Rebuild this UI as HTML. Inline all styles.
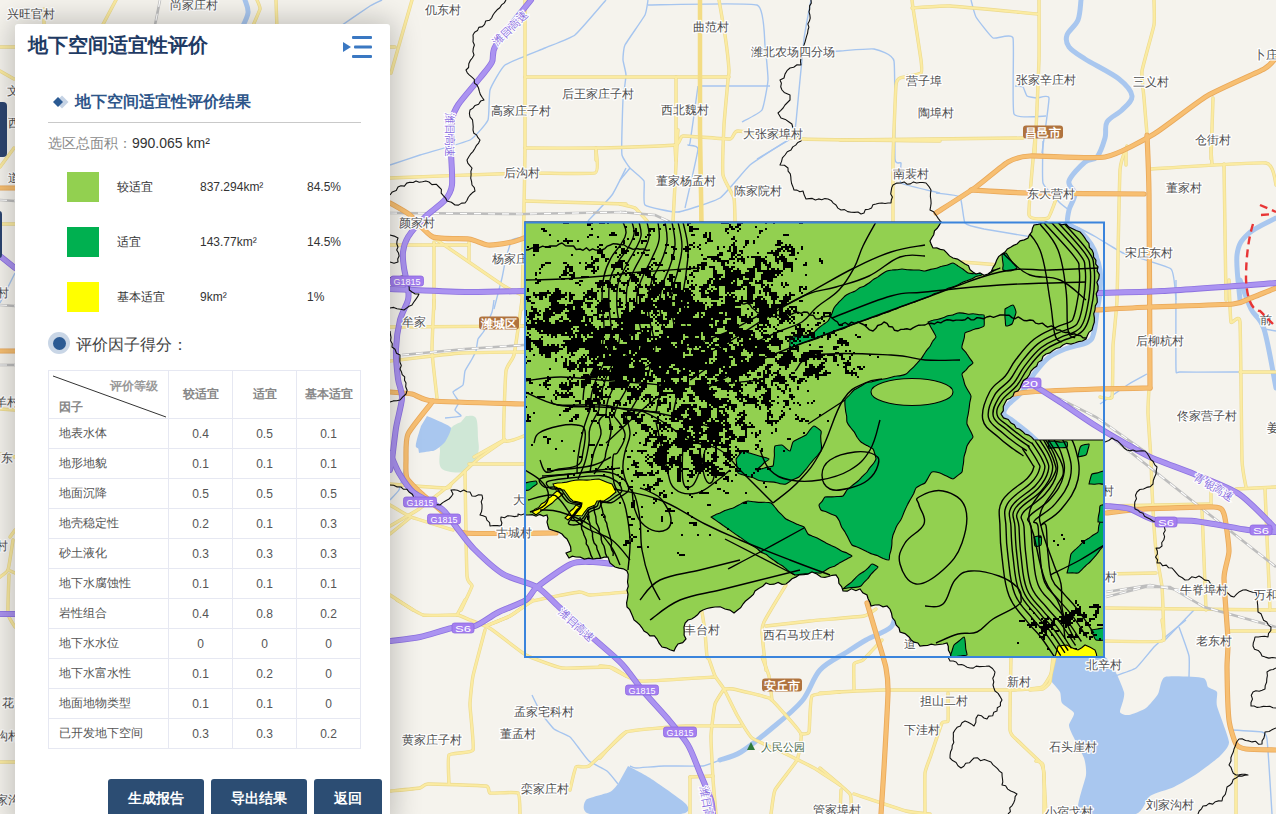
<!DOCTYPE html><html><head><meta charset="utf-8"><style>*{margin:0;padding:0;box-sizing:border-box}
html,body{width:1276px;height:814px;overflow:hidden;background:#f5f3ed;font-family:"Liberation Sans",sans-serif}
#map{position:absolute;left:0;top:0;width:1276px;height:814px}
.lbtn{position:absolute;background:#2c4570;border-radius:4px}
#panel{position:absolute;left:15px;top:24px;width:375px;height:800px;background:#fff;border-radius:3px;box-shadow:0 0 28px 4px rgba(0,0,0,0.22)}
#panel>*{position:absolute}
.title{left:13px;top:9px;font-size:20px;font-weight:bold;color:#1f3b64;line-height:24px;white-space:nowrap}
.menu{left:328px;top:12px}
.dia{left:37px;top:71px}
.sub{left:60px;top:68px;font-size:16px;font-weight:bold;color:#2d5589;line-height:20px;white-space:nowrap}
.hr{left:33px;top:98px;width:313px;height:1px;background:#c9c9c9}
.area{left:33px;top:110px;font-size:14px;line-height:18px;white-space:nowrap}
.area .lab{color:#8a8a8a}.area .val{color:#333}
.sw{left:52px;width:32px;height:30px}
.lt,.lv,.lp{font-size:12px;color:#333;line-height:14px;white-space:nowrap}
.lt{left:102px}.lv{left:185px}.lp{left:292px}
.radio{left:33px;top:308px;width:22px;height:22px;border-radius:50%;background:#c9d6e6}
.radio .dot{position:absolute;left:4.5px;top:4.5px;width:13px;height:13px;border-radius:50%;background:#2b5a93}
.rt{left:61px;top:311px;font-size:16px;color:#444;line-height:20px;white-space:nowrap}
.tb{left:33px;top:346px;border-collapse:collapse;width:313px;table-layout:fixed}
.tb td{border:1px solid #e6e8f2;height:30px;font-size:12px;color:#555;text-align:center;padding:0;white-space:nowrap}
.tb td:first-child{text-align:left;padding-left:10px;width:120px}
.tb tr td:nth-child(2){width:64px}.tb tr td:nth-child(3){width:64px}
.tb tr.hd td{height:48px;font-weight:bold;color:#888}
.tb td.diag{position:relative;padding:0}
.d1{position:absolute;left:61px;top:7px;font-weight:bold;color:#999}
.d2{position:absolute;left:10px;top:28px;font-weight:bold;color:#888}
.btn{top:755px;height:40px;background:#2c4d73;color:#fff;font-size:14px;font-weight:bold;text-align:center;line-height:38px;border-radius:3px}
</style></head><body>
<svg id="map" width="1276" height="814" viewBox="0 0 1276 814"><rect width="1276" height="814" fill="#f5f3ed"/><g fill="#cfe7d6"><path d="M466.0,416.0 C467.7,416.3 474.0,414.3 476.0,418.0 C478.0,421.7 477.7,432.2 478.0,438.0 C478.3,443.8 479.8,447.5 478.0,453.0 C476.2,458.5 473.0,468.3 467.0,471.0 C461.0,473.7 446.5,472.5 442.0,469.0 C437.5,465.5 440.2,454.0 440.0,450.0 C439.8,446.0 439.2,448.7 441.0,445.0 C442.8,441.3 447.7,431.8 451.0,428.0 C454.3,424.2 459.3,423.0 461.0,422.0Z"/></g><g fill="#a9c7ef"><path d="M1054.0,657.0 C1059.1,657.0 1098.0,653.5 1105.0,657.0 C1112.0,660.5 1122.5,686.5 1124.0,692.0 C1125.5,697.5 1119.5,709.7 1120.0,712.0 C1120.5,714.3 1126.4,715.4 1129.0,715.0 C1131.6,714.6 1143.1,710.1 1146.0,708.0 C1148.9,705.9 1156.1,697.1 1158.0,694.0 C1159.9,690.9 1160.5,678.6 1165.0,677.0 C1169.5,675.4 1198.7,677.0 1203.0,678.0 C1207.3,679.0 1206.6,685.6 1208.0,687.0 C1209.4,688.4 1216.1,690.1 1217.0,692.0 C1217.9,693.9 1215.8,701.0 1217.0,706.0 C1218.2,711.0 1228.7,737.0 1229.0,742.0 C1229.3,747.0 1223.1,752.9 1220.0,756.0 C1216.9,759.1 1202.6,769.9 1198.0,773.0 C1193.4,776.1 1178.8,784.7 1174.0,787.0 C1169.2,789.3 1153.8,793.3 1150.0,796.0 C1146.2,798.7 1143.1,812.2 1136.0,814.0 C1128.9,815.8 1084.0,817.9 1079.0,814.0 C1074.0,810.1 1085.5,780.6 1086.0,775.0 C1086.5,769.4 1085.4,762.1 1084.0,758.0 C1082.6,753.9 1073.5,737.3 1072.0,734.0 C1070.5,730.7 1068.8,727.1 1069.0,725.0 C1069.2,722.9 1074.7,715.2 1074.0,713.0 C1073.3,710.8 1063.4,705.1 1062.0,703.0 C1060.6,700.9 1061.2,694.3 1060.0,692.0 C1058.8,689.7 1051.0,681.2 1050.0,680.0Z"/><path d="M628.0,766.0 C630.2,767.2 644.2,774.2 650.0,778.0 C655.8,781.8 682.9,800.4 686.0,804.0 C689.1,807.6 690.6,813.0 681.0,814.0 C671.4,815.0 599.5,815.4 590.0,814.0 C580.5,812.6 584.0,802.2 586.0,800.0 C588.0,797.8 606.8,793.6 610.0,792.0 C613.2,790.4 617.2,784.8 618.0,784.0Z"/><path d="M427.0,416.0 C428.4,416.6 438.6,420.8 441.0,422.0 C443.4,423.2 450.6,426.0 451.0,428.0 C451.4,430.0 446.8,439.7 445.0,442.0 C443.2,444.3 435.9,450.5 433.0,451.0 C430.1,451.5 417.2,449.5 416.0,447.0 C414.8,444.5 420.5,428.1 421.0,426.0Z"/><path d="M417.0,440.0 C418.9,440.0 434.3,439.0 436.0,440.0 C437.7,441.0 435.7,448.7 434.0,450.0 C432.3,451.3 420.5,452.7 419.0,453.0Z"/></g><g fill="none" stroke="#a6c5ef" stroke-width="1.4" stroke-linejoin="round"><path d="M382.0,0.0 C381.2,0.4 373.1,4.0 370.0,6.0 C366.9,8.0 337.3,28.4 335.0,30.0"/><path d="M606.0,0.0 C603.9,2.3 579.1,31.8 575.0,35.0 C570.9,38.2 549.7,46.0 545.0,48.0 C540.3,50.0 508.7,62.2 505.0,65.0 C501.3,67.8 491.1,86.3 490.0,90.0 C488.9,93.7 489.3,116.7 488.0,120.0 C486.7,123.3 474.5,137.7 470.0,140.0 C465.5,142.3 425.3,153.3 420.0,155.0 C414.7,156.7 392.0,164.3 390.0,165.0"/><path d="M648.0,5.0 C655.3,5.0 749.2,2.3 757.0,5.0 C764.8,7.7 764.3,40.0 765.0,45.0 C765.7,50.0 768.2,75.7 768.0,80.0 C767.8,84.3 763.7,107.2 762.0,110.0 C760.3,112.8 743.3,121.2 742.0,122.0"/><path d="M648.0,0.0 C647.8,1.0 646.5,12.0 645.0,15.0 C643.5,18.0 626.5,42.0 625.0,45.0 C623.5,48.0 622.9,58.0 623.0,60.0 C623.1,62.0 626.0,72.3 626.0,75.0 C626.0,77.7 623.3,96.3 623.0,100.0 C622.7,103.7 622.1,126.3 622.0,130.0 C621.9,133.7 621.5,152.5 622.0,155.0 C622.5,157.5 628.5,166.3 630.0,168.0 C631.5,169.7 643.0,178.5 644.0,181.0 C645.0,183.5 642.7,202.9 645.0,205.0 C647.3,207.1 673.0,212.5 678.0,212.0 C683.0,211.5 715.2,201.1 720.0,198.0 C724.8,194.9 745.5,168.9 750.0,165.0 C754.5,161.1 785.5,141.7 788.0,140.0"/><path d="M700.0,86.0 L770.0,86.0"/><path d="M811.0,0.0 C810.5,2.6 805.0,30.9 804.0,39.0 C803.0,47.1 796.7,115.4 796.0,122.0 C795.3,128.6 794.1,136.9 794.0,138.0"/><path d="M765.0,56.0 C770.0,55.7 832.7,51.5 840.0,51.0 C847.3,50.5 870.4,48.3 874.0,49.0 C877.6,49.7 892.6,53.7 894.0,61.0 C895.4,68.3 894.5,152.2 895.0,159.0 C895.5,165.8 900.6,161.4 901.0,163.0 C901.4,164.6 898.4,181.0 901.0,183.0 C903.6,185.0 937.4,192.3 940.0,193.0"/><path d="M698.0,86.0 C697.5,89.8 690.7,139.1 690.0,143.0 C689.3,146.9 687.5,144.6 688.0,145.0 C688.5,145.4 698.2,144.8 698.0,149.0 C697.8,153.2 685.9,204.1 685.0,208.0"/><path d="M757.0,159.0 L789.0,140.0"/><path d="M630.0,168.0 L620.0,180.0"/><path d="M971.0,0.0 C971.3,1.1 974.5,14.5 976.0,17.0 C977.5,19.5 990.5,36.6 993.0,38.0 C995.5,39.4 1011.6,32.9 1013.0,38.0 C1014.4,43.1 1011.8,108.8 1014.0,114.0 C1016.2,119.2 1043.9,115.9 1046.0,116.0"/><path d="M1015.0,86.0 C1015.5,86.1 1022.2,86.3 1023.0,87.0 C1023.8,87.7 1026.1,95.3 1027.0,96.0 C1027.9,96.7 1035.5,97.9 1037.0,98.0 C1038.5,98.1 1048.7,94.3 1049.0,98.0 C1049.3,101.7 1042.5,149.3 1042.0,153.0"/><path d="M1043.0,141.0 C1043.0,143.8 1041.9,178.9 1043.0,183.0 C1044.1,187.1 1057.3,200.2 1059.0,202.0 C1060.7,203.8 1068.3,209.5 1069.0,210.0"/><path d="M936.0,193.0 C937.6,193.3 958.1,195.0 960.0,197.0 C961.9,199.0 963.4,220.9 965.0,223.0 C966.6,225.1 979.5,228.1 984.0,229.0 C988.5,229.9 1028.8,236.5 1032.0,237.0"/><path d="M1069.0,223.0 C1070.8,223.9 1092.4,235.0 1096.0,237.0 C1099.6,239.0 1118.0,250.9 1123.0,253.0 C1128.0,255.1 1167.5,265.9 1171.0,269.0 C1174.5,272.1 1175.7,297.9 1176.0,300.0"/><path d="M1176.0,280.0 C1176.0,285.9 1175.7,362.9 1176.0,369.0 C1176.3,375.1 1175.7,371.8 1180.0,372.0 C1184.3,372.2 1236.0,372.0 1240.0,372.0"/><path d="M1147.0,374.0 C1145.8,374.7 1132.1,382.0 1129.0,384.0 C1125.9,386.0 1101.9,402.7 1100.0,404.0"/><path d="M1264.0,329.0 L1276.0,331.0"/><path d="M626.0,168.0 C625.1,169.8 614.5,191.5 612.0,195.0 C609.5,198.5 589.6,219.3 588.0,221.0"/><path d="M524.0,237.0 C523.2,237.2 513.2,238.6 512.0,240.0 C510.8,241.4 506.7,255.5 506.0,258.0 C505.3,260.5 502.8,274.6 502.0,278.0 C501.2,281.4 494.5,306.9 494.0,309.0"/><path d="M494.0,300.0 C493.9,300.8 492.7,309.9 492.0,312.0 C491.3,314.1 484.9,329.2 484.0,331.0 C483.1,332.8 478.5,337.7 478.0,339.0 C477.5,340.3 476.4,349.7 476.0,351.0 C475.6,352.3 472.7,357.7 472.0,359.0 C471.3,360.3 465.6,369.3 465.0,371.0 C464.4,372.7 463.8,383.6 463.0,385.0 C462.2,386.4 453.3,390.9 453.0,392.0 C452.7,393.1 458.9,400.8 459.0,402.0 C459.1,403.2 454.9,409.1 455.0,410.0 C455.1,410.9 461.7,415.5 461.0,416.0 C460.3,416.5 446.1,417.9 445.0,418.0"/><path d="M407.0,440.0 C407.0,441.3 407.3,456.7 407.0,459.0 C406.7,461.3 403.5,472.9 403.0,475.0 C402.5,477.1 399.9,488.3 399.0,490.0 C398.1,491.7 390.6,499.3 390.0,500.0"/><path d="M1194.0,610.0 L1165.0,640.0"/><path d="M1186.0,620.0 C1183.9,621.7 1158.3,642.8 1155.0,646.0 C1151.7,649.2 1138.9,665.9 1136.0,668.0 C1133.1,670.1 1113.6,676.4 1112.0,677.0"/><path d="M1179.0,627.0 C1179.7,628.9 1188.3,652.7 1189.0,656.0 C1189.7,659.3 1189.0,675.6 1189.0,677.0"/><path d="M1231.0,730.0 C1233.1,730.1 1259.6,731.4 1262.0,732.0 C1264.4,732.6 1266.3,733.5 1267.0,739.0 C1267.7,744.5 1271.7,809.0 1272.0,814.0"/><path d="M532.0,695.0 C532.6,696.2 539.5,710.7 541.0,713.0 C542.5,715.3 552.1,727.4 554.0,729.0 C555.9,730.6 568.4,735.8 570.0,737.0 C571.6,738.2 576.7,745.4 578.0,747.0 C579.3,748.6 587.1,759.4 589.0,761.0 C590.9,762.6 605.1,769.5 607.0,771.0 C608.9,772.5 617.3,783.1 618.0,784.0"/><path d="M720.0,760.0 C718.9,760.4 706.7,765.6 703.0,766.0 C699.3,766.4 668.5,765.9 664.0,766.0 C659.5,766.1 638.3,768.0 636.0,768.0 C633.7,768.0 630.4,766.1 630.0,766.0"/><path d="M15.0,273.0 L0.0,303.0"/></g><g fill="none" stroke="#a9c7ef" stroke-width="5" stroke-linecap="round" stroke-linejoin="round"><path d="M245.0,0.0 C245.5,2.2 248.7,8.0 248.0,13.0 C247.3,18.0 242.2,27.2 241.0,30.0"/><path d="M1081.0,0.0 C1080.5,3.3 1080.3,14.2 1078.0,20.0 C1075.7,25.8 1068.5,30.5 1067.0,35.0 C1065.5,39.5 1066.0,43.0 1069.0,47.0 C1072.0,51.0 1076.7,53.7 1085.0,59.0 C1093.3,64.3 1111.2,72.8 1119.0,79.0 C1126.8,85.2 1131.5,90.8 1132.0,96.0 C1132.5,101.2 1126.2,105.7 1122.0,110.0 C1117.8,114.3 1109.8,117.3 1107.0,122.0 C1104.2,126.7 1106.7,132.2 1105.0,138.0 C1103.3,143.8 1100.3,153.0 1097.0,157.0 C1093.7,161.0 1089.7,158.0 1085.0,162.0 C1080.3,166.0 1070.7,175.7 1069.0,181.0 C1067.3,186.3 1075.0,189.2 1075.0,194.0 C1075.0,198.8 1070.2,204.7 1069.0,210.0 C1067.8,215.3 1066.2,222.5 1068.0,226.0 C1069.8,229.5 1075.3,226.2 1080.0,231.0 C1084.7,235.8 1093.3,243.5 1096.0,255.0 C1098.7,266.5 1096.0,292.5 1096.0,300.0"/><path d="M1240.0,280.0 C1241.8,284.8 1247.0,300.8 1251.0,309.0 C1255.0,317.2 1259.8,315.8 1264.0,329.0 C1268.2,342.2 1274.0,378.2 1276.0,388.0"/><path d="M1066.0,224.0 C1068.3,225.3 1075.3,227.3 1080.0,232.0 C1084.7,236.7 1090.7,245.7 1094.0,252.0 C1097.3,258.3 1099.0,263.3 1100.0,270.0 C1101.0,276.7 1100.5,285.0 1100.0,292.0 C1099.5,299.0 1098.0,305.3 1097.0,312.0 C1096.0,318.7 1095.5,327.0 1094.0,332.0 C1092.5,337.0 1092.8,339.2 1088.0,342.0 C1083.2,344.8 1071.7,346.3 1065.0,349.0 C1058.3,351.7 1053.2,353.8 1048.0,358.0 C1042.8,362.2 1038.2,368.5 1034.0,374.0 C1029.8,379.5 1027.3,385.8 1023.0,391.0 C1018.7,396.2 1011.2,401.2 1008.0,405.0 C1004.8,408.8 1003.2,411.3 1004.0,414.0 C1004.8,416.7 1009.2,418.0 1013.0,421.0 C1016.8,424.0 1023.2,428.8 1027.0,432.0 C1030.8,435.2 1034.5,438.7 1036.0,440.0"/><path d="M1276.0,218.0 C1271.3,220.7 1254.5,227.8 1248.0,234.0 C1241.5,240.2 1238.3,244.0 1237.0,255.0 C1235.7,266.0 1239.5,292.5 1240.0,300.0"/><path d="M895.0,612.0 C894.3,614.5 895.8,622.3 891.0,627.0 C886.2,631.7 873.3,635.8 866.0,640.0 C858.7,644.2 854.7,647.0 847.0,652.0 C839.3,657.0 827.5,661.8 820.0,670.0 C812.5,678.2 810.2,691.2 802.0,701.0 C793.8,710.8 781.2,720.5 771.0,729.0 C760.8,737.5 749.5,746.8 741.0,752.0 C732.5,757.2 723.5,758.7 720.0,760.0"/></g><g fill="none" stroke="#ecda8e" stroke-width="3.4" stroke-linecap="round" stroke-linejoin="round"><path d="M44.0,9.0 L44.0,30.0"/><path d="M116.0,0.0 L100.0,30.0"/><path d="M257.0,0.0 C257.2,0.6 260.4,7.0 260.0,9.0 C259.6,11.0 251.6,28.6 251.0,30.0"/><path d="M276.0,0.0 L277.0,30.0"/><path d="M0.0,47.0 L15.0,47.0"/><path d="M0.0,71.0 L14.0,79.0"/><path d="M0.0,167.0 L14.0,148.0"/><path d="M0.0,224.0 L15.0,224.0"/><path d="M0.0,409.0 L15.0,410.0"/><path d="M0.0,454.0 L15.0,457.0"/><path d="M13.0,540.0 C12.7,542.0 8.9,567.5 8.0,570.0 C7.1,572.5 0.5,576.5 0.0,577.0"/><path d="M8.0,570.0 L15.0,573.0"/><path d="M9.0,575.0 C8.9,577.6 7.6,610.5 8.0,614.0 C8.4,617.5 14.5,626.1 15.0,627.0"/><path d="M0.0,762.0 L15.0,762.0"/><path d="M10.0,537.0 L15.0,530.0"/><path d="M412.0,0.0 L391.0,73.0"/><path d="M390.0,47.0 L395.0,47.0"/><path d="M525.0,0.0 C525.0,10.0 525.1,136.1 525.0,150.0 C524.9,163.9 524.2,198.4 524.0,209.0 C523.8,219.6 522.1,302.3 522.0,309.0"/><path d="M525.0,77.0 C530.0,77.0 586.4,77.0 600.0,77.0 C613.6,77.0 720.4,77.0 729.0,77.0"/><path d="M676.0,77.0 C676.0,82.5 676.1,155.5 676.0,160.0 C675.9,164.5 675.1,146.0 675.0,145.0"/><path d="M525.0,148.0 C530.0,148.0 590.0,148.2 600.0,148.0 C610.0,147.8 669.5,145.8 675.0,145.0 C680.5,144.2 679.3,136.4 683.0,136.0 C686.7,135.6 726.3,139.3 730.0,139.0 C733.7,138.7 733.1,131.0 738.0,131.0 C742.9,131.0 789.5,138.3 803.0,139.0 C816.5,139.7 930.9,140.9 940.0,141.0"/><path d="M596.0,148.0 L596.0,160.0"/><path d="M700.0,0.0 C700.0,8.7 699.9,115.2 700.0,130.0 C700.1,144.8 700.9,215.9 701.0,222.0"/><path d="M719.0,0.0 C719.4,2.3 724.3,30.3 725.0,35.0 C725.7,39.7 728.8,67.0 729.0,70.0 C729.2,73.0 728.3,76.3 728.0,80.0 C727.7,83.7 724.3,118.7 724.0,125.0 C723.7,131.3 722.3,170.1 723.0,175.0 C723.7,179.9 733.2,194.9 734.0,198.0 C734.8,201.1 734.9,220.4 735.0,222.0"/><path d="M678.0,130.0 C677.9,131.0 677.3,138.9 677.0,145.0 C676.7,151.1 673.3,216.9 673.0,222.0"/><path d="M912.0,0.0 C912.1,0.5 912.4,4.0 913.0,8.0 C913.6,12.0 920.5,55.7 921.0,60.0 C921.5,64.3 922.4,71.8 921.0,73.0 C919.6,74.2 901.7,77.2 900.0,78.0 C898.3,78.8 896.5,79.6 896.0,85.0 C895.5,90.4 893.2,149.9 893.0,159.0 C892.8,168.1 893.0,217.8 893.0,222.0"/><path d="M912.0,8.0 C914.5,7.9 941.6,5.6 950.0,6.0 C958.4,6.4 1032.1,13.5 1038.0,14.0"/><path d="M1039.0,0.0 C1039.0,4.0 1039.3,49.8 1039.0,60.0 C1038.7,70.2 1035.3,146.8 1035.0,153.0"/><path d="M840.0,140.0 L1023.0,138.0"/><path d="M1154.0,0.0 C1154.0,1.7 1154.8,20.3 1154.0,25.0 C1153.2,29.7 1142.7,66.1 1142.0,71.0 C1141.3,75.9 1143.7,93.8 1144.0,98.0 C1144.3,102.2 1146.8,131.6 1147.0,134.0"/><path d="M1213.0,98.0 L1211.0,159.0"/><path d="M1126.0,149.0 L1126.0,165.0"/><path d="M390.0,178.0 C398.9,177.7 510.3,173.3 524.0,173.0 C537.7,172.7 590.2,174.5 595.0,173.0 C599.8,171.5 595.9,151.5 596.0,150.0"/><path d="M525.0,201.0 L626.0,204.0"/><path d="M620.0,204.0 C621.0,204.3 633.1,206.8 635.0,208.0 C636.9,209.2 647.1,221.1 648.0,222.0"/><path d="M1035.0,138.0 C1034.6,143.1 1028.1,209.7 1029.0,215.0 C1029.9,220.3 1046.2,219.1 1048.0,218.0 C1049.8,216.9 1055.5,200.3 1056.0,199.0"/><path d="M1127.0,146.0 C1126.5,147.6 1120.7,159.7 1120.0,170.0 C1119.3,180.3 1117.5,288.3 1117.0,300.0 C1116.5,311.7 1113.3,339.5 1113.0,346.0 C1112.7,352.5 1112.9,393.6 1112.0,397.0 C1111.1,400.4 1100.8,397.0 1100.0,397.0"/><path d="M1150.0,169.0 C1157.7,168.6 1257.6,161.9 1266.0,163.0 C1274.4,164.1 1275.3,183.5 1276.0,185.0"/><path d="M1210.0,138.0 L1212.0,164.0"/><path d="M1224.0,164.0 L1226.0,300.0"/><path d="M962.0,262.0 L1000.0,265.0"/><path d="M1229.0,280.0 C1229.1,282.8 1230.3,319.2 1231.0,322.0 C1231.7,324.8 1239.3,312.8 1240.0,322.0 C1240.7,331.2 1241.6,449.0 1242.0,460.0 C1242.4,471.0 1245.7,485.2 1246.0,487.0"/><path d="M1240.0,372.0 L1276.0,372.0"/><path d="M1149.0,388.0 C1148.9,389.7 1147.9,408.2 1148.0,413.0 C1148.1,417.8 1150.7,454.9 1151.0,460.0 C1151.3,465.1 1151.7,482.9 1152.0,489.0 C1152.3,495.1 1155.3,544.5 1156.0,551.0 C1156.7,557.5 1161.5,581.1 1162.0,587.0 C1162.5,592.9 1163.9,636.5 1164.0,640.0"/><path d="M1211.0,489.0 L1211.0,504.0"/><path d="M1106.0,506.0 L1211.0,504.0"/><path d="M1236.0,489.0 L1276.0,487.0"/><path d="M1202.0,509.0 L1206.0,610.0"/><path d="M1265.0,489.0 L1270.0,610.0"/><path d="M1106.0,574.0 L1156.0,573.0"/><path d="M1106.0,608.0 L1276.0,610.0"/><path d="M1228.0,631.0 L1276.0,631.0"/><path d="M1162.0,620.0 C1162.0,621.4 1165.9,639.6 1162.0,641.0 C1158.1,642.4 1107.9,641.0 1104.0,641.0"/><path d="M1053.0,657.0 C1052.8,658.7 1050.7,679.9 1050.0,682.0 C1049.3,684.1 1044.3,688.5 1043.0,689.0 C1041.7,689.5 1030.9,689.9 1030.0,690.0"/><path d="M1236.0,744.0 L1236.0,814.0"/><path d="M1036.0,761.0 C1036.5,761.3 1042.3,761.5 1043.0,765.0 C1043.7,768.5 1045.8,810.7 1046.0,814.0"/><path d="M390.0,245.0 L469.0,245.0"/><path d="M434.0,242.0 L434.0,309.0"/><path d="M469.0,242.0 L469.0,260.0"/><path d="M437.0,240.0 C441.5,243.1 498.2,282.3 504.0,286.0 C509.8,289.7 522.7,295.3 524.0,296.0"/><path d="M390.0,327.0 L524.0,326.0"/><path d="M434.0,300.0 C433.9,303.4 431.8,344.5 432.0,351.0 C432.2,357.5 436.7,394.9 437.0,398.0"/><path d="M522.0,300.0 C521.5,303.7 515.1,350.3 514.0,355.0 C512.9,359.7 506.7,365.3 506.0,371.0 C505.3,376.7 502.8,435.7 504.0,440.0 C505.2,444.3 522.7,436.3 524.0,436.0"/><path d="M504.0,440.0 L474.0,457.0"/><path d="M390.0,361.0 C394.7,360.5 452.1,353.6 461.0,353.0 C469.9,352.4 519.8,352.1 524.0,352.0"/><path d="M390.0,526.0 C391.9,524.9 414.9,511.8 419.0,509.0 C423.1,506.2 447.1,487.3 451.0,484.0 C454.9,480.7 474.4,461.9 478.0,459.0 C481.6,456.1 503.2,441.3 505.0,440.0"/><path d="M469.0,464.0 L524.0,464.0"/><path d="M465.0,471.0 C465.1,478.0 466.5,568.3 467.0,576.0 C467.5,583.7 472.4,583.7 472.0,586.0 C471.6,588.3 461.7,608.4 461.0,610.0"/><path d="M390.0,505.0 C391.4,505.8 406.8,515.3 411.0,517.0 C415.2,518.7 450.2,529.1 453.0,530.0"/><path d="M390.0,484.0 C393.8,484.3 442.9,488.0 447.0,488.0 C451.1,488.0 450.7,484.3 451.0,484.0"/><path d="M390.0,534.0 L411.0,517.0"/><path d="M390.0,595.0 L413.0,610.0"/><path d="M397.0,600.0 C398.7,601.0 419.0,614.0 423.0,615.0 C427.0,616.0 453.9,614.7 457.0,615.0 C460.1,615.3 467.7,619.1 470.0,620.0 C472.3,620.9 487.3,626.7 491.0,629.0 C494.7,631.3 521.3,652.4 526.0,655.0 C530.7,657.6 556.4,667.2 562.0,668.0 C567.6,668.8 605.7,666.5 610.0,667.0 C614.3,667.5 624.9,675.4 626.0,676.0"/><path d="M457.0,615.0 L465.0,600.0"/><path d="M486.0,626.0 C487.6,625.3 506.9,617.7 510.0,616.0 C513.1,614.3 531.5,601.1 533.0,600.0"/><path d="M485.0,630.0 C484.2,633.1 474.0,671.0 473.0,676.0 C472.0,681.0 470.0,700.1 470.0,705.0 C470.0,709.9 474.4,746.7 473.0,750.0 C471.6,753.3 450.6,752.7 449.0,755.0 C447.4,757.3 449.0,782.1 449.0,784.0"/><path d="M391.0,791.0 C392.9,790.8 417.5,788.5 420.0,788.0 C422.5,787.5 423.6,784.1 428.0,784.0 C432.4,783.9 481.9,785.4 486.0,786.0 C490.1,786.6 487.9,792.5 490.0,793.0 C492.1,793.5 516.0,791.6 518.0,793.0 C520.0,794.4 519.9,812.6 520.0,814.0"/><path d="M570.0,790.0 C570.4,788.5 574.7,768.6 576.0,767.0 C577.3,765.4 585.7,768.3 589.0,766.0 C592.3,763.7 623.5,734.3 626.0,732.0"/><path d="M486.0,626.0 C487.6,625.3 506.9,617.7 510.0,616.0 C513.1,614.3 528.4,602.6 533.0,601.0 C537.6,599.4 575.2,592.4 579.0,592.0 C582.8,591.6 586.8,595.0 590.0,595.0 C593.2,595.0 624.5,592.2 627.0,592.0"/><path d="M600.0,666.0 C600.6,666.1 606.4,666.0 609.0,667.0 C611.6,668.0 631.9,680.3 639.0,681.0 C646.1,681.7 709.9,677.3 715.0,677.0"/><path d="M702.0,612.0 C702.2,613.3 704.7,629.0 705.0,632.0 C705.3,635.0 706.7,655.2 707.0,657.0 C707.3,658.8 708.5,657.7 709.0,659.0 C709.5,660.3 714.0,674.0 715.0,676.0 C716.0,678.0 722.5,686.4 724.0,689.0 C725.5,691.6 735.1,711.7 737.0,715.0 C738.9,718.3 748.9,735.5 752.0,738.0 C755.1,740.5 779.9,751.0 784.0,753.0 C788.1,755.0 810.3,765.9 814.0,768.0 C817.7,770.1 838.3,783.9 840.0,785.0"/><path d="M724.0,689.0 C724.6,689.0 730.0,688.4 733.0,689.0 C736.0,689.6 765.7,696.5 769.0,698.0 C772.3,699.5 779.9,708.6 782.0,711.0 C784.1,713.4 800.0,730.7 801.0,734.0 C802.0,737.3 798.7,756.3 797.0,760.0 C795.3,763.7 776.7,786.4 775.0,790.0 C773.3,793.6 771.3,812.4 771.0,814.0"/><path d="M724.0,689.0 C723.4,690.0 715.9,700.9 715.0,704.0 C714.1,707.1 711.1,731.0 711.0,736.0 C710.9,741.0 712.7,773.8 713.0,779.0 C713.3,784.2 715.8,811.7 716.0,814.0"/><path d="M762.0,657.0 C762.5,658.3 768.3,673.1 769.0,676.0 C769.7,678.9 771.8,698.4 772.0,700.0"/><path d="M801.0,734.0 C801.5,733.9 808.3,734.5 809.0,732.0 C809.7,729.5 809.9,698.7 812.0,696.0 C814.1,693.3 838.1,692.3 840.0,692.0"/><path d="M600.0,758.0 C601.7,756.3 620.3,734.1 626.0,732.0 C631.7,729.9 678.3,726.4 686.0,726.0 C693.7,725.6 737.3,726.0 741.0,726.0"/><path d="M690.0,777.0 L713.0,776.0"/><path d="M690.0,777.0 L690.0,814.0"/><path d="M820.0,693.0 C824.3,692.8 871.2,690.2 884.0,690.0 C896.8,689.8 1001.5,690.2 1012.0,690.0 C1022.5,689.8 1039.4,688.1 1042.0,687.0 C1044.6,685.9 1050.1,676.0 1051.0,674.0 C1051.9,672.0 1054.7,658.1 1055.0,657.0"/><path d="M1011.0,657.0 C1010.9,661.9 1009.6,724.5 1010.0,730.0 C1010.4,735.5 1015.0,737.9 1017.0,740.0 C1019.0,742.1 1038.2,759.8 1040.0,762.0 C1041.8,764.2 1043.7,769.5 1044.0,773.0 C1044.3,776.5 1044.0,811.3 1044.0,814.0"/><path d="M854.0,689.0 C854.0,687.3 853.4,665.9 854.0,664.0 C854.6,662.1 861.1,661.6 863.0,660.0 C864.9,658.4 880.7,641.3 882.0,640.0"/><path d="M948.0,693.0 C948.0,694.9 948.4,719.0 948.0,721.0 C947.6,723.0 943.1,720.7 942.0,723.0 C940.9,725.3 932.1,751.7 931.0,755.0 C929.9,758.3 925.4,769.1 925.0,773.0 C924.6,776.9 925.0,811.3 925.0,814.0"/><path d="M820.0,768.0 C822.0,769.7 847.9,790.9 850.0,794.0 C852.1,797.1 850.9,812.7 851.0,814.0"/><path d="M841.0,790.0 L840.0,814.0"/><path d="M854.0,794.0 C857.5,795.1 900.9,809.7 906.0,811.0 C911.1,812.3 928.4,813.8 930.0,814.0"/><path d="M786.0,585.0 C785.3,586.2 776.5,600.5 775.0,603.0 C773.5,605.5 764.9,620.1 764.0,622.0 C763.1,623.9 761.9,628.8 762.0,632.0 C762.1,635.2 765.7,667.5 766.0,670.0"/><path d="M766.0,626.0 C768.9,625.7 803.5,621.7 810.0,621.0 C816.5,620.3 859.6,616.8 864.0,616.0 C868.4,615.2 875.2,609.5 876.0,609.0"/></g><g fill="none" stroke="#fbeba2" stroke-width="2.2" stroke-linecap="round" stroke-linejoin="round"><path d="M44.0,9.0 L44.0,30.0"/><path d="M116.0,0.0 L100.0,30.0"/><path d="M257.0,0.0 C257.2,0.6 260.4,7.0 260.0,9.0 C259.6,11.0 251.6,28.6 251.0,30.0"/><path d="M276.0,0.0 L277.0,30.0"/><path d="M0.0,47.0 L15.0,47.0"/><path d="M0.0,71.0 L14.0,79.0"/><path d="M0.0,167.0 L14.0,148.0"/><path d="M0.0,224.0 L15.0,224.0"/><path d="M0.0,409.0 L15.0,410.0"/><path d="M0.0,454.0 L15.0,457.0"/><path d="M13.0,540.0 C12.7,542.0 8.9,567.5 8.0,570.0 C7.1,572.5 0.5,576.5 0.0,577.0"/><path d="M8.0,570.0 L15.0,573.0"/><path d="M9.0,575.0 C8.9,577.6 7.6,610.5 8.0,614.0 C8.4,617.5 14.5,626.1 15.0,627.0"/><path d="M0.0,762.0 L15.0,762.0"/><path d="M10.0,537.0 L15.0,530.0"/><path d="M412.0,0.0 L391.0,73.0"/><path d="M390.0,47.0 L395.0,47.0"/><path d="M525.0,0.0 C525.0,10.0 525.1,136.1 525.0,150.0 C524.9,163.9 524.2,198.4 524.0,209.0 C523.8,219.6 522.1,302.3 522.0,309.0"/><path d="M525.0,77.0 C530.0,77.0 586.4,77.0 600.0,77.0 C613.6,77.0 720.4,77.0 729.0,77.0"/><path d="M676.0,77.0 C676.0,82.5 676.1,155.5 676.0,160.0 C675.9,164.5 675.1,146.0 675.0,145.0"/><path d="M525.0,148.0 C530.0,148.0 590.0,148.2 600.0,148.0 C610.0,147.8 669.5,145.8 675.0,145.0 C680.5,144.2 679.3,136.4 683.0,136.0 C686.7,135.6 726.3,139.3 730.0,139.0 C733.7,138.7 733.1,131.0 738.0,131.0 C742.9,131.0 789.5,138.3 803.0,139.0 C816.5,139.7 930.9,140.9 940.0,141.0"/><path d="M596.0,148.0 L596.0,160.0"/><path d="M700.0,0.0 C700.0,8.7 699.9,115.2 700.0,130.0 C700.1,144.8 700.9,215.9 701.0,222.0"/><path d="M719.0,0.0 C719.4,2.3 724.3,30.3 725.0,35.0 C725.7,39.7 728.8,67.0 729.0,70.0 C729.2,73.0 728.3,76.3 728.0,80.0 C727.7,83.7 724.3,118.7 724.0,125.0 C723.7,131.3 722.3,170.1 723.0,175.0 C723.7,179.9 733.2,194.9 734.0,198.0 C734.8,201.1 734.9,220.4 735.0,222.0"/><path d="M678.0,130.0 C677.9,131.0 677.3,138.9 677.0,145.0 C676.7,151.1 673.3,216.9 673.0,222.0"/><path d="M912.0,0.0 C912.1,0.5 912.4,4.0 913.0,8.0 C913.6,12.0 920.5,55.7 921.0,60.0 C921.5,64.3 922.4,71.8 921.0,73.0 C919.6,74.2 901.7,77.2 900.0,78.0 C898.3,78.8 896.5,79.6 896.0,85.0 C895.5,90.4 893.2,149.9 893.0,159.0 C892.8,168.1 893.0,217.8 893.0,222.0"/><path d="M912.0,8.0 C914.5,7.9 941.6,5.6 950.0,6.0 C958.4,6.4 1032.1,13.5 1038.0,14.0"/><path d="M1039.0,0.0 C1039.0,4.0 1039.3,49.8 1039.0,60.0 C1038.7,70.2 1035.3,146.8 1035.0,153.0"/><path d="M840.0,140.0 L1023.0,138.0"/><path d="M1154.0,0.0 C1154.0,1.7 1154.8,20.3 1154.0,25.0 C1153.2,29.7 1142.7,66.1 1142.0,71.0 C1141.3,75.9 1143.7,93.8 1144.0,98.0 C1144.3,102.2 1146.8,131.6 1147.0,134.0"/><path d="M1213.0,98.0 L1211.0,159.0"/><path d="M1126.0,149.0 L1126.0,165.0"/><path d="M390.0,178.0 C398.9,177.7 510.3,173.3 524.0,173.0 C537.7,172.7 590.2,174.5 595.0,173.0 C599.8,171.5 595.9,151.5 596.0,150.0"/><path d="M525.0,201.0 L626.0,204.0"/><path d="M620.0,204.0 C621.0,204.3 633.1,206.8 635.0,208.0 C636.9,209.2 647.1,221.1 648.0,222.0"/><path d="M1035.0,138.0 C1034.6,143.1 1028.1,209.7 1029.0,215.0 C1029.9,220.3 1046.2,219.1 1048.0,218.0 C1049.8,216.9 1055.5,200.3 1056.0,199.0"/><path d="M1127.0,146.0 C1126.5,147.6 1120.7,159.7 1120.0,170.0 C1119.3,180.3 1117.5,288.3 1117.0,300.0 C1116.5,311.7 1113.3,339.5 1113.0,346.0 C1112.7,352.5 1112.9,393.6 1112.0,397.0 C1111.1,400.4 1100.8,397.0 1100.0,397.0"/><path d="M1150.0,169.0 C1157.7,168.6 1257.6,161.9 1266.0,163.0 C1274.4,164.1 1275.3,183.5 1276.0,185.0"/><path d="M1210.0,138.0 L1212.0,164.0"/><path d="M1224.0,164.0 L1226.0,300.0"/><path d="M962.0,262.0 L1000.0,265.0"/><path d="M1229.0,280.0 C1229.1,282.8 1230.3,319.2 1231.0,322.0 C1231.7,324.8 1239.3,312.8 1240.0,322.0 C1240.7,331.2 1241.6,449.0 1242.0,460.0 C1242.4,471.0 1245.7,485.2 1246.0,487.0"/><path d="M1240.0,372.0 L1276.0,372.0"/><path d="M1149.0,388.0 C1148.9,389.7 1147.9,408.2 1148.0,413.0 C1148.1,417.8 1150.7,454.9 1151.0,460.0 C1151.3,465.1 1151.7,482.9 1152.0,489.0 C1152.3,495.1 1155.3,544.5 1156.0,551.0 C1156.7,557.5 1161.5,581.1 1162.0,587.0 C1162.5,592.9 1163.9,636.5 1164.0,640.0"/><path d="M1211.0,489.0 L1211.0,504.0"/><path d="M1106.0,506.0 L1211.0,504.0"/><path d="M1236.0,489.0 L1276.0,487.0"/><path d="M1202.0,509.0 L1206.0,610.0"/><path d="M1265.0,489.0 L1270.0,610.0"/><path d="M1106.0,574.0 L1156.0,573.0"/><path d="M1106.0,608.0 L1276.0,610.0"/><path d="M1228.0,631.0 L1276.0,631.0"/><path d="M1162.0,620.0 C1162.0,621.4 1165.9,639.6 1162.0,641.0 C1158.1,642.4 1107.9,641.0 1104.0,641.0"/><path d="M1053.0,657.0 C1052.8,658.7 1050.7,679.9 1050.0,682.0 C1049.3,684.1 1044.3,688.5 1043.0,689.0 C1041.7,689.5 1030.9,689.9 1030.0,690.0"/><path d="M1236.0,744.0 L1236.0,814.0"/><path d="M1036.0,761.0 C1036.5,761.3 1042.3,761.5 1043.0,765.0 C1043.7,768.5 1045.8,810.7 1046.0,814.0"/><path d="M390.0,245.0 L469.0,245.0"/><path d="M434.0,242.0 L434.0,309.0"/><path d="M469.0,242.0 L469.0,260.0"/><path d="M437.0,240.0 C441.5,243.1 498.2,282.3 504.0,286.0 C509.8,289.7 522.7,295.3 524.0,296.0"/><path d="M390.0,327.0 L524.0,326.0"/><path d="M434.0,300.0 C433.9,303.4 431.8,344.5 432.0,351.0 C432.2,357.5 436.7,394.9 437.0,398.0"/><path d="M522.0,300.0 C521.5,303.7 515.1,350.3 514.0,355.0 C512.9,359.7 506.7,365.3 506.0,371.0 C505.3,376.7 502.8,435.7 504.0,440.0 C505.2,444.3 522.7,436.3 524.0,436.0"/><path d="M504.0,440.0 L474.0,457.0"/><path d="M390.0,361.0 C394.7,360.5 452.1,353.6 461.0,353.0 C469.9,352.4 519.8,352.1 524.0,352.0"/><path d="M390.0,526.0 C391.9,524.9 414.9,511.8 419.0,509.0 C423.1,506.2 447.1,487.3 451.0,484.0 C454.9,480.7 474.4,461.9 478.0,459.0 C481.6,456.1 503.2,441.3 505.0,440.0"/><path d="M469.0,464.0 L524.0,464.0"/><path d="M465.0,471.0 C465.1,478.0 466.5,568.3 467.0,576.0 C467.5,583.7 472.4,583.7 472.0,586.0 C471.6,588.3 461.7,608.4 461.0,610.0"/><path d="M390.0,505.0 C391.4,505.8 406.8,515.3 411.0,517.0 C415.2,518.7 450.2,529.1 453.0,530.0"/><path d="M390.0,484.0 C393.8,484.3 442.9,488.0 447.0,488.0 C451.1,488.0 450.7,484.3 451.0,484.0"/><path d="M390.0,534.0 L411.0,517.0"/><path d="M390.0,595.0 L413.0,610.0"/><path d="M397.0,600.0 C398.7,601.0 419.0,614.0 423.0,615.0 C427.0,616.0 453.9,614.7 457.0,615.0 C460.1,615.3 467.7,619.1 470.0,620.0 C472.3,620.9 487.3,626.7 491.0,629.0 C494.7,631.3 521.3,652.4 526.0,655.0 C530.7,657.6 556.4,667.2 562.0,668.0 C567.6,668.8 605.7,666.5 610.0,667.0 C614.3,667.5 624.9,675.4 626.0,676.0"/><path d="M457.0,615.0 L465.0,600.0"/><path d="M486.0,626.0 C487.6,625.3 506.9,617.7 510.0,616.0 C513.1,614.3 531.5,601.1 533.0,600.0"/><path d="M485.0,630.0 C484.2,633.1 474.0,671.0 473.0,676.0 C472.0,681.0 470.0,700.1 470.0,705.0 C470.0,709.9 474.4,746.7 473.0,750.0 C471.6,753.3 450.6,752.7 449.0,755.0 C447.4,757.3 449.0,782.1 449.0,784.0"/><path d="M391.0,791.0 C392.9,790.8 417.5,788.5 420.0,788.0 C422.5,787.5 423.6,784.1 428.0,784.0 C432.4,783.9 481.9,785.4 486.0,786.0 C490.1,786.6 487.9,792.5 490.0,793.0 C492.1,793.5 516.0,791.6 518.0,793.0 C520.0,794.4 519.9,812.6 520.0,814.0"/><path d="M570.0,790.0 C570.4,788.5 574.7,768.6 576.0,767.0 C577.3,765.4 585.7,768.3 589.0,766.0 C592.3,763.7 623.5,734.3 626.0,732.0"/><path d="M486.0,626.0 C487.6,625.3 506.9,617.7 510.0,616.0 C513.1,614.3 528.4,602.6 533.0,601.0 C537.6,599.4 575.2,592.4 579.0,592.0 C582.8,591.6 586.8,595.0 590.0,595.0 C593.2,595.0 624.5,592.2 627.0,592.0"/><path d="M600.0,666.0 C600.6,666.1 606.4,666.0 609.0,667.0 C611.6,668.0 631.9,680.3 639.0,681.0 C646.1,681.7 709.9,677.3 715.0,677.0"/><path d="M702.0,612.0 C702.2,613.3 704.7,629.0 705.0,632.0 C705.3,635.0 706.7,655.2 707.0,657.0 C707.3,658.8 708.5,657.7 709.0,659.0 C709.5,660.3 714.0,674.0 715.0,676.0 C716.0,678.0 722.5,686.4 724.0,689.0 C725.5,691.6 735.1,711.7 737.0,715.0 C738.9,718.3 748.9,735.5 752.0,738.0 C755.1,740.5 779.9,751.0 784.0,753.0 C788.1,755.0 810.3,765.9 814.0,768.0 C817.7,770.1 838.3,783.9 840.0,785.0"/><path d="M724.0,689.0 C724.6,689.0 730.0,688.4 733.0,689.0 C736.0,689.6 765.7,696.5 769.0,698.0 C772.3,699.5 779.9,708.6 782.0,711.0 C784.1,713.4 800.0,730.7 801.0,734.0 C802.0,737.3 798.7,756.3 797.0,760.0 C795.3,763.7 776.7,786.4 775.0,790.0 C773.3,793.6 771.3,812.4 771.0,814.0"/><path d="M724.0,689.0 C723.4,690.0 715.9,700.9 715.0,704.0 C714.1,707.1 711.1,731.0 711.0,736.0 C710.9,741.0 712.7,773.8 713.0,779.0 C713.3,784.2 715.8,811.7 716.0,814.0"/><path d="M762.0,657.0 C762.5,658.3 768.3,673.1 769.0,676.0 C769.7,678.9 771.8,698.4 772.0,700.0"/><path d="M801.0,734.0 C801.5,733.9 808.3,734.5 809.0,732.0 C809.7,729.5 809.9,698.7 812.0,696.0 C814.1,693.3 838.1,692.3 840.0,692.0"/><path d="M600.0,758.0 C601.7,756.3 620.3,734.1 626.0,732.0 C631.7,729.9 678.3,726.4 686.0,726.0 C693.7,725.6 737.3,726.0 741.0,726.0"/><path d="M690.0,777.0 L713.0,776.0"/><path d="M690.0,777.0 L690.0,814.0"/><path d="M820.0,693.0 C824.3,692.8 871.2,690.2 884.0,690.0 C896.8,689.8 1001.5,690.2 1012.0,690.0 C1022.5,689.8 1039.4,688.1 1042.0,687.0 C1044.6,685.9 1050.1,676.0 1051.0,674.0 C1051.9,672.0 1054.7,658.1 1055.0,657.0"/><path d="M1011.0,657.0 C1010.9,661.9 1009.6,724.5 1010.0,730.0 C1010.4,735.5 1015.0,737.9 1017.0,740.0 C1019.0,742.1 1038.2,759.8 1040.0,762.0 C1041.8,764.2 1043.7,769.5 1044.0,773.0 C1044.3,776.5 1044.0,811.3 1044.0,814.0"/><path d="M854.0,689.0 C854.0,687.3 853.4,665.9 854.0,664.0 C854.6,662.1 861.1,661.6 863.0,660.0 C864.9,658.4 880.7,641.3 882.0,640.0"/><path d="M948.0,693.0 C948.0,694.9 948.4,719.0 948.0,721.0 C947.6,723.0 943.1,720.7 942.0,723.0 C940.9,725.3 932.1,751.7 931.0,755.0 C929.9,758.3 925.4,769.1 925.0,773.0 C924.6,776.9 925.0,811.3 925.0,814.0"/><path d="M820.0,768.0 C822.0,769.7 847.9,790.9 850.0,794.0 C852.1,797.1 850.9,812.7 851.0,814.0"/><path d="M841.0,790.0 L840.0,814.0"/><path d="M854.0,794.0 C857.5,795.1 900.9,809.7 906.0,811.0 C911.1,812.3 928.4,813.8 930.0,814.0"/><path d="M786.0,585.0 C785.3,586.2 776.5,600.5 775.0,603.0 C773.5,605.5 764.9,620.1 764.0,622.0 C763.1,623.9 761.9,628.8 762.0,632.0 C762.1,635.2 765.7,667.5 766.0,670.0"/><path d="M766.0,626.0 C768.9,625.7 803.5,621.7 810.0,621.0 C816.5,620.3 859.6,616.8 864.0,616.0 C868.4,615.2 875.2,609.5 876.0,609.0"/></g><path d="M700,0 L700,130 L701.5,222" fill="none" stroke="#f3dc84" stroke-width="4.5"/><g fill="none" stroke="#bdbdbd" stroke-width="2.6"><path d="M160.0,0.0 L154.0,30.0"/><path d="M390.0,213.0 L524.0,214.0 L626.0,212.0"/><path d="M620.0,212.0 L655.0,215.0 L670.0,222.0"/><path d="M402.0,355.0 L465.0,349.0 L524.0,345.0"/><path d="M1036.0,387.0 L1096.0,417.0 L1147.0,453.0"/><path d="M1115.0,440.0 L1276.0,567.0"/><path d="M1106.0,597.0 L1145.0,587.0 L1170.0,587.0 L1204.0,607.0 L1276.0,627.0"/><path d="M1106.0,592.0 L1150.0,585.0 L1190.0,592.0"/><path d="M0.0,200.0 L15.0,201.0"/><path d="M0.0,305.0 L15.0,306.0"/><path d="M0.0,365.0 L15.0,365.0"/></g><g fill="none" stroke="#ffffff" stroke-width="1.2" stroke-dasharray="7 7"><path d="M160.0,0.0 L154.0,30.0"/><path d="M390.0,213.0 L524.0,214.0 L626.0,212.0"/><path d="M620.0,212.0 L655.0,215.0 L670.0,222.0"/><path d="M402.0,355.0 L465.0,349.0 L524.0,345.0"/><path d="M1036.0,387.0 L1096.0,417.0 L1147.0,453.0"/><path d="M1115.0,440.0 L1276.0,567.0"/><path d="M1106.0,597.0 L1145.0,587.0 L1170.0,587.0 L1204.0,607.0 L1276.0,627.0"/><path d="M1106.0,592.0 L1150.0,585.0 L1190.0,592.0"/><path d="M0.0,200.0 L15.0,201.0"/><path d="M0.0,305.0 L15.0,306.0"/><path d="M0.0,365.0 L15.0,365.0"/></g><g fill="none" stroke="#e9a85a" stroke-width="5.2" stroke-linecap="round" stroke-linejoin="round"><path d="M0.0,188.0 L15.0,188.0"/><path d="M0.0,351.0 L15.0,351.0"/><path d="M390.0,203.0 C392.0,204.2 405.7,211.6 410.0,215.0 C414.3,218.4 427.1,234.6 433.0,237.0 C438.9,239.4 463.5,238.2 469.0,239.0 C474.5,239.8 483.7,244.7 488.0,245.0 C492.3,245.3 508.4,242.7 512.0,242.0 C515.6,241.3 522.8,238.4 524.0,238.0"/><path d="M936.0,213.0 C940.0,210.4 968.8,192.1 976.0,187.0 C983.2,181.9 1002.6,165.1 1008.0,162.0 C1013.4,158.9 1020.3,156.5 1030.0,156.0 C1039.7,155.5 1092.6,159.2 1105.0,157.0 C1117.4,154.8 1143.8,140.1 1154.0,134.0 C1164.2,127.9 1196.0,102.5 1207.0,96.0 C1218.0,89.5 1257.2,72.7 1264.0,69.0 C1270.8,65.3 1273.9,60.0 1275.0,59.0"/><path d="M971.0,190.0 C976.6,190.3 1009.7,192.6 1027.0,193.0 C1044.3,193.4 1132.3,193.9 1144.0,194.0"/><path d="M1147.0,135.0 C1147.2,140.9 1148.7,168.7 1149.0,194.0 C1149.3,219.3 1149.9,368.6 1150.0,388.0"/><path d="M1096.0,310.0 C1101.3,309.7 1135.3,307.6 1149.0,307.0 C1162.7,306.4 1222.8,304.9 1233.0,304.0 C1243.2,303.1 1246.7,299.6 1251.0,298.0 C1255.3,296.4 1273.5,289.0 1276.0,288.0"/><path d="M1000.0,396.0 C1003.0,395.6 1020.4,392.7 1030.0,392.0 C1039.6,391.3 1084.0,389.4 1096.0,389.0 C1108.0,388.6 1144.6,388.1 1150.0,388.0"/><path d="M390.0,392.0 C392.2,392.2 407.7,393.1 412.0,394.0 C416.3,394.9 421.8,400.0 433.0,401.0 C444.2,402.0 514.9,403.7 524.0,404.0"/><path d="M433.0,401.0 C430.5,404.3 410.7,428.1 408.0,434.0 C405.3,439.9 406.1,455.6 406.0,460.0 C405.9,464.4 405.4,474.6 407.0,478.0 C408.6,481.4 417.4,489.7 422.0,494.0 C426.6,498.3 448.7,517.1 453.0,521.0 C457.3,524.9 454.7,531.8 465.0,533.0 C475.3,534.2 546.9,533.0 556.0,533.0"/><path d="M1106.0,513.0 C1109.9,512.6 1134.2,509.6 1145.0,509.0 C1155.8,508.4 1206.1,506.5 1214.0,507.0 C1221.9,507.5 1222.5,509.6 1224.0,514.0 C1225.5,518.4 1229.0,544.6 1229.0,551.0 C1229.0,557.4 1224.1,569.1 1224.0,578.0 C1223.9,586.9 1227.7,631.0 1228.0,640.0 C1228.3,649.0 1226.9,660.0 1227.0,668.0 C1227.1,676.0 1228.1,712.4 1229.0,720.0 C1229.9,727.6 1234.3,741.1 1236.0,744.0 C1237.7,746.9 1242.0,748.4 1246.0,749.0 C1250.0,749.6 1273.0,749.9 1276.0,750.0"/><path d="M867.0,603.0 C868.1,606.7 876.1,633.5 878.0,640.0 C879.9,646.5 885.0,662.7 886.0,668.0 C887.0,673.3 888.2,683.0 888.0,693.0 C887.8,703.0 884.7,755.9 884.0,768.0 C883.3,780.1 881.3,809.4 881.0,814.0"/></g><g fill="none" stroke="#f7bf72" stroke-width="3.6" stroke-linecap="round" stroke-linejoin="round"><path d="M0.0,188.0 L15.0,188.0"/><path d="M0.0,351.0 L15.0,351.0"/><path d="M390.0,203.0 C392.0,204.2 405.7,211.6 410.0,215.0 C414.3,218.4 427.1,234.6 433.0,237.0 C438.9,239.4 463.5,238.2 469.0,239.0 C474.5,239.8 483.7,244.7 488.0,245.0 C492.3,245.3 508.4,242.7 512.0,242.0 C515.6,241.3 522.8,238.4 524.0,238.0"/><path d="M936.0,213.0 C940.0,210.4 968.8,192.1 976.0,187.0 C983.2,181.9 1002.6,165.1 1008.0,162.0 C1013.4,158.9 1020.3,156.5 1030.0,156.0 C1039.7,155.5 1092.6,159.2 1105.0,157.0 C1117.4,154.8 1143.8,140.1 1154.0,134.0 C1164.2,127.9 1196.0,102.5 1207.0,96.0 C1218.0,89.5 1257.2,72.7 1264.0,69.0 C1270.8,65.3 1273.9,60.0 1275.0,59.0"/><path d="M971.0,190.0 C976.6,190.3 1009.7,192.6 1027.0,193.0 C1044.3,193.4 1132.3,193.9 1144.0,194.0"/><path d="M1147.0,135.0 C1147.2,140.9 1148.7,168.7 1149.0,194.0 C1149.3,219.3 1149.9,368.6 1150.0,388.0"/><path d="M1096.0,310.0 C1101.3,309.7 1135.3,307.6 1149.0,307.0 C1162.7,306.4 1222.8,304.9 1233.0,304.0 C1243.2,303.1 1246.7,299.6 1251.0,298.0 C1255.3,296.4 1273.5,289.0 1276.0,288.0"/><path d="M1000.0,396.0 C1003.0,395.6 1020.4,392.7 1030.0,392.0 C1039.6,391.3 1084.0,389.4 1096.0,389.0 C1108.0,388.6 1144.6,388.1 1150.0,388.0"/><path d="M390.0,392.0 C392.2,392.2 407.7,393.1 412.0,394.0 C416.3,394.9 421.8,400.0 433.0,401.0 C444.2,402.0 514.9,403.7 524.0,404.0"/><path d="M433.0,401.0 C430.5,404.3 410.7,428.1 408.0,434.0 C405.3,439.9 406.1,455.6 406.0,460.0 C405.9,464.4 405.4,474.6 407.0,478.0 C408.6,481.4 417.4,489.7 422.0,494.0 C426.6,498.3 448.7,517.1 453.0,521.0 C457.3,524.9 454.7,531.8 465.0,533.0 C475.3,534.2 546.9,533.0 556.0,533.0"/><path d="M1106.0,513.0 C1109.9,512.6 1134.2,509.6 1145.0,509.0 C1155.8,508.4 1206.1,506.5 1214.0,507.0 C1221.9,507.5 1222.5,509.6 1224.0,514.0 C1225.5,518.4 1229.0,544.6 1229.0,551.0 C1229.0,557.4 1224.1,569.1 1224.0,578.0 C1223.9,586.9 1227.7,631.0 1228.0,640.0 C1228.3,649.0 1226.9,660.0 1227.0,668.0 C1227.1,676.0 1228.1,712.4 1229.0,720.0 C1229.9,727.6 1234.3,741.1 1236.0,744.0 C1237.7,746.9 1242.0,748.4 1246.0,749.0 C1250.0,749.6 1273.0,749.9 1276.0,750.0"/><path d="M867.0,603.0 C868.1,606.7 876.1,633.5 878.0,640.0 C879.9,646.5 885.0,662.7 886.0,668.0 C887.0,673.3 888.2,683.0 888.0,693.0 C887.8,703.0 884.7,755.9 884.0,768.0 C883.3,780.1 881.3,809.4 881.0,814.0"/></g><g fill="none" stroke="#8d72e0" stroke-width="6" stroke-linecap="round" stroke-linejoin="round"><path d="M531.0,0.0 C526.3,6.0 501.2,36.7 496.0,45.0 C490.8,53.3 494.1,57.6 492.0,62.0 C489.9,66.4 484.5,72.3 480.0,78.0 C475.5,83.7 461.7,99.4 458.0,105.0 C454.3,110.6 452.9,114.0 452.0,120.0 C451.1,126.0 451.0,141.3 451.0,150.0 C451.0,158.7 452.8,178.3 452.0,185.0 C451.2,191.7 448.6,195.7 445.0,200.0 C441.4,204.3 429.9,212.1 425.0,217.0 C420.1,221.9 410.9,232.3 408.0,237.0 C405.1,241.7 403.5,247.9 403.0,252.0 C402.5,256.1 403.3,263.2 404.0,268.0 C404.7,272.8 407.5,283.7 408.0,288.0 C408.5,292.3 409.1,295.7 408.0,300.0 C406.9,304.3 401.6,313.5 400.0,320.0 C398.4,326.5 396.3,341.1 396.0,349.0 C395.7,356.9 397.2,372.5 398.0,379.0 C398.8,385.5 402.3,391.5 402.0,398.0 C401.7,404.5 397.3,419.7 396.0,428.0 C394.7,436.3 392.8,454.4 392.0,460.0 C391.2,465.6 390.3,468.7 390.0,470.0"/><path d="M390.0,289.0 C400.0,289.4 447.1,291.7 465.0,292.0 C482.9,292.3 516.1,291.1 524.0,291.0"/><path d="M390.0,453.0 C391.2,455.7 395.9,467.8 399.0,473.0 C402.1,478.2 407.3,487.2 413.0,492.0 C418.7,496.8 436.1,504.2 442.0,509.0 C447.9,513.8 452.7,522.7 457.0,528.0 C461.3,533.3 467.9,542.9 474.0,549.0 C480.1,555.1 494.6,568.9 503.0,574.0 C511.4,579.1 529.5,582.6 537.0,587.0 C544.5,591.4 551.5,600.2 559.0,607.0 C566.5,613.8 584.6,630.4 593.0,638.0 C601.4,645.6 615.3,656.9 622.0,664.0 C628.7,671.1 636.9,683.7 643.0,691.0 C649.1,698.3 662.0,711.8 668.0,719.0 C674.0,726.2 683.7,737.8 688.0,745.0 C692.3,752.2 696.9,765.7 700.0,773.0 C703.1,780.3 709.3,794.5 711.0,800.0 C712.7,805.5 712.7,812.1 713.0,814.0"/><path d="M391.0,641.0 C394.9,640.5 411.9,638.7 420.0,637.0 C428.1,635.3 444.7,629.5 452.0,628.0 C459.3,626.5 469.0,628.0 475.0,626.0 C481.0,624.0 490.2,616.5 497.0,613.0 C503.8,609.5 520.7,603.5 526.0,600.0 C531.3,596.5 531.0,591.8 537.0,587.0 C543.0,582.2 563.5,567.3 571.0,564.0 C578.5,560.7 587.4,562.0 593.0,562.0 C598.6,562.0 610.3,563.7 613.0,564.0"/><path d="M1096.0,293.0 C1104.8,292.7 1138.0,292.3 1162.0,291.0 C1186.0,289.7 1260.8,284.1 1276.0,283.0"/><path d="M1030.0,383.0 C1034.0,385.5 1051.2,396.3 1060.0,402.0 C1068.8,407.7 1087.6,420.7 1096.0,426.0 C1104.4,431.3 1115.8,437.9 1123.0,442.0 C1130.2,446.1 1140.5,452.7 1150.0,457.0 C1159.5,461.3 1182.1,469.1 1194.0,474.0 C1205.9,478.9 1228.1,486.7 1239.0,494.0 C1249.9,501.3 1271.1,524.3 1276.0,529.0"/><path d="M1106.0,506.0 C1109.2,506.4 1123.5,507.1 1130.0,509.0 C1136.5,510.9 1146.5,518.4 1155.0,520.0 C1163.5,521.6 1181.6,519.7 1194.0,521.0 C1206.4,522.3 1237.1,528.5 1248.0,530.0 C1258.9,531.5 1272.3,531.7 1276.0,532.0"/><path d="M0.0,256.0 L15.0,268.0"/><path d="M0.0,614.0 L15.0,614.0"/></g><g fill="none" stroke="#ab93f1" stroke-width="4.4" stroke-linecap="round" stroke-linejoin="round"><path d="M531.0,0.0 C526.3,6.0 501.2,36.7 496.0,45.0 C490.8,53.3 494.1,57.6 492.0,62.0 C489.9,66.4 484.5,72.3 480.0,78.0 C475.5,83.7 461.7,99.4 458.0,105.0 C454.3,110.6 452.9,114.0 452.0,120.0 C451.1,126.0 451.0,141.3 451.0,150.0 C451.0,158.7 452.8,178.3 452.0,185.0 C451.2,191.7 448.6,195.7 445.0,200.0 C441.4,204.3 429.9,212.1 425.0,217.0 C420.1,221.9 410.9,232.3 408.0,237.0 C405.1,241.7 403.5,247.9 403.0,252.0 C402.5,256.1 403.3,263.2 404.0,268.0 C404.7,272.8 407.5,283.7 408.0,288.0 C408.5,292.3 409.1,295.7 408.0,300.0 C406.9,304.3 401.6,313.5 400.0,320.0 C398.4,326.5 396.3,341.1 396.0,349.0 C395.7,356.9 397.2,372.5 398.0,379.0 C398.8,385.5 402.3,391.5 402.0,398.0 C401.7,404.5 397.3,419.7 396.0,428.0 C394.7,436.3 392.8,454.4 392.0,460.0 C391.2,465.6 390.3,468.7 390.0,470.0"/><path d="M390.0,289.0 C400.0,289.4 447.1,291.7 465.0,292.0 C482.9,292.3 516.1,291.1 524.0,291.0"/><path d="M390.0,453.0 C391.2,455.7 395.9,467.8 399.0,473.0 C402.1,478.2 407.3,487.2 413.0,492.0 C418.7,496.8 436.1,504.2 442.0,509.0 C447.9,513.8 452.7,522.7 457.0,528.0 C461.3,533.3 467.9,542.9 474.0,549.0 C480.1,555.1 494.6,568.9 503.0,574.0 C511.4,579.1 529.5,582.6 537.0,587.0 C544.5,591.4 551.5,600.2 559.0,607.0 C566.5,613.8 584.6,630.4 593.0,638.0 C601.4,645.6 615.3,656.9 622.0,664.0 C628.7,671.1 636.9,683.7 643.0,691.0 C649.1,698.3 662.0,711.8 668.0,719.0 C674.0,726.2 683.7,737.8 688.0,745.0 C692.3,752.2 696.9,765.7 700.0,773.0 C703.1,780.3 709.3,794.5 711.0,800.0 C712.7,805.5 712.7,812.1 713.0,814.0"/><path d="M391.0,641.0 C394.9,640.5 411.9,638.7 420.0,637.0 C428.1,635.3 444.7,629.5 452.0,628.0 C459.3,626.5 469.0,628.0 475.0,626.0 C481.0,624.0 490.2,616.5 497.0,613.0 C503.8,609.5 520.7,603.5 526.0,600.0 C531.3,596.5 531.0,591.8 537.0,587.0 C543.0,582.2 563.5,567.3 571.0,564.0 C578.5,560.7 587.4,562.0 593.0,562.0 C598.6,562.0 610.3,563.7 613.0,564.0"/><path d="M1096.0,293.0 C1104.8,292.7 1138.0,292.3 1162.0,291.0 C1186.0,289.7 1260.8,284.1 1276.0,283.0"/><path d="M1030.0,383.0 C1034.0,385.5 1051.2,396.3 1060.0,402.0 C1068.8,407.7 1087.6,420.7 1096.0,426.0 C1104.4,431.3 1115.8,437.9 1123.0,442.0 C1130.2,446.1 1140.5,452.7 1150.0,457.0 C1159.5,461.3 1182.1,469.1 1194.0,474.0 C1205.9,478.9 1228.1,486.7 1239.0,494.0 C1249.9,501.3 1271.1,524.3 1276.0,529.0"/><path d="M1106.0,506.0 C1109.2,506.4 1123.5,507.1 1130.0,509.0 C1136.5,510.9 1146.5,518.4 1155.0,520.0 C1163.5,521.6 1181.6,519.7 1194.0,521.0 C1206.4,522.3 1237.1,528.5 1248.0,530.0 C1258.9,531.5 1272.3,531.7 1276.0,532.0"/><path d="M0.0,256.0 L15.0,268.0"/><path d="M0.0,614.0 L15.0,614.0"/></g><g fill="none" stroke="#111" stroke-width="1.1" stroke-linejoin="round"><path d="M506.0,0.0 L504.3,2.9 L501.6,4.9 L499.8,7.7 L497.1,9.8 L494.9,12.3 L493.0,15.0 L491.6,18.0 L489.5,20.3 L485.7,21.0 L484.6,24.3 L482.4,26.6 L478.8,27.4 L477.5,30.6 L474.6,32.2 L473.0,35.0 L473.2,38.3 L473.0,41.7 L474.4,45.0 L473.3,48.4 L472.9,51.7 L474.0,55.0 L472.3,58.0 L470.2,60.7 L468.8,63.8 L468.6,67.5 L466.0,70.0 L467.3,72.9 L469.5,75.1 L471.9,77.2 L474.3,79.3 L474.4,83.1 L477.0,85.0 L478.5,88.0 L479.3,91.2 L480.3,94.4 L482.1,97.2 L484.0,100.0 L480.6,101.1 L478.6,104.2 L475.1,105.4 L472.9,108.1 L470.0,110.0 L469.4,113.5 L470.0,116.8 L472.5,119.8 L472.9,123.2 L473.2,126.6 L473.0,130.0 L473.8,133.2 L476.6,134.9 L478.0,137.7 L480.0,140.0 L478.6,143.1 L476.3,145.7 L474.7,148.7 L472.9,151.6 L470.5,154.2 L468.7,157.0 L467.0,160.0 L467.8,163.2 L469.9,165.6 L472.0,168.0 L470.9,171.4 L471.1,174.8 L470.7,178.2 L471.6,181.6 L472.0,185.0 L474.3,187.6 L475.0,191.0 L472.3,192.8 L470.1,195.0 L468.2,197.5 L466.9,200.5 L465.0,203.0 L461.6,203.1 L458.5,205.1 L455.0,205.0 L451.4,202.2 L447.0,201.0 L445.6,198.1 L443.3,195.7 L441.2,193.2 L441.4,189.3 L439.0,187.0 L436.2,184.2 L431.9,184.6 L429.0,182.0 L425.8,181.0 L422.5,181.7 L419.2,182.2 L416.0,181.0 L413.2,182.5 L409.8,182.3 L406.7,183.1 L404.4,186.1 L400.9,185.7 L398.0,187.0 L396.2,190.5 L392.3,191.9 L390.0,195.0"/><path d="M390.0,235.0 L394.2,236.1 L398.0,238.0 L397.0,241.0 L396.8,244.0 L398.0,247.0 L396.7,250.0 L398.5,253.0 L399.1,256.0 L397.7,259.0 L398.0,262.0 L394.0,263.2 L390.0,262.0"/><path d="M390.0,278.0 L392.9,276.7 L396.0,276.8 L399.0,276.8 L402.0,276.0 L404.4,278.2 L406.3,280.7 L406.2,284.5 L409.1,286.4 L409.3,290.0 L412.0,292.0 L415.2,294.0 L419.0,294.0 L417.5,296.9 L415.6,299.6 L413.7,302.2 L412.0,305.0 L409.1,306.3 L406.5,308.1 L404.0,310.0 L400.5,309.3 L397.0,308.7 L393.7,307.4 L390.0,308.0"/><path d="M390.0,331.0 L390.4,334.2 L391.0,337.4 L390.6,340.7 L392.3,343.7 L392.0,347.0 L395.0,349.3 L396.5,353.2 L400.0,355.0 L399.9,358.5 L399.9,362.0 L401.3,365.5 L400.0,369.0 L401.4,371.7 L402.2,374.7 L404.7,376.9 L404.5,380.3 L406.0,383.0 L405.7,386.7 L407.1,390.3 L406.0,394.0 L402.8,396.8 L400.0,400.0 L396.7,400.8 L393.2,400.9 L390.0,402.0"/><path d="M390.0,485.0 L393.7,485.3 L397.2,486.9 L401.0,487.0 L403.3,489.2 L407.0,489.3 L409.0,492.0 L412.4,494.3 L414.0,498.0 L416.6,499.8 L419.1,501.9 L422.7,501.6 L425.3,503.5 L428.0,505.0 L431.0,505.2 L434.0,504.5 L437.0,504.6 L440.0,505.0 L442.7,502.6 L445.8,500.7 L449.0,499.0 L451.2,496.7 L453.0,494.0 L451.0,490.0 L454.2,489.8 L457.4,490.3 L460.4,491.7 L463.8,490.1 L466.8,491.8 L470.0,492.0 L472.0,496.0 L475.4,496.3 L478.6,494.8 L482.0,495.0 L482.7,498.3 L481.2,501.7 L482.0,505.0 L482.0,508.5 L481.5,511.8 L480.0,515.0 L483.1,515.8 L486.0,517.0 L486.9,520.2 L489.6,522.6 L490.0,526.0 L493.7,525.5 L497.3,525.6 L501.0,526.0 L501.9,523.0 L500.8,520.0 L501.0,517.0 L504.5,517.7 L507.7,515.7 L511.2,516.0 L514.6,516.6 L518.0,516.0 L518.0,514.0 L521.0,515.0 L524.0,513.9 L527.0,513.3 L530.0,513.0 L533.0,514.1 L536.0,513.2 L539.0,514.8 L542.0,514.9 L545.0,513.2 L548.0,514.0"/><path d="M811.0,0.0 L811.3,3.1 L809.6,5.9 L809.7,9.0 L809.0,11.9 L809.9,15.0 L810.2,18.1 L809.4,21.1 L807.8,23.9 L808.9,27.1 L808.0,30.0 L807.6,33.1 L806.6,36.1 L805.8,39.1 L805.0,42.1 L804.0,45.0 L802.4,48.2 L803.9,51.8 L803.8,55.2 L800.9,58.2 L800.5,61.5 L801.0,65.0 L797.0,64.8 L793.7,67.2 L790.0,68.0 L787.0,70.7 L785.0,74.1 L784.0,78.0 L780.0,80.0 L781.4,83.2 L780.7,86.8 L782.0,90.0 L784.2,92.4 L787.1,93.7 L790.0,95.0 L790.0,100.0 L787.5,102.5 L785.0,105.0 L783.1,108.0 L780.6,110.6 L778.0,113.0 L781.0,118.0 L785.3,119.4 L789.0,122.0 L791.9,124.0 L792.8,127.5 L795.0,130.0 L797.0,132.5 L797.3,135.9 L800.5,137.7 L801.0,141.0 L797.8,142.5 L795.7,145.1 L792.8,146.9 L791.0,150.0 L787.3,151.7 L785.0,155.0 L782.4,157.9 L781.5,161.6 L780.0,165.0 L784.4,165.3 L788.0,168.0 L788.1,171.2 L790.3,173.8 L790.8,176.9 L791.0,180.0 L791.6,183.5 L792.9,186.7 L794.0,190.0 L797.0,190.1 L799.9,191.8 L803.0,191.0 L804.2,195.1 L806.0,199.0 L809.1,198.6 L812.3,198.4 L815.4,199.9 L818.6,198.9 L821.7,199.7 L824.9,198.6 L828.0,199.0 L831.1,200.4 L833.3,203.1 L836.0,205.0 L837.9,208.1 L841.0,210.0 L844.5,209.6 L847.7,211.6 L851.1,212.3 L854.5,212.4 L858.0,212.0 L861.0,214.0 L864.0,213.0 L865.3,209.6 L868.7,209.3 L871.5,208.1 L872.9,204.7 L876.0,204.0 L879.0,203.2 L882.0,203.0 L885.0,203.5 L888.0,203.0 L891.0,203.0 L891.3,200.0 L892.4,197.1 L890.7,193.9 L891.2,190.9 L891.7,187.9 L893.0,185.0 L896.8,183.1 L901.0,183.0 L904.1,181.9 L907.2,184.2 L910.4,183.9 L913.5,181.9 L916.6,183.0 L919.8,182.5 L922.9,182.5 L926.0,183.0 L928.8,186.3 L931.0,190.0 L930.5,193.3 L930.4,196.7 L930.9,200.0 L931.1,203.4 L930.6,206.7 L930.0,210.0 L933.6,211.7 L936.0,215.0 L938.4,218.6 L941.0,222.0"/><path d="M1105.0,442.0 L1108.8,440.5 L1112.0,438.0 L1114.7,439.8 L1117.7,441.1 L1120.0,443.3 L1122.2,445.7 L1124.3,448.2 L1127.0,450.0 L1130.0,450.9 L1133.0,450.0 L1136.0,451.3 L1139.0,451.0 L1142.0,450.7 L1145.0,451.0 L1147.3,453.5 L1149.0,456.3 L1150.6,459.3 L1153.2,461.5 L1154.6,464.6 L1157.0,467.0 L1156.3,470.4 L1156.0,474.0 L1154.5,477.2 L1153.3,480.5 L1153.0,484.0 L1150.3,486.6 L1146.7,487.4 L1143.5,489.0 L1139.8,489.5 L1137.0,492.0 L1135.5,495.3 L1136.5,498.8 L1134.8,502.1 L1134.6,505.5 L1135.0,509.0 L1137.8,510.2 L1140.1,512.3 L1143.0,513.2 L1144.5,516.3 L1147.3,517.7 L1150.0,519.0 L1152.7,521.0 L1155.8,521.7 L1158.9,522.4 L1161.8,523.6 L1165.0,524.0 L1164.4,527.1 L1165.2,530.4 L1163.5,533.4 L1164.6,536.7 L1163.8,539.8 L1161.7,542.8 L1162.0,546.0 L1159.4,548.1 L1156.0,548.0 L1157.3,550.9 L1157.4,553.9 L1155.6,557.1 L1157.6,559.9 L1157.0,563.0 L1160.4,562.8 L1162.7,565.8 L1166.3,565.1 L1168.7,567.8 L1172.0,568.0 L1174.3,570.7 L1176.6,573.4 L1179.0,576.1 L1182.3,577.8 L1185.0,580.0 L1188.7,579.7 L1191.7,576.8 L1195.7,577.7 L1199.0,576.0 L1202.0,577.8 L1204.7,580.1 L1208.5,580.5 L1210.7,583.8 L1214.0,585.0 L1213.9,588.4 L1216.0,591.0 L1219.4,590.2 L1222.7,591.2 L1226.0,592.0 L1228.6,593.8 L1230.9,596.1 L1234.0,597.0 L1236.6,594.1 L1239.5,591.7 L1243.0,590.0 L1246.3,589.9 L1249.5,591.3 L1252.6,592.2 L1256.0,592.0 L1256.6,595.3 L1257.0,598.6 L1257.3,602.0 L1257.7,605.3 L1257.9,608.6 L1258.0,612.0 L1261.0,613.8 L1262.3,617.0 L1263.6,620.3 L1266.8,621.9 L1268.3,624.9 L1271.0,627.0 L1270.8,630.6 L1268.5,633.5 L1268.0,637.0 L1264.8,636.3 L1261.5,636.5 L1258.2,637.0 L1255.0,637.0 L1254.4,640.0 L1253.3,642.9 L1253.0,646.0 L1254.5,649.2 L1258.2,650.4 L1260.5,652.8 L1262.0,656.0 L1265.4,657.1 L1268.8,658.1 L1272.5,657.5 L1276.0,658.0"/><path d="M1276.0,668.0 L1273.1,669.5 L1269.8,670.1 L1267.0,672.0 L1267.4,675.5 L1266.8,678.9 L1266.6,682.3 L1265.2,685.6 L1265.0,689.0 L1262.1,690.2 L1259.2,691.2 L1255.9,690.8 L1253.0,692.0 L1251.3,695.3 L1252.5,699.1 L1251.0,702.4 L1251.0,706.0 L1254.1,706.0 L1257.2,707.4 L1260.4,707.0 L1263.5,706.4 L1266.7,706.5 L1269.8,706.3 L1272.9,707.7 L1276.0,708.0"/><path d="M1276.0,728.0 L1272.4,729.6 L1269.0,731.5 L1265.0,732.0 L1264.6,735.1 L1263.9,738.1 L1262.1,740.8 L1262.0,744.0 L1258.5,744.2 L1255.7,741.3 L1252.1,741.9 L1248.9,740.9 L1245.6,740.5 L1242.5,738.9 L1239.0,739.0 L1236.6,742.0 L1235.5,745.6 L1234.0,749.0 L1233.3,752.0 L1231.9,754.9 L1230.9,757.8 L1231.0,761.0 L1229.0,765.0 L1231.0,767.4 L1232.0,770.3 L1233.3,773.2 L1236.0,775.0 L1239.0,774.9 L1242.0,774.3 L1245.0,774.3 L1248.0,775.0 L1244.9,775.2 L1241.9,776.1 L1238.7,776.1 L1236.0,778.0 L1233.1,779.6 L1232.0,783.0 L1229.8,785.3 L1227.0,787.0 L1226.3,790.7 L1225.3,794.3 L1222.7,797.3 L1222.0,801.0 L1218.6,800.9 L1215.4,801.7 L1212.7,804.1 L1209.1,803.4 L1206.3,805.6 L1203.0,806.0 L1201.5,808.8 L1199.2,811.0 L1198.0,814.0"/><path d="M948.0,657.0 L950.0,661.0 L953.2,661.0 L956.1,662.0 L958.3,664.8 L961.6,664.5 L964.4,665.6 L967.1,667.2 L970.0,668.0 L973.2,668.1 L976.2,666.1 L979.5,666.6 L982.6,666.5 L985.8,666.3 L989.0,666.0 L992.5,668.5 L995.0,672.0 L994.3,675.2 L992.8,678.3 L993.8,681.8 L993.0,685.0 L993.9,688.0 L995.0,691.0 L998.1,693.4 L1000.1,696.6 L1002.0,700.0 L1000.4,702.6 L1000.4,705.9 L997.3,707.8 L997.0,711.0 L993.8,712.2 L992.7,715.8 L988.8,716.1 L987.0,719.0 L983.9,718.0 L981.3,715.7 L978.0,715.0 L976.0,718.4 L975.8,722.5 L974.0,726.0 L971.2,723.9 L968.2,722.3 L965.0,721.0 L962.0,722.7 L960.4,726.0 L957.1,727.3 L955.0,730.0 L953.3,732.9 L953.4,736.1 L953.2,739.3 L953.8,742.6 L952.2,745.6 L952.0,748.7 L950.6,751.7 L950.1,754.8 L950.0,758.0 L952.6,760.6 L956.1,762.4 L958.0,765.8 L961.0,768.0 L963.8,766.3 L965.7,763.3 L969.4,762.8 L971.6,760.3 L974.0,758.0 L977.6,757.8 L980.5,760.7 L984.4,759.5 L987.7,760.8 L991.0,762.0 L992.8,764.6 L995.2,766.6 L997.5,768.7 L999.5,771.1 L1002.0,773.0 L1002.1,776.0 L1002.5,779.0 L1002.8,782.0 L1002.0,785.0 L1005.6,785.8 L1007.7,789.1 L1010.7,791.0 L1013.9,792.3 L1017.0,794.0 L1015.1,796.6 L1014.8,799.9 L1013.7,802.8 L1012.1,805.6 L1009.7,807.9 L1010.4,811.6 L1008.0,814.0"/></g><g font-family="Liberation Sans, sans-serif" font-size="11.5" fill="#505050" text-anchor="middle" stroke="#fff" stroke-width="2.5" paint-order="stroke" stroke-linejoin="round"><text x="31" y="17.8">兴旺官村</text><text x="194" y="8.8">尚家庄村</text><text x="443" y="13.8">仉东村</text><text x="521" y="114.8">高家庄子村</text><text x="598" y="97.8">后王家庄子村</text><text x="711" y="30.8">曲范村</text><text x="793" y="55.8">潍北农场四分场</text><text x="685" y="113.8">西北魏村</text><text x="773" y="137.8">大张家埠村</text><text x="924" y="84.8">营子埠</text><text x="936" y="116.8">陶埠村</text><text x="1046" y="83.8">张家辛庄村</text><text x="1151" y="85.8">三义村</text><text x="1213" y="143.8">仓街村</text><text x="1266" y="58.8">卜庄</text><text x="522" y="176.8">后沟村</text><text x="417" y="226.8">颜家村</text><text x="510" y="262.8">杨家庄</text><text x="686" y="184.8">董家杨孟村</text><text x="758" y="194.8">陈家院村</text><text x="911" y="177.8">南裴村</text><text x="1051" y="197.8">东大营村</text><text x="1184" y="191.8">董家村</text><text x="1149" y="256.8">宋庄东村</text><text x="1160" y="344.8">后柳杭村</text><text x="1207" y="419.8">佟家营子村</text><text x="1266" y="323.8">前</text><text x="1273" y="431.8">姜</text><text x="414" y="325.8">牟家</text><text x="514" y="536.8">古城村</text><text x="519" y="503.8">大</text><text x="1204" y="593.8">牛脊埠村</text><text x="1266" y="598.8">万和</text><text x="1214" y="644.8">老东村</text><text x="1108" y="494.8">村</text><text x="1111" y="580.8">村</text><text x="1104" y="668.8">北辛村</text><text x="1073" y="750.8">石头崖村</text><text x="1170" y="808.8">刘家沟村</text><text x="1069" y="815.8">小宿戈村</text><text x="1019" y="685.8">新村</text><text x="944" y="704.8">担山二村</text><text x="922" y="733.8">下洼村</text><text x="837" y="813.8">管家埠村</text><text x="544" y="715.8">孟家宅科村</text><text x="518" y="737.8">董孟村</text><text x="432" y="743.8">黄家庄子村</text><text x="545" y="792.8">栾家庄村</text><text x="799" y="638.8">西石马坟庄村</text><text x="702" y="633.8">丰台村</text><text x="910" y="647.8">道</text><text x="13" y="94.8">文</text><text x="14" y="126.8">西</text><text x="14" y="181.8">道</text><text x="3" y="296.8">村</text><text x="7" y="405.8">羊村</text><text x="7" y="461.8">东</text><text x="2" y="549.8">村</text><text x="8" y="706.8">花</text><text x="8" y="739.8">沟村</text><text x="8" y="803.8">家沟</text></g><text x="510" y="32" transform="rotate(-45 510 28)" font-family="Liberation Sans, sans-serif" font-size="11" fill="#8a6ee0" text-anchor="middle" stroke="#fff" stroke-width="2" paint-order="stroke">潍日高速</text><text x="450" y="139" transform="rotate(90 450 135)" font-family="Liberation Sans, sans-serif" font-size="11" fill="#8a6ee0" text-anchor="middle" stroke="#fff" stroke-width="2" paint-order="stroke">潍日高速</text><text x="577" y="629" transform="rotate(42 577 625)" font-family="Liberation Sans, sans-serif" font-size="11" fill="#8a6ee0" text-anchor="middle" stroke="#fff" stroke-width="2" paint-order="stroke">潍日高速</text><text x="1214" y="491" transform="rotate(31 1214 487)" font-family="Liberation Sans, sans-serif" font-size="11" fill="#8a6ee0" text-anchor="middle" stroke="#fff" stroke-width="2" paint-order="stroke">青银高速</text><text x="708" y="812" transform="rotate(80 708 808)" font-family="Liberation Sans, sans-serif" font-size="11" fill="#8a6ee0" text-anchor="middle" stroke="#fff" stroke-width="2" paint-order="stroke">潍日高速</text><rect x="390.5" y="276" width="33" height="10" rx="2.5" fill="#a47ef0" stroke="#8d6ae0" stroke-width="0.8"/><text x="407" y="284.5" font-family="Liberation Sans, sans-serif" font-size="9" fill="#fff" text-anchor="middle" textLength="27" lengthAdjust="spacingAndGlyphs">G1815</text><rect x="403.5" y="497" width="33" height="10" rx="2.5" fill="#a47ef0" stroke="#8d6ae0" stroke-width="0.8"/><text x="420" y="505.5" font-family="Liberation Sans, sans-serif" font-size="9" fill="#fff" text-anchor="middle" textLength="27" lengthAdjust="spacingAndGlyphs">G1815</text><rect x="427.5" y="514" width="33" height="10" rx="2.5" fill="#a47ef0" stroke="#8d6ae0" stroke-width="0.8"/><text x="444" y="522.5" font-family="Liberation Sans, sans-serif" font-size="9" fill="#fff" text-anchor="middle" textLength="27" lengthAdjust="spacingAndGlyphs">G1815</text><rect x="452.0" y="623" width="22" height="10" rx="2.5" fill="#a47ef0" stroke="#8d6ae0" stroke-width="0.8"/><text x="463" y="631.5" font-family="Liberation Sans, sans-serif" font-size="9" fill="#fff" text-anchor="middle" textLength="16" lengthAdjust="spacingAndGlyphs">S6</text><rect x="625.5" y="685" width="33" height="10" rx="2.5" fill="#a47ef0" stroke="#8d6ae0" stroke-width="0.8"/><text x="642" y="693.5" font-family="Liberation Sans, sans-serif" font-size="9" fill="#fff" text-anchor="middle" textLength="27" lengthAdjust="spacingAndGlyphs">G1815</text><rect x="663.5" y="727" width="33" height="10" rx="2.5" fill="#a47ef0" stroke="#8d6ae0" stroke-width="0.8"/><text x="680" y="735.5" font-family="Liberation Sans, sans-serif" font-size="9" fill="#fff" text-anchor="middle" textLength="27" lengthAdjust="spacingAndGlyphs">G1815</text><rect x="1155.0" y="517" width="22" height="10" rx="2.5" fill="#a47ef0" stroke="#8d6ae0" stroke-width="0.8"/><text x="1166" y="525.5" font-family="Liberation Sans, sans-serif" font-size="9" fill="#fff" text-anchor="middle" textLength="16" lengthAdjust="spacingAndGlyphs">S6</text><rect x="1250.0" y="525" width="22" height="10" rx="2.5" fill="#a47ef0" stroke="#8d6ae0" stroke-width="0.8"/><text x="1261" y="533.5" font-family="Liberation Sans, sans-serif" font-size="9" fill="#fff" text-anchor="middle" textLength="16" lengthAdjust="spacingAndGlyphs">S6</text><rect x="1019.0" y="378" width="22" height="10" rx="2.5" fill="#a47ef0" stroke="#8d6ae0" stroke-width="0.8"/><text x="1030" y="386.5" font-family="Liberation Sans, sans-serif" font-size="9" fill="#fff" text-anchor="middle" textLength="16" lengthAdjust="spacingAndGlyphs">20</text><rect x="1023" y="125.5" width="40" height="13" rx="3" fill="#b0733e"/><text x="1043" y="136.5" font-family="Liberation Sans, sans-serif" font-size="11.5" font-weight="bold" fill="#fff" text-anchor="middle">昌邑市</text><rect x="479" y="316.5" width="40" height="13" rx="3" fill="#b0733e"/><text x="499" y="327.5" font-family="Liberation Sans, sans-serif" font-size="11.5" font-weight="bold" fill="#fff" text-anchor="middle">潍城区</text><rect x="762" y="678.5" width="40" height="13" rx="3" fill="#b0733e"/><text x="782" y="689.5" font-family="Liberation Sans, sans-serif" font-size="11.5" font-weight="bold" fill="#fff" text-anchor="middle">安丘市</text><polygon points="751,742 747,750 755,750" fill="#2d7a3a"/><text x="783" y="751" font-family="Liberation Sans, sans-serif" font-size="11" fill="#4a6a4a" text-anchor="middle" stroke="#fff" stroke-width="2.5" paint-order="stroke">人民公园</text><path d="M1260,205 L1276,212 M1261,215 L1274,214 M1253,224 C1248,240 1246,260 1246,279 C1247,300 1252,310 1260,311 L1273,324" fill="none" stroke="#e83535" stroke-width="2.4" stroke-dasharray="8 5"/><defs><clipPath id="pc"><path d="M525.0,222.0 L941.0,222.0 L939.3,225.2 L937.2,228.3 L934.5,230.9 L933.7,234.7 L931.8,237.8 L930.0,241.0 L931.3,244.6 L933.0,248.0 L936.8,247.9 L940.3,249.4 L944.0,250.0 L946.8,252.9 L949.5,255.9 L953.0,258.0 L957.5,259.1 L961.2,261.5 L965.0,264.0 L968.5,265.7 L970.0,269.6 L972.9,271.9 L976.0,274.0 L980.0,272.8 L984.0,275.3 L988.0,274.0 L991.3,271.4 L993.0,267.6 L995.2,264.2 L996.6,260.2 L998.6,256.6 L1002.0,254.0 L1005.0,252.1 L1007.4,249.0 L1010.6,247.3 L1013.6,245.4 L1017.0,244.0 L1020.1,240.9 L1024.3,239.9 L1028.0,238.0 L1029.4,234.7 L1031.8,231.9 L1032.5,228.3 L1034.0,225.0 L1038.1,224.4 L1042.0,223.0 L1046.0,222.0 L1050.0,222.8 L1054.0,222.7 L1058.1,222.6 L1061.9,224.9 L1066.0,224.0 L1068.9,227.1 L1072.6,228.8 L1076.2,230.5 L1080.0,232.0 L1082.4,234.7 L1084.6,237.6 L1086.5,240.7 L1088.9,243.4 L1089.4,247.4 L1092.0,250.0 L1093.4,253.3 L1093.6,257.1 L1095.9,260.1 L1095.7,264.0 L1098.0,267.0 L1097.1,270.8 L1099.3,274.7 L1098.8,278.5 L1096.9,282.3 L1098.1,286.2 L1098.0,290.0 L1096.2,293.8 L1097.1,298.0 L1097.3,302.2 L1095.3,306.0 L1095.0,310.0 L1093.7,313.9 L1094.4,318.1 L1094.3,322.2 L1093.0,326.1 L1092.0,330.0 L1089.0,332.3 L1087.4,335.6 L1086.0,339.0 L1082.4,341.0 L1078.5,341.6 L1074.8,343.0 L1071.0,344.1 L1066.6,343.3 L1063.0,345.0 L1060.0,347.5 L1056.1,348.5 L1052.9,350.5 L1049.8,352.9 L1046.0,354.0 L1043.0,356.4 L1041.7,360.3 L1038.2,362.3 L1036.7,366.0 L1033.7,368.3 L1031.0,371.0 L1029.4,374.8 L1027.1,378.1 L1023.4,380.5 L1021.5,384.2 L1020.0,388.0 L1017.9,390.9 L1014.3,392.3 L1013.0,396.0 L1010.2,398.2 L1006.8,399.8 L1005.0,403.0 L1003.3,406.5 L1003.3,410.7 L1001.0,414.0 L1003.5,417.9 L1008.2,419.4 L1011.0,423.0 L1014.2,424.7 L1016.2,428.0 L1019.7,429.3 L1022.5,431.4 L1025.0,434.0 L1028.6,435.1 L1031.6,437.1 L1034.0,440.0 L1104.0,440.0 L1104.0,657.0 L951.0,657.0 L950.2,653.4 L948.4,650.2 L948.3,646.4 L947.0,643.0 L943.1,644.0 L939.0,644.5 L935.0,645.0 L931.2,644.1 L927.5,645.5 L923.7,645.6 L920.0,646.0 L917.9,643.0 L914.0,642.1 L911.2,639.9 L909.0,637.0 L905.0,633.6 L900.0,632.0 L899.1,628.0 L896.1,624.9 L895.0,621.0 L892.3,617.6 L891.5,613.2 L890.0,609.2 L887.0,606.0 L883.0,606.8 L879.0,604.8 L875.0,605.0 L871.0,606.0 L869.9,602.2 L868.1,598.7 L867.0,595.0 L862.8,592.8 L860.0,589.0 L855.9,590.7 L851.4,588.8 L847.3,591.2 L843.0,591.0 L841.7,586.8 L838.9,583.3 L838.5,578.7 L836.0,575.0 L832.2,575.3 L828.6,576.5 L824.9,577.3 L821.0,577.0 L816.8,574.0 L812.0,572.0 L807.9,574.1 L803.5,574.7 L799.0,575.0 L795.7,577.1 L792.0,578.7 L789.1,581.5 L786.0,584.0 L782.0,584.4 L778.1,582.5 L774.0,584.2 L769.9,584.5 L766.0,583.0 L762.7,586.2 L758.7,588.4 L755.0,591.0 L753.4,594.4 L750.8,596.8 L748.1,599.0 L745.3,601.3 L743.0,604.0 L740.7,607.7 L737.3,610.3 L734.0,613.0 L729.9,610.1 L725.0,609.0 L720.2,606.8 L715.0,607.0 L710.9,607.6 L706.9,608.5 L703.0,610.0 L699.9,611.8 L697.5,614.8 L694.7,617.0 L691.7,619.0 L688.0,620.0 L685.1,623.0 L684.0,627.0 L684.2,631.1 L684.1,635.2 L686.0,639.0 L682.7,642.6 L678.0,644.0 L675.7,647.3 L674.0,651.0 L670.0,649.7 L666.2,647.8 L662.0,647.0 L659.1,643.2 L657.0,639.0 L654.4,635.9 L649.9,635.9 L647.3,632.9 L644.0,631.0 L642.0,627.8 L639.8,624.8 L637.0,622.3 L634.0,620.0 L632.7,616.5 L631.2,613.1 L629.7,609.7 L627.0,607.0 L626.6,602.8 L627.5,598.5 L628.0,594.2 L627.0,590.0 L628.3,586.1 L627.5,582.0 L628.0,578.0 L628.2,574.4 L627.0,571.0 L623.3,568.8 L619.1,568.2 L615.0,567.0 L610.0,563.0 L608.0,557.0 L604.2,557.2 L600.5,558.3 L596.7,558.3 L593.0,559.0 L588.8,558.2 L584.4,559.1 L580.3,557.1 L576.0,557.0 L572.3,556.2 L569.0,558.0 L566.0,553.0 L571.0,551.0 L570.6,546.7 L568.9,542.8 L567.0,539.0 L564.3,536.7 L562.0,534.0 L557.9,531.8 L553.4,530.5 L549.0,529.0 L547.9,525.5 L547.0,522.0 L547.9,518.5 L547.0,515.0 L543.3,516.1 L539.7,514.3 L536.0,516.2 L532.3,514.7 L528.7,515.0 L525.0,515.0Z"/></clipPath></defs><path d="M525.0,222.0 L941.0,222.0 L939.3,225.2 L937.2,228.3 L934.5,230.9 L933.7,234.7 L931.8,237.8 L930.0,241.0 L931.3,244.6 L933.0,248.0 L936.8,247.9 L940.3,249.4 L944.0,250.0 L946.8,252.9 L949.5,255.9 L953.0,258.0 L957.5,259.1 L961.2,261.5 L965.0,264.0 L968.5,265.7 L970.0,269.6 L972.9,271.9 L976.0,274.0 L980.0,272.8 L984.0,275.3 L988.0,274.0 L991.3,271.4 L993.0,267.6 L995.2,264.2 L996.6,260.2 L998.6,256.6 L1002.0,254.0 L1005.0,252.1 L1007.4,249.0 L1010.6,247.3 L1013.6,245.4 L1017.0,244.0 L1020.1,240.9 L1024.3,239.9 L1028.0,238.0 L1029.4,234.7 L1031.8,231.9 L1032.5,228.3 L1034.0,225.0 L1038.1,224.4 L1042.0,223.0 L1046.0,222.0 L1050.0,222.8 L1054.0,222.7 L1058.1,222.6 L1061.9,224.9 L1066.0,224.0 L1068.9,227.1 L1072.6,228.8 L1076.2,230.5 L1080.0,232.0 L1082.4,234.7 L1084.6,237.6 L1086.5,240.7 L1088.9,243.4 L1089.4,247.4 L1092.0,250.0 L1093.4,253.3 L1093.6,257.1 L1095.9,260.1 L1095.7,264.0 L1098.0,267.0 L1097.1,270.8 L1099.3,274.7 L1098.8,278.5 L1096.9,282.3 L1098.1,286.2 L1098.0,290.0 L1096.2,293.8 L1097.1,298.0 L1097.3,302.2 L1095.3,306.0 L1095.0,310.0 L1093.7,313.9 L1094.4,318.1 L1094.3,322.2 L1093.0,326.1 L1092.0,330.0 L1089.0,332.3 L1087.4,335.6 L1086.0,339.0 L1082.4,341.0 L1078.5,341.6 L1074.8,343.0 L1071.0,344.1 L1066.6,343.3 L1063.0,345.0 L1060.0,347.5 L1056.1,348.5 L1052.9,350.5 L1049.8,352.9 L1046.0,354.0 L1043.0,356.4 L1041.7,360.3 L1038.2,362.3 L1036.7,366.0 L1033.7,368.3 L1031.0,371.0 L1029.4,374.8 L1027.1,378.1 L1023.4,380.5 L1021.5,384.2 L1020.0,388.0 L1017.9,390.9 L1014.3,392.3 L1013.0,396.0 L1010.2,398.2 L1006.8,399.8 L1005.0,403.0 L1003.3,406.5 L1003.3,410.7 L1001.0,414.0 L1003.5,417.9 L1008.2,419.4 L1011.0,423.0 L1014.2,424.7 L1016.2,428.0 L1019.7,429.3 L1022.5,431.4 L1025.0,434.0 L1028.6,435.1 L1031.6,437.1 L1034.0,440.0 L1104.0,440.0 L1104.0,657.0 L951.0,657.0 L950.2,653.4 L948.4,650.2 L948.3,646.4 L947.0,643.0 L943.1,644.0 L939.0,644.5 L935.0,645.0 L931.2,644.1 L927.5,645.5 L923.7,645.6 L920.0,646.0 L917.9,643.0 L914.0,642.1 L911.2,639.9 L909.0,637.0 L905.0,633.6 L900.0,632.0 L899.1,628.0 L896.1,624.9 L895.0,621.0 L892.3,617.6 L891.5,613.2 L890.0,609.2 L887.0,606.0 L883.0,606.8 L879.0,604.8 L875.0,605.0 L871.0,606.0 L869.9,602.2 L868.1,598.7 L867.0,595.0 L862.8,592.8 L860.0,589.0 L855.9,590.7 L851.4,588.8 L847.3,591.2 L843.0,591.0 L841.7,586.8 L838.9,583.3 L838.5,578.7 L836.0,575.0 L832.2,575.3 L828.6,576.5 L824.9,577.3 L821.0,577.0 L816.8,574.0 L812.0,572.0 L807.9,574.1 L803.5,574.7 L799.0,575.0 L795.7,577.1 L792.0,578.7 L789.1,581.5 L786.0,584.0 L782.0,584.4 L778.1,582.5 L774.0,584.2 L769.9,584.5 L766.0,583.0 L762.7,586.2 L758.7,588.4 L755.0,591.0 L753.4,594.4 L750.8,596.8 L748.1,599.0 L745.3,601.3 L743.0,604.0 L740.7,607.7 L737.3,610.3 L734.0,613.0 L729.9,610.1 L725.0,609.0 L720.2,606.8 L715.0,607.0 L710.9,607.6 L706.9,608.5 L703.0,610.0 L699.9,611.8 L697.5,614.8 L694.7,617.0 L691.7,619.0 L688.0,620.0 L685.1,623.0 L684.0,627.0 L684.2,631.1 L684.1,635.2 L686.0,639.0 L682.7,642.6 L678.0,644.0 L675.7,647.3 L674.0,651.0 L670.0,649.7 L666.2,647.8 L662.0,647.0 L659.1,643.2 L657.0,639.0 L654.4,635.9 L649.9,635.9 L647.3,632.9 L644.0,631.0 L642.0,627.8 L639.8,624.8 L637.0,622.3 L634.0,620.0 L632.7,616.5 L631.2,613.1 L629.7,609.7 L627.0,607.0 L626.6,602.8 L627.5,598.5 L628.0,594.2 L627.0,590.0 L628.3,586.1 L627.5,582.0 L628.0,578.0 L628.2,574.4 L627.0,571.0 L623.3,568.8 L619.1,568.2 L615.0,567.0 L610.0,563.0 L608.0,557.0 L604.2,557.2 L600.5,558.3 L596.7,558.3 L593.0,559.0 L588.8,558.2 L584.4,559.1 L580.3,557.1 L576.0,557.0 L572.3,556.2 L569.0,558.0 L566.0,553.0 L571.0,551.0 L570.6,546.7 L568.9,542.8 L567.0,539.0 L564.3,536.7 L562.0,534.0 L557.9,531.8 L553.4,530.5 L549.0,529.0 L547.9,525.5 L547.0,522.0 L547.9,518.5 L547.0,515.0 L543.3,516.1 L539.7,514.3 L536.0,516.2 L532.3,514.7 L528.7,515.0 L525.0,515.0Z" fill="#92d050"/><g clip-path="url(#pc)"><g fill="#00b050" stroke="#000" stroke-width="1.1" stroke-linejoin="round"><path d="M790.0,336.0 C790.3,336.1 792.1,337.0 793.0,337.0 C793.9,337.0 797.5,336.4 798.7,336.3 C799.8,336.1 803.2,335.5 804.3,335.3 C805.4,335.2 809.0,335.4 810.0,335.0 C811.0,334.6 813.8,332.4 814.7,331.7 C815.5,331.0 817.9,328.5 818.8,327.7 C819.7,327.0 822.5,325.0 823.4,324.4 C824.3,323.7 827.2,322.0 828.0,321.0 C828.8,320.0 830.8,316.0 831.4,314.7 C832.0,313.4 833.4,309.1 834.0,308.0 C834.6,306.9 836.7,304.6 837.4,303.8 C838.1,302.9 840.4,300.6 841.2,299.9 C842.0,299.1 844.2,296.7 845.0,296.0 C845.8,295.3 848.7,293.7 849.7,293.2 C850.7,292.7 853.8,291.7 854.8,291.2 C855.8,290.7 858.4,288.6 859.3,288.0 C860.3,287.5 863.5,286.5 864.4,286.0 C865.4,285.5 868.1,283.6 869.0,283.0 C869.9,282.4 872.3,280.2 873.2,279.6 C874.1,279.0 877.1,277.5 878.0,276.9 C878.9,276.3 881.4,274.3 882.3,273.7 C883.2,273.1 886.0,271.4 887.0,271.0 C888.0,270.6 890.9,270.1 891.9,270.0 C893.0,269.8 896.0,269.9 897.0,269.8 C898.0,269.7 900.9,269.0 902.0,269.0 C903.1,269.0 906.6,269.6 907.7,269.7 C908.9,269.8 912.3,269.9 913.5,270.0 C914.7,270.0 918.1,269.9 919.3,270.0 C920.4,270.1 923.9,271.1 925.0,271.0 C926.1,270.9 929.5,269.7 930.6,269.4 C931.7,269.2 935.2,268.5 936.3,268.2 C937.4,267.9 940.7,266.6 941.8,266.3 C942.9,265.9 946.4,265.3 947.5,265.0 C948.6,264.7 951.9,262.9 953.0,263.0 C954.1,263.1 957.2,265.4 958.2,266.1 C959.2,266.7 962.2,268.6 963.2,269.3 C964.2,270.0 967.0,272.6 968.0,273.0 C969.0,273.4 972.0,273.6 973.0,273.7 C974.0,273.7 977.0,273.4 978.0,273.4 C979.0,273.4 982.0,273.5 983.0,273.5 C984.0,273.6 986.9,274.3 988.0,274.0 C989.1,273.7 992.7,271.4 993.9,270.8 C995.1,270.2 999.9,268.1 1000.0,268.0 C1000.1,267.9 996.1,269.4 995.1,269.7 C994.1,270.0 991.0,270.6 990.0,271.0 C989.0,271.4 986.4,272.8 985.5,273.2 C984.6,273.6 981.8,275.0 980.9,275.3 C979.9,275.6 976.9,276.1 975.9,276.5 C975.0,276.8 972.5,278.7 971.6,279.1 C970.7,279.5 967.8,280.4 966.8,280.8 C965.9,281.1 963.1,282.2 962.2,282.6 C961.2,283.0 958.6,284.5 957.7,284.9 C956.8,285.3 954.0,286.5 953.0,286.8 C952.1,287.2 949.1,288.0 948.2,288.3 C947.3,288.7 944.6,290.1 943.7,290.6 C942.8,291.0 940.0,292.1 939.0,292.4 C938.1,292.8 935.1,293.5 934.2,293.8 C933.2,294.2 930.6,295.8 929.7,296.2 C928.8,296.6 926.0,297.6 925.0,298.0 C924.0,298.4 921.1,299.4 920.2,299.8 C919.2,300.2 916.4,301.5 915.5,301.8 C914.5,302.2 911.5,302.9 910.5,303.2 C909.5,303.5 906.7,304.7 905.7,305.1 C904.7,305.4 901.7,306.2 900.8,306.6 C899.8,307.0 897.1,308.5 896.2,308.9 C895.2,309.3 892.3,310.3 891.3,310.7 C890.4,311.1 887.5,312.3 886.6,312.6 C885.6,313.0 882.6,313.8 881.6,314.1 C880.7,314.5 877.9,315.9 876.9,316.2 C875.9,316.6 872.8,317.1 871.9,317.4 C870.9,317.7 868.1,319.1 867.2,319.5 C866.2,319.8 863.2,320.7 862.2,321.0 C861.3,321.3 858.3,322.3 857.4,322.6 C856.4,323.0 853.5,324.1 852.6,324.5 C851.6,324.9 848.8,326.1 847.8,326.5 C846.9,327.0 844.2,328.4 843.2,328.8 C842.2,329.2 839.2,329.9 838.2,330.2 C837.3,330.5 834.2,331.3 833.3,331.6 C832.3,332.0 829.6,333.5 828.6,333.9 C827.7,334.2 824.5,334.7 823.6,335.1 C822.6,335.5 820.0,337.3 819.1,337.7 C818.2,338.2 815.2,339.2 814.3,339.5 C813.3,339.9 810.4,341.0 809.4,341.3 C808.5,341.6 805.3,342.1 804.3,342.3 C803.3,342.6 800.4,343.6 799.5,344.0 C798.5,344.4 795.8,345.8 794.8,346.2 C793.9,346.6 790.5,348.4 790.0,348.0 C789.5,347.6 789.9,343.2 789.9,342.0 C789.9,340.8 790.0,336.6 790.0,336.0Z"/><path d="M1002.0,255.0 C1002.4,254.8 1005.2,252.7 1006.0,253.0 C1006.8,253.3 1008.8,257.1 1009.5,258.1 C1010.2,259.1 1012.2,262.3 1013.0,263.3 C1013.7,264.3 1017.3,267.2 1017.0,268.0 C1016.7,268.8 1011.4,270.8 1010.0,271.0 C1008.6,271.2 1003.7,270.6 1003.0,270.0 C1002.3,269.4 1003.2,266.0 1003.2,265.0 C1003.1,264.0 1002.7,261.0 1002.5,260.0 C1002.4,259.0 1002.1,255.5 1002.0,255.0Z"/><path d="M1005.0,309.0 C1005.8,308.6 1011.9,304.7 1013.0,305.0 C1014.1,305.3 1015.9,310.7 1016.0,312.0 C1016.1,313.3 1014.6,316.9 1014.2,318.1 C1013.8,319.3 1012.8,323.2 1012.0,324.0 C1011.2,324.8 1006.7,326.4 1006.0,326.0 C1005.3,325.6 1005.4,321.5 1005.3,320.4 C1005.1,319.2 1004.9,315.8 1004.9,314.7 C1004.8,313.6 1005.0,309.6 1005.0,309.0Z"/><path d="M928.0,322.0 C928.5,321.8 931.9,320.4 932.9,320.2 C933.9,319.9 937.1,319.6 938.1,319.3 C939.1,319.1 942.1,318.2 943.1,317.8 C944.1,317.5 946.9,316.0 947.9,315.7 C948.9,315.4 952.1,315.1 953.1,314.9 C954.1,314.6 957.0,313.2 958.0,313.0 C959.0,312.8 962.2,313.0 963.2,313.1 C964.3,313.3 967.3,314.2 968.4,314.3 C969.4,314.3 972.6,313.7 973.6,313.8 C974.7,313.8 977.8,314.6 978.8,314.7 C979.8,314.8 983.5,314.4 984.0,315.0 C984.5,315.6 984.2,319.4 984.2,320.5 C984.2,321.6 984.5,325.2 984.0,326.0 C983.5,326.8 980.3,327.8 979.4,328.1 C978.4,328.4 975.3,328.9 974.4,329.2 C973.4,329.4 970.6,330.7 969.7,331.1 C968.7,331.4 965.5,332.3 965.0,333.0 C964.5,333.7 964.5,337.1 964.2,338.0 C964.0,339.0 963.0,342.0 962.8,343.0 C962.5,343.9 961.7,347.0 962.0,348.0 C962.3,349.0 965.3,351.7 966.1,352.7 C966.8,353.7 968.8,356.9 969.5,357.9 C970.2,358.9 973.0,362.2 973.0,363.0 C973.0,363.8 969.8,365.6 969.0,366.4 C968.3,367.1 966.4,369.6 965.7,370.4 C965.0,371.1 962.2,373.1 962.0,374.0 C961.8,374.9 963.2,378.4 963.5,379.5 C963.8,380.6 964.5,383.9 965.0,385.0 C965.5,386.1 967.4,389.4 968.0,390.5 C968.6,391.6 970.8,394.8 971.0,396.0 C971.2,397.2 970.0,401.2 969.8,402.5 C969.6,403.8 969.2,407.8 969.0,409.0 C968.8,410.2 968.4,413.0 968.2,414.0 C968.1,415.0 967.3,417.9 967.2,418.9 C967.1,419.9 966.7,422.9 967.0,424.0 C967.3,425.1 969.6,429.1 970.2,430.4 C970.8,431.7 973.0,435.9 973.0,437.0 C973.0,438.1 970.4,440.5 969.8,441.4 C969.2,442.3 967.4,445.0 967.0,446.0 C966.6,447.0 965.9,450.4 965.6,451.5 C965.3,452.6 964.2,455.9 964.0,457.0 C963.8,458.1 963.7,461.0 963.6,462.0 C963.5,463.0 963.0,466.0 962.8,467.0 C962.6,468.0 962.5,471.1 962.0,472.0 C961.5,472.9 958.5,474.9 957.6,475.6 C956.7,476.3 954.1,478.9 953.0,479.0 C951.9,479.1 947.8,476.7 946.5,476.1 C945.2,475.5 941.4,473.4 940.0,473.0 C938.6,472.6 933.2,471.6 932.0,472.0 C930.8,472.4 929.1,476.3 928.4,477.4 C927.7,478.5 925.8,482.2 925.0,483.0 C924.2,483.8 921.2,484.7 920.3,485.2 C919.4,485.7 916.7,487.1 916.0,488.0 C915.3,488.9 914.1,492.6 913.6,493.7 C913.0,494.8 911.2,498.0 910.6,499.0 C910.0,500.1 908.1,503.3 907.6,504.4 C907.0,505.5 905.5,508.9 905.0,510.0 C904.5,511.1 903.3,514.1 902.9,515.1 C902.5,516.2 901.2,519.2 900.6,520.2 C900.1,521.2 897.9,523.8 897.4,524.8 C896.8,525.8 895.5,528.8 895.1,529.9 C894.7,530.9 893.3,534.0 893.0,535.0 C892.7,536.0 892.2,539.0 892.0,540.0 C891.9,541.0 892.0,544.1 891.8,545.1 C891.7,546.1 891.2,549.1 891.0,550.1 C890.8,551.1 889.8,554.0 889.6,555.0 C889.4,556.0 889.6,559.7 889.0,560.0 C888.4,560.3 884.3,558.9 883.2,558.5 C882.0,558.0 878.9,556.2 877.8,555.7 C876.7,555.3 873.1,554.4 872.0,554.0 C870.9,553.6 868.0,552.1 867.0,551.7 C866.0,551.2 863.1,549.7 862.1,549.3 C861.1,548.8 858.1,547.4 857.1,547.0 C856.1,546.5 852.9,545.8 852.0,545.0 C851.1,544.2 849.1,539.8 848.4,538.5 C847.7,537.2 845.7,533.2 845.0,532.0 C844.3,530.8 842.2,528.0 841.6,526.9 C841.0,525.8 839.9,522.2 839.4,521.1 C838.8,520.0 836.8,516.7 836.0,516.0 C835.2,515.3 831.9,514.6 830.9,514.1 C830.0,513.7 827.1,512.3 826.1,511.8 C825.1,511.4 821.7,510.7 821.0,510.0 C820.3,509.3 818.9,505.9 819.0,505.0 C819.1,504.1 821.7,502.0 822.3,501.2 C822.9,500.4 824.1,497.4 825.0,497.0 C825.9,496.6 829.8,497.0 831.0,496.9 C832.2,496.9 835.8,496.6 837.0,496.5 C838.2,496.5 842.0,496.7 843.0,496.0 C844.0,495.3 846.1,491.1 847.0,490.0 C847.9,488.9 851.3,486.3 852.4,485.4 C853.5,484.5 857.0,481.9 858.0,481.0 C859.0,480.1 861.5,477.3 862.4,476.4 C863.3,475.5 866.3,472.9 867.0,472.0 C867.7,471.1 869.2,468.4 869.9,467.6 C870.5,466.7 872.7,464.4 873.4,463.6 C874.0,462.7 875.9,460.0 876.0,459.0 C876.1,458.0 875.1,454.9 874.8,453.9 C874.5,452.9 873.8,449.8 873.0,449.0 C872.2,448.2 868.2,446.3 867.0,445.6 C865.8,444.9 862.0,442.8 861.0,442.0 C860.0,441.2 857.8,438.3 857.1,437.3 C856.4,436.2 854.9,432.9 854.2,431.9 C853.5,430.9 851.0,428.2 850.3,427.2 C849.5,426.2 847.4,423.1 847.0,422.0 C846.6,420.9 846.8,417.6 846.7,416.5 C846.5,415.4 845.8,412.1 845.6,411.0 C845.5,409.9 845.1,406.6 845.0,405.5 C845.0,404.4 844.6,401.1 845.0,400.0 C845.4,398.9 848.6,396.0 849.5,395.0 C850.4,394.0 852.9,390.8 854.0,390.0 C855.1,389.2 858.9,387.3 860.1,386.6 C861.3,385.9 864.8,383.5 866.0,383.0 C867.2,382.5 870.8,382.0 872.0,381.7 C873.2,381.4 876.7,380.4 877.9,380.1 C879.1,379.8 882.8,379.2 884.0,379.0 C885.2,378.8 888.4,378.1 889.5,377.8 C890.6,377.6 893.8,376.4 894.9,376.2 C896.0,376.0 899.5,375.9 900.6,375.6 C901.7,375.4 905.1,374.5 906.0,374.0 C906.9,373.5 909.1,371.1 909.9,370.4 C910.7,369.7 913.1,367.6 913.8,366.8 C914.6,366.1 916.6,363.6 917.4,362.9 C918.1,362.1 920.3,359.8 921.0,359.0 C921.7,358.2 923.3,355.4 923.9,354.5 C924.5,353.7 926.2,350.9 926.8,350.1 C927.4,349.2 929.7,346.9 930.3,346.0 C930.9,345.1 932.1,342.1 932.7,341.2 C933.2,340.3 935.9,337.9 936.0,337.0 C936.1,336.1 934.1,332.9 933.6,331.9 C933.0,330.9 931.3,328.0 930.7,327.0 C930.2,326.0 928.3,322.5 928.0,322.0Z"/><path d="M736.0,459.0 C736.3,458.6 738.5,455.6 739.2,454.8 C739.9,454.0 742.0,451.2 743.0,451.0 C744.0,450.8 748.2,452.6 749.5,453.0 C750.8,453.4 754.7,454.6 756.0,455.0 C757.3,455.4 761.2,456.5 762.5,456.9 C763.8,457.3 768.8,458.4 769.0,459.0 C769.2,459.6 765.4,461.8 764.5,462.5 C763.7,463.3 761.4,465.8 760.5,466.5 C759.7,467.3 755.9,469.8 756.0,470.0 C756.1,470.2 760.6,469.1 761.7,468.8 C762.8,468.5 766.2,467.4 767.3,467.1 C768.4,466.8 772.3,466.6 773.0,466.0 C773.7,465.4 773.7,462.0 773.8,461.0 C773.9,460.0 774.3,457.0 774.4,456.0 C774.5,455.0 774.3,452.0 774.3,451.0 C774.4,450.0 774.2,446.6 775.0,446.0 C775.8,445.4 780.9,444.8 782.0,445.0 C783.1,445.2 785.0,447.7 785.8,448.3 C786.6,448.9 789.3,451.6 790.0,451.0 C790.7,450.4 792.1,443.3 793.0,442.0 C793.9,440.7 798.1,439.0 799.4,438.3 C800.7,437.6 805.0,435.8 806.0,435.0 C807.0,434.2 808.9,431.1 809.7,430.2 C810.5,429.3 812.9,425.9 814.0,426.0 C815.1,426.1 820.3,430.0 821.0,431.0 C821.7,432.0 820.7,435.0 820.7,436.0 C820.7,437.0 820.9,440.0 820.9,441.0 C821.0,442.0 821.4,445.0 821.5,446.0 C821.5,447.0 821.4,450.1 821.0,451.0 C820.6,451.9 818.2,454.6 817.5,455.5 C816.8,456.3 814.3,458.7 813.6,459.6 C812.8,460.5 810.7,463.1 810.0,464.0 C809.3,464.9 807.3,467.7 806.6,468.6 C805.9,469.4 803.6,472.0 802.9,472.8 C802.1,473.7 800.1,476.3 799.0,477.0 C797.9,477.7 793.6,479.4 792.3,480.1 C791.0,480.8 787.2,483.6 786.0,484.0 C784.8,484.4 781.1,483.9 779.9,483.7 C778.7,483.5 775.2,482.3 774.1,482.1 C772.9,481.9 769.2,481.9 768.0,481.8 C766.8,481.7 763.1,481.2 762.0,481.0 C760.9,480.8 758.0,480.1 757.1,479.7 C756.1,479.4 753.5,477.8 752.5,477.5 C751.5,477.2 748.5,476.7 747.5,476.4 C746.6,476.1 743.7,475.1 742.7,474.8 C741.8,474.4 738.6,473.9 738.0,473.0 C737.4,472.1 737.1,467.4 736.9,466.0 C736.7,464.6 736.1,459.7 736.0,459.0Z"/><path d="M711.0,517.0 C711.5,516.8 714.6,515.1 715.5,514.7 C716.4,514.3 719.3,513.3 720.2,512.9 C721.1,512.5 723.8,511.0 724.7,510.6 C725.7,510.3 728.6,509.5 729.6,509.1 C730.5,508.8 733.4,507.8 734.3,507.4 C735.2,507.0 737.9,505.6 738.8,505.1 C739.7,504.7 742.3,503.0 743.2,502.6 C744.1,502.2 746.9,501.1 748.0,501.0 C749.1,500.9 752.6,501.7 753.7,501.8 C754.9,501.9 758.3,502.3 759.5,502.4 C760.6,502.4 764.1,502.2 765.3,502.3 C766.4,502.3 770.0,502.5 771.0,503.0 C772.0,503.5 774.1,506.1 774.8,507.0 C775.5,507.8 777.5,510.5 778.2,511.3 C778.9,512.1 781.3,514.4 782.1,515.2 C782.9,515.9 785.0,518.3 786.0,519.0 C787.0,519.7 790.8,521.2 791.9,521.8 C793.1,522.3 796.7,524.1 797.9,524.6 C799.1,525.1 803.0,526.1 804.0,527.0 C805.0,527.9 807.1,533.1 808.0,534.0 C808.9,534.9 811.6,535.8 812.5,536.2 C813.5,536.6 816.3,537.7 817.2,538.1 C818.1,538.6 820.7,540.0 821.6,540.5 C822.5,541.0 825.0,542.5 826.0,543.0 C827.0,543.5 830.2,545.0 831.2,545.5 C832.3,546.0 835.5,547.3 836.6,547.9 C837.6,548.4 840.5,550.5 841.5,551.0 C842.5,551.5 845.9,552.6 847.0,553.1 C848.0,553.6 851.9,555.4 852.0,556.0 C852.1,556.6 848.6,558.1 847.7,558.6 C846.8,559.1 844.1,560.5 843.2,561.0 C842.3,561.5 839.6,562.9 838.8,563.4 C837.9,563.9 835.4,565.7 834.5,566.2 C833.6,566.6 830.6,567.3 829.6,567.7 C828.7,568.2 826.2,569.9 825.3,570.4 C824.5,570.9 822.0,572.7 821.0,573.0 C820.0,573.3 816.8,572.8 815.8,572.9 C814.7,573.0 811.7,573.9 810.6,573.9 C809.6,574.0 806.4,573.9 805.4,573.9 C804.3,574.0 801.2,574.3 800.2,574.4 C799.2,574.6 796.0,575.2 795.0,575.0 C794.0,574.8 791.4,573.0 790.6,572.4 C789.7,571.8 787.3,570.0 786.5,569.3 C785.7,568.7 783.4,566.6 782.6,566.0 C781.8,565.4 779.0,564.0 778.2,563.4 C777.3,562.9 774.9,561.0 774.1,560.4 C773.3,559.8 770.7,558.1 769.9,557.5 C769.0,556.9 766.8,554.8 765.9,554.3 C765.0,553.8 762.0,552.7 761.1,552.2 C760.3,551.6 758.1,549.4 757.3,548.8 C756.4,548.2 753.9,546.5 753.0,546.0 C752.2,545.4 749.5,543.9 748.6,543.4 C747.8,542.8 745.3,541.0 744.4,540.4 C743.6,539.8 741.2,538.0 740.3,537.4 C739.5,536.8 736.9,535.2 736.1,534.6 C735.2,534.0 732.8,532.2 731.9,531.6 C731.1,531.0 728.6,529.2 727.8,528.6 C727.0,528.0 724.4,526.4 723.5,525.8 C722.7,525.2 720.2,523.4 719.4,522.8 C718.6,522.2 716.0,520.5 715.2,519.9 C714.4,519.3 711.4,517.3 711.0,517.0Z"/><path d="M1067.0,573.0 C1067.2,572.4 1068.3,568.0 1068.6,566.7 C1068.9,565.5 1069.6,561.6 1069.8,560.4 C1070.1,559.1 1070.5,555.1 1071.0,554.0 C1071.5,552.9 1074.4,550.4 1075.2,549.6 C1076.1,548.7 1079.0,546.4 1079.8,545.5 C1080.7,544.7 1083.1,541.7 1084.0,541.0 C1084.9,540.3 1087.9,538.9 1088.9,538.3 C1089.8,537.7 1092.4,535.6 1093.3,535.0 C1094.2,534.4 1097.5,532.9 1098.0,532.0 C1098.5,531.1 1098.4,527.5 1098.7,526.4 C1098.9,525.3 1100.0,522.1 1100.2,521.0 C1100.4,519.9 1100.5,516.5 1100.6,515.4 C1100.8,514.3 1101.7,511.0 1102.0,510.0 C1102.3,509.0 1103.8,505.0 1104.0,505.0 C1104.2,505.0 1104.4,509.0 1104.4,510.0 C1104.5,511.0 1104.3,514.0 1104.3,515.0 C1104.2,516.0 1103.8,519.0 1103.7,520.0 C1103.6,521.0 1103.5,524.0 1103.6,525.0 C1103.6,526.0 1103.8,529.0 1103.8,530.0 C1103.9,531.0 1104.1,534.0 1104.1,535.0 C1104.2,536.0 1104.1,539.0 1104.1,540.0 C1104.1,541.0 1104.4,544.1 1104.0,545.0 C1103.6,545.9 1101.1,548.3 1100.4,549.2 C1099.8,550.1 1098.0,552.9 1097.3,553.7 C1096.6,554.6 1094.4,557.1 1093.7,557.9 C1093.0,558.7 1090.8,561.2 1090.0,562.0 C1089.2,562.8 1086.6,564.8 1085.9,565.5 C1085.1,566.2 1082.9,568.7 1082.1,569.4 C1081.3,570.2 1079.0,572.7 1078.0,573.0 C1077.0,573.3 1073.6,572.9 1072.5,572.9 C1071.4,572.9 1067.5,573.0 1067.0,573.0Z"/><path d="M950.0,657.0 C950.2,656.4 951.6,652.2 952.0,651.0 C952.4,649.8 953.3,646.0 954.0,645.0 C954.7,644.0 958.0,641.8 959.0,641.0 C960.0,640.2 963.4,636.8 964.0,637.0 C964.6,637.2 965.2,641.7 965.3,642.9 C965.5,644.1 965.6,647.8 965.8,649.0 C965.9,650.2 967.4,654.3 967.0,655.0 C966.6,655.7 962.5,655.5 961.3,655.7 C960.2,655.8 956.9,656.6 955.7,656.8 C954.6,656.9 950.6,657.0 950.0,657.0Z"/><path d="M1034.0,537.0 C1034.7,536.9 1040.3,535.2 1041.0,536.0 C1041.7,536.8 1041.6,544.0 1041.0,545.0 C1040.4,546.0 1035.7,546.8 1035.0,546.0 C1034.3,545.2 1034.1,537.9 1034.0,537.0Z"/><path d="M1048.0,441.0 C1048.6,441.0 1053.1,441.1 1054.3,441.2 C1055.6,441.3 1059.4,442.1 1060.6,442.1 C1061.9,442.2 1066.4,441.5 1067.0,442.0 C1067.6,442.5 1067.6,446.4 1067.0,447.0 C1066.4,447.6 1062.2,447.7 1061.0,447.7 C1059.8,447.8 1056.2,447.6 1055.0,447.6 C1053.8,447.6 1049.7,448.7 1049.0,448.0 C1048.3,447.3 1048.1,441.7 1048.0,441.0Z"/><path d="M1078.0,457.0 C1078.1,456.4 1078.7,452.5 1079.0,451.4 C1079.3,450.3 1080.0,446.7 1081.0,446.0 C1082.0,445.3 1088.3,443.6 1089.0,444.0 C1089.7,444.4 1088.2,448.5 1087.9,449.6 C1087.6,450.7 1087.0,454.3 1086.0,455.0 C1085.0,455.7 1078.8,456.8 1078.0,457.0Z"/><path d="M1089.0,484.0 C1089.1,483.5 1090.0,479.9 1090.3,478.9 C1090.6,477.9 1091.2,474.6 1092.0,474.0 C1092.8,473.4 1096.9,473.1 1098.1,472.8 C1099.3,472.5 1103.5,470.5 1104.0,471.0 C1104.5,471.5 1103.6,476.2 1103.6,477.5 C1103.6,478.8 1104.5,483.4 1104.0,484.0 C1103.5,484.6 1100.0,483.7 1099.0,483.7 C1098.0,483.7 1095.0,484.2 1094.0,484.2 C1093.0,484.2 1089.5,484.0 1089.0,484.0Z"/><path d="M1098.0,522.0 C1098.0,521.5 1098.2,517.7 1098.4,516.6 C1098.5,515.6 1099.4,512.4 1099.5,511.4 C1099.7,510.3 1099.6,506.6 1100.0,506.0 C1100.4,505.4 1103.6,504.5 1104.0,505.0 C1104.4,505.5 1103.9,509.5 1103.8,510.7 C1103.8,511.8 1103.8,515.2 1103.9,516.3 C1103.9,517.5 1104.6,521.4 1104.0,522.0 C1103.4,522.6 1098.6,522.0 1098.0,522.0Z"/><path d="M1091.0,630.0 C1091.6,629.9 1096.2,629.2 1097.5,629.0 C1098.8,628.8 1103.3,627.5 1104.0,628.0 C1104.7,628.5 1104.2,632.8 1104.2,634.0 C1104.2,635.2 1104.8,639.4 1104.0,640.0 C1103.2,640.6 1097.1,640.5 1096.0,640.0 C1094.9,639.5 1093.8,636.1 1093.3,635.1 C1092.8,634.1 1091.2,630.5 1091.0,630.0Z"/><path d="M525.0,483.0 C525.5,482.9 529.3,481.9 530.4,481.7 C531.5,481.5 535.3,480.8 536.0,481.0 C536.7,481.2 537.3,483.4 537.0,484.0 C536.7,484.6 533.7,486.3 532.9,486.9 C532.1,487.5 529.8,489.7 529.0,490.0 C528.2,490.3 525.4,490.7 525.0,490.0 C524.6,489.3 525.0,483.7 525.0,483.0Z"/><path d="M843.0,589.0 C843.4,588.6 846.3,586.1 847.1,585.4 C848.0,584.7 850.7,582.8 851.5,582.1 C852.3,581.3 854.5,578.9 855.3,578.1 C856.0,577.3 858.4,575.1 859.3,574.4 C860.2,573.7 863.1,572.1 864.0,571.5 C864.9,570.9 867.4,568.7 868.2,567.9 C869.0,567.2 871.0,564.1 872.0,564.0 C873.0,563.9 877.8,566.3 878.0,567.0 C878.2,567.7 875.2,570.0 874.5,570.7 C873.8,571.4 871.6,573.6 870.9,574.3 C870.3,575.1 868.6,577.8 867.9,578.5 C867.3,579.3 864.9,581.3 864.2,582.1 C863.5,582.8 861.9,585.5 861.0,586.0 C860.1,586.5 856.3,587.3 855.1,587.4 C853.9,587.6 850.2,587.6 849.0,587.7 C847.7,587.9 843.6,588.9 843.0,589.0Z"/></g><ellipse cx="912" cy="392" rx="41" ry="13.5" fill="#92d050" stroke="#000" stroke-width="1.1"/><path d="M563 222h6v2h-6zM587 222h6v2h-6zM599 222h6v2h-6zM607 222h2v2h-2zM687 222h4v2h-4zM721 222h8v2h-8zM737 222h6v2h-6zM765 222h2v2h-2zM773 222h2v2h-2zM799 222h4v2h-4zM587 224h4v2h-4zM663 224h2v2h-2zM687 224h2v2h-2zM729 224h2v2h-2zM737 224h4v2h-4zM625 226h2v2h-2zM689 226h4v2h-4zM729 226h4v2h-4zM735 226h4v2h-4zM755 226h2v2h-2zM541 228h4v2h-4zM591 228h2v2h-2zM635 228h2v2h-2zM649 228h6v2h-6zM659 228h2v2h-2zM669 228h2v2h-2zM673 228h2v2h-2zM689 228h10v2h-10zM725 228h4v2h-4zM731 228h4v2h-4zM739 228h2v2h-2zM765 228h2v2h-2zM543 230h4v2h-4zM633 230h4v2h-4zM649 230h2v2h-2zM653 230h2v2h-2zM689 230h4v2h-4zM725 230h2v2h-2zM737 230h2v2h-2zM759 230h4v2h-4zM611 232h4v2h-4zM635 232h4v2h-4zM705 232h2v2h-2zM709 232h2v2h-2zM727 232h2v2h-2zM759 232h2v2h-2zM549 234h2v2h-2zM589 234h4v2h-4zM609 234h8v2h-8zM635 234h4v2h-4zM647 234h4v2h-4zM691 234h4v2h-4zM703 234h4v2h-4zM709 234h2v2h-2zM783 234h6v2h-6zM587 236h2v2h-2zM597 236h2v2h-2zM645 236h2v2h-2zM703 236h4v2h-4zM709 236h2v2h-2zM733 236h2v2h-2zM757 236h2v2h-2zM565 238h2v2h-2zM627 238h2v2h-2zM633 238h2v2h-2zM707 238h4v2h-4zM731 238h4v2h-4zM557 240h2v2h-2zM563 240h10v2h-10zM577 240h2v2h-2zM623 240h2v2h-2zM641 240h6v2h-6zM707 240h6v2h-6zM735 240h2v2h-2zM745 240h4v2h-4zM753 240h2v2h-2zM777 240h4v2h-4zM567 242h2v2h-2zM623 242h2v2h-2zM641 242h2v2h-2zM693 242h2v2h-2zM705 242h2v2h-2zM733 242h2v2h-2zM745 242h4v2h-4zM753 242h2v2h-2zM777 242h6v2h-6zM533 244h6v2h-6zM599 244h4v2h-4zM665 244h4v2h-4zM689 244h4v2h-4zM699 244h2v2h-2zM731 244h4v2h-4zM745 244h2v2h-2zM775 244h6v2h-6zM785 244h2v2h-2zM789 244h2v2h-2zM527 246h2v2h-2zM533 246h6v2h-6zM545 246h6v2h-6zM597 246h2v2h-2zM615 246h2v2h-2zM619 246h2v2h-2zM671 246h4v2h-4zM685 246h4v2h-4zM693 246h2v2h-2zM697 246h2v2h-2zM717 246h2v2h-2zM723 246h2v2h-2zM729 246h2v2h-2zM733 246h4v2h-4zM743 246h2v2h-2zM781 246h12v2h-12zM801 246h2v2h-2zM533 248h6v2h-6zM599 248h2v2h-2zM621 248h4v2h-4zM673 248h4v2h-4zM683 248h8v2h-8zM699 248h2v2h-2zM717 248h2v2h-2zM729 248h2v2h-2zM733 248h4v2h-4zM777 248h6v2h-6zM785 248h4v2h-4zM791 248h4v2h-4zM801 248h2v2h-2zM533 250h6v2h-6zM597 250h6v2h-6zM621 250h8v2h-8zM685 250h4v2h-4zM727 250h4v2h-4zM733 250h4v2h-4zM739 250h4v2h-4zM771 250h2v2h-2zM775 250h6v2h-6zM783 250h2v2h-2zM787 250h8v2h-8zM597 252h6v2h-6zM615 252h2v2h-2zM621 252h6v2h-6zM637 252h2v2h-2zM641 252h4v2h-4zM665 252h2v2h-2zM719 252h4v2h-4zM731 252h6v2h-6zM741 252h2v2h-2zM757 252h2v2h-2zM767 252h12v2h-12zM791 252h4v2h-4zM797 252h2v2h-2zM533 254h2v2h-2zM571 254h2v2h-2zM601 254h4v2h-4zM619 254h2v2h-2zM633 254h2v2h-2zM645 254h4v2h-4zM671 254h2v2h-2zM687 254h2v2h-2zM701 254h2v2h-2zM717 254h6v2h-6zM731 254h4v2h-4zM737 254h4v2h-4zM773 254h6v2h-6zM781 254h2v2h-2zM789 254h6v2h-6zM591 256h2v2h-2zM601 256h4v2h-4zM617 256h2v2h-2zM671 256h4v2h-4zM687 256h2v2h-2zM707 256h12v2h-12zM731 256h2v2h-2zM735 256h2v2h-2zM741 256h2v2h-2zM747 256h2v2h-2zM751 256h10v2h-10zM765 256h2v2h-2zM775 256h2v2h-2zM779 256h6v2h-6zM591 258h2v2h-2zM595 258h4v2h-4zM605 258h4v2h-4zM651 258h4v2h-4zM671 258h4v2h-4zM703 258h4v2h-4zM711 258h10v2h-10zM729 258h6v2h-6zM737 258h8v2h-8zM755 258h10v2h-10zM775 258h12v2h-12zM795 258h2v2h-2zM819 258h2v2h-2zM593 260h6v2h-6zM605 260h2v2h-2zM619 260h6v2h-6zM713 260h2v2h-2zM717 260h12v2h-12zM737 260h2v2h-2zM741 260h4v2h-4zM755 260h12v2h-12zM775 260h4v2h-4zM781 260h6v2h-6zM819 260h4v2h-4zM545 262h6v2h-6zM563 262h4v2h-4zM579 262h2v2h-2zM585 262h2v2h-2zM591 262h4v2h-4zM615 262h8v2h-8zM625 262h2v2h-2zM653 262h4v2h-4zM659 262h2v2h-2zM701 262h6v2h-6zM721 262h4v2h-4zM727 262h2v2h-2zM733 262h2v2h-2zM743 262h2v2h-2zM755 262h6v2h-6zM763 262h4v2h-4zM769 262h2v2h-2zM777 262h2v2h-2zM783 262h10v2h-10zM805 262h2v2h-2zM821 262h2v2h-2zM541 264h4v2h-4zM567 264h2v2h-2zM587 264h6v2h-6zM611 264h12v2h-12zM627 264h2v2h-2zM651 264h2v2h-2zM655 264h8v2h-8zM697 264h10v2h-10zM721 264h4v2h-4zM755 264h6v2h-6zM765 264h6v2h-6zM783 264h10v2h-10zM803 264h4v2h-4zM541 266h2v2h-2zM565 266h8v2h-8zM585 266h10v2h-10zM597 266h2v2h-2zM611 266h12v2h-12zM647 266h4v2h-4zM689 266h2v2h-2zM693 266h2v2h-2zM697 266h2v2h-2zM701 266h4v2h-4zM709 266h6v2h-6zM723 266h6v2h-6zM731 266h4v2h-4zM753 266h8v2h-8zM767 266h4v2h-4zM783 266h10v2h-10zM539 268h2v2h-2zM565 268h2v2h-2zM569 268h4v2h-4zM585 268h2v2h-2zM593 268h2v2h-2zM597 268h2v2h-2zM613 268h2v2h-2zM621 268h2v2h-2zM627 268h2v2h-2zM641 268h8v2h-8zM651 268h2v2h-2zM687 268h4v2h-4zM697 268h2v2h-2zM701 268h4v2h-4zM713 268h2v2h-2zM723 268h10v2h-10zM737 268h2v2h-2zM747 268h8v2h-8zM757 268h4v2h-4zM767 268h2v2h-2zM771 268h4v2h-4zM777 268h2v2h-2zM783 268h2v2h-2zM791 268h2v2h-2zM563 270h4v2h-4zM569 270h4v2h-4zM591 270h6v2h-6zM625 270h2v2h-2zM641 270h10v2h-10zM663 270h2v2h-2zM677 270h4v2h-4zM693 270h6v2h-6zM713 270h4v2h-4zM725 270h6v2h-6zM733 270h8v2h-8zM749 270h6v2h-6zM757 270h26v2h-26zM791 270h2v2h-2zM535 272h2v2h-2zM539 272h2v2h-2zM563 272h6v2h-6zM573 272h2v2h-2zM593 272h2v2h-2zM617 272h2v2h-2zM623 272h2v2h-2zM627 272h4v2h-4zM637 272h14v2h-14zM691 272h2v2h-2zM713 272h4v2h-4zM725 272h16v2h-16zM745 272h10v2h-10zM763 272h18v2h-18zM535 274h2v2h-2zM561 274h6v2h-6zM569 274h6v2h-6zM615 274h2v2h-2zM619 274h2v2h-2zM625 274h2v2h-2zM629 274h6v2h-6zM639 274h2v2h-2zM645 274h6v2h-6zM653 274h2v2h-2zM669 274h4v2h-4zM689 274h4v2h-4zM713 274h10v2h-10zM725 274h30v2h-30zM761 274h14v2h-14zM777 274h2v2h-2zM781 274h2v2h-2zM805 274h2v2h-2zM559 276h2v2h-2zM571 276h4v2h-4zM581 276h8v2h-8zM613 276h2v2h-2zM631 276h6v2h-6zM647 276h8v2h-8zM669 276h6v2h-6zM685 276h2v2h-2zM693 276h2v2h-2zM713 276h8v2h-8zM725 276h18v2h-18zM745 276h10v2h-10zM761 276h16v2h-16zM535 278h2v2h-2zM561 278h4v2h-4zM569 278h4v2h-4zM617 278h2v2h-2zM631 278h8v2h-8zM651 278h6v2h-6zM667 278h6v2h-6zM685 278h2v2h-2zM709 278h4v2h-4zM715 278h4v2h-4zM721 278h16v2h-16zM739 278h4v2h-4zM749 278h4v2h-4zM761 278h12v2h-12zM537 280h4v2h-4zM579 280h4v2h-4zM599 280h4v2h-4zM605 280h4v2h-4zM617 280h4v2h-4zM627 280h2v2h-2zM631 280h8v2h-8zM653 280h2v2h-2zM661 280h4v2h-4zM669 280h4v2h-4zM687 280h2v2h-2zM691 280h2v2h-2zM707 280h4v2h-4zM713 280h20v2h-20zM735 280h2v2h-2zM743 280h10v2h-10zM755 280h2v2h-2zM759 280h4v2h-4zM767 280h6v2h-6zM535 282h4v2h-4zM575 282h4v2h-4zM595 282h16v2h-16zM621 282h8v2h-8zM635 282h2v2h-2zM653 282h4v2h-4zM659 282h6v2h-6zM671 282h10v2h-10zM687 282h2v2h-2zM707 282h4v2h-4zM713 282h18v2h-18zM733 282h4v2h-4zM743 282h6v2h-6zM755 282h8v2h-8zM781 282h2v2h-2zM785 282h2v2h-2zM579 284h2v2h-2zM597 284h8v2h-8zM607 284h6v2h-6zM615 284h2v2h-2zM623 284h2v2h-2zM627 284h2v2h-2zM637 284h4v2h-4zM645 284h2v2h-2zM651 284h2v2h-2zM655 284h10v2h-10zM671 284h4v2h-4zM677 284h4v2h-4zM691 284h2v2h-2zM695 284h2v2h-2zM703 284h6v2h-6zM711 284h26v2h-26zM741 284h10v2h-10zM761 284h4v2h-4zM767 284h2v2h-2zM771 284h2v2h-2zM781 284h2v2h-2zM785 284h4v2h-4zM597 286h4v2h-4zM607 286h10v2h-10zM635 286h2v2h-2zM639 286h4v2h-4zM645 286h30v2h-30zM677 286h4v2h-4zM689 286h6v2h-6zM699 286h10v2h-10zM715 286h4v2h-4zM725 286h18v2h-18zM747 286h8v2h-8zM761 286h2v2h-2zM765 286h4v2h-4zM783 286h2v2h-2zM799 286h4v2h-4zM805 286h2v2h-2zM527 288h2v2h-2zM555 288h4v2h-4zM591 288h2v2h-2zM601 288h2v2h-2zM611 288h4v2h-4zM619 288h2v2h-2zM635 288h4v2h-4zM647 288h2v2h-2zM651 288h12v2h-12zM665 288h6v2h-6zM673 288h8v2h-8zM683 288h6v2h-6zM691 288h4v2h-4zM701 288h6v2h-6zM711 288h2v2h-2zM717 288h2v2h-2zM725 288h16v2h-16zM743 288h2v2h-2zM747 288h8v2h-8zM763 288h8v2h-8zM799 288h2v2h-2zM803 288h4v2h-4zM527 290h2v2h-2zM547 290h2v2h-2zM555 290h6v2h-6zM587 290h6v2h-6zM597 290h2v2h-2zM601 290h4v2h-4zM613 290h4v2h-4zM619 290h6v2h-6zM633 290h6v2h-6zM649 290h12v2h-12zM663 290h20v2h-20zM685 290h6v2h-6zM699 290h6v2h-6zM707 290h4v2h-4zM713 290h6v2h-6zM725 290h10v2h-10zM747 290h8v2h-8zM759 290h2v2h-2zM763 290h8v2h-8zM799 290h2v2h-2zM533 292h2v2h-2zM539 292h12v2h-12zM553 292h8v2h-8zM565 292h2v2h-2zM569 292h2v2h-2zM583 292h2v2h-2zM587 292h10v2h-10zM623 292h4v2h-4zM637 292h2v2h-2zM647 292h14v2h-14zM663 292h4v2h-4zM669 292h2v2h-2zM673 292h20v2h-20zM701 292h4v2h-4zM709 292h10v2h-10zM725 292h2v2h-2zM729 292h2v2h-2zM747 292h8v2h-8zM759 292h2v2h-2zM765 292h2v2h-2zM769 292h8v2h-8zM789 292h2v2h-2zM801 292h2v2h-2zM533 294h14v2h-14zM551 294h16v2h-16zM569 294h6v2h-6zM585 294h12v2h-12zM637 294h8v2h-8zM649 294h10v2h-10zM665 294h2v2h-2zM669 294h4v2h-4zM677 294h14v2h-14zM693 294h2v2h-2zM701 294h18v2h-18zM727 294h2v2h-2zM731 294h4v2h-4zM747 294h6v2h-6zM765 294h2v2h-2zM769 294h8v2h-8zM785 294h2v2h-2zM789 294h6v2h-6zM525 296h6v2h-6zM535 296h2v2h-2zM539 296h4v2h-4zM545 296h2v2h-2zM549 296h16v2h-16zM569 296h4v2h-4zM583 296h6v2h-6zM591 296h6v2h-6zM639 296h4v2h-4zM649 296h8v2h-8zM659 296h2v2h-2zM665 296h4v2h-4zM675 296h18v2h-18zM701 296h6v2h-6zM709 296h14v2h-14zM725 296h8v2h-8zM735 296h2v2h-2zM741 296h2v2h-2zM747 296h6v2h-6zM757 296h6v2h-6zM771 296h8v2h-8zM783 296h8v2h-8zM525 298h4v2h-4zM539 298h4v2h-4zM549 298h12v2h-12zM565 298h2v2h-2zM569 298h4v2h-4zM583 298h2v2h-2zM587 298h6v2h-6zM595 298h2v2h-2zM603 298h6v2h-6zM619 298h2v2h-2zM629 298h2v2h-2zM633 298h2v2h-2zM639 298h2v2h-2zM645 298h6v2h-6zM653 298h2v2h-2zM659 298h4v2h-4zM665 298h6v2h-6zM675 298h18v2h-18zM711 298h8v2h-8zM725 298h12v2h-12zM741 298h2v2h-2zM747 298h6v2h-6zM755 298h6v2h-6zM763 298h2v2h-2zM771 298h6v2h-6zM783 298h8v2h-8zM527 300h4v2h-4zM549 300h8v2h-8zM569 300h2v2h-2zM573 300h12v2h-12zM597 300h2v2h-2zM601 300h10v2h-10zM617 300h4v2h-4zM629 300h6v2h-6zM639 300h2v2h-2zM645 300h8v2h-8zM657 300h24v2h-24zM683 300h12v2h-12zM697 300h2v2h-2zM721 300h2v2h-2zM725 300h10v2h-10zM739 300h28v2h-28zM773 300h2v2h-2zM779 300h10v2h-10zM799 300h4v2h-4zM531 302h4v2h-4zM551 302h8v2h-8zM573 302h10v2h-10zM585 302h8v2h-8zM599 302h10v2h-10zM619 302h4v2h-4zM627 302h2v2h-2zM633 302h4v2h-4zM639 302h32v2h-32zM675 302h12v2h-12zM689 302h14v2h-14zM705 302h2v2h-2zM711 302h6v2h-6zM725 302h18v2h-18zM747 302h6v2h-6zM755 302h12v2h-12zM773 302h2v2h-2zM781 302h6v2h-6zM551 304h14v2h-14zM567 304h16v2h-16zM587 304h4v2h-4zM597 304h12v2h-12zM619 304h2v2h-2zM625 304h4v2h-4zM633 304h20v2h-20zM655 304h16v2h-16zM675 304h30v2h-30zM713 304h4v2h-4zM721 304h20v2h-20zM755 304h14v2h-14zM771 304h14v2h-14zM531 306h2v2h-2zM549 306h24v2h-24zM575 306h6v2h-6zM587 306h4v2h-4zM595 306h14v2h-14zM617 306h6v2h-6zM627 306h2v2h-2zM635 306h20v2h-20zM657 306h26v2h-26zM685 306h2v2h-2zM689 306h16v2h-16zM707 306h2v2h-2zM711 306h24v2h-24zM753 306h16v2h-16zM771 306h12v2h-12zM789 306h8v2h-8zM531 308h6v2h-6zM545 308h4v2h-4zM551 308h14v2h-14zM567 308h6v2h-6zM575 308h8v2h-8zM597 308h14v2h-14zM625 308h4v2h-4zM633 308h46v2h-46zM681 308h24v2h-24zM707 308h34v2h-34zM747 308h2v2h-2zM755 308h2v2h-2zM759 308h18v2h-18zM779 308h4v2h-4zM787 308h2v2h-2zM791 308h2v2h-2zM795 308h2v2h-2zM525 310h2v2h-2zM533 310h4v2h-4zM539 310h2v2h-2zM545 310h18v2h-18zM569 310h16v2h-16zM591 310h2v2h-2zM597 310h4v2h-4zM603 310h6v2h-6zM621 310h8v2h-8zM631 310h10v2h-10zM643 310h8v2h-8zM653 310h4v2h-4zM663 310h16v2h-16zM681 310h60v2h-60zM759 310h18v2h-18zM779 310h4v2h-4zM785 310h6v2h-6zM793 310h4v2h-4zM525 312h2v2h-2zM529 312h10v2h-10zM543 312h10v2h-10zM555 312h6v2h-6zM565 312h20v2h-20zM597 312h8v2h-8zM613 312h2v2h-2zM623 312h18v2h-18zM645 312h2v2h-2zM653 312h6v2h-6zM667 312h10v2h-10zM679 312h18v2h-18zM699 312h2v2h-2zM705 312h14v2h-14zM723 312h2v2h-2zM727 312h14v2h-14zM751 312h2v2h-2zM759 312h18v2h-18zM779 312h12v2h-12zM797 312h2v2h-2zM813 312h2v2h-2zM817 312h2v2h-2zM823 312h8v2h-8zM525 314h2v2h-2zM529 314h6v2h-6zM537 314h4v2h-4zM543 314h12v2h-12zM567 314h20v2h-20zM593 314h6v2h-6zM621 314h26v2h-26zM651 314h2v2h-2zM655 314h2v2h-2zM661 314h2v2h-2zM667 314h28v2h-28zM699 314h4v2h-4zM705 314h20v2h-20zM727 314h14v2h-14zM745 314h2v2h-2zM751 314h2v2h-2zM757 314h16v2h-16zM775 314h2v2h-2zM779 314h8v2h-8zM789 314h2v2h-2zM801 314h2v2h-2zM823 314h2v2h-2zM829 314h2v2h-2zM527 316h8v2h-8zM543 316h8v2h-8zM561 316h2v2h-2zM567 316h16v2h-16zM585 316h8v2h-8zM597 316h2v2h-2zM601 316h2v2h-2zM607 316h2v2h-2zM621 316h28v2h-28zM653 316h2v2h-2zM657 316h6v2h-6zM665 316h28v2h-28zM699 316h2v2h-2zM703 316h34v2h-34zM739 316h8v2h-8zM749 316h2v2h-2zM757 316h10v2h-10zM769 316h2v2h-2zM775 316h2v2h-2zM779 316h10v2h-10zM791 316h4v2h-4zM821 316h2v2h-2zM529 318h4v2h-4zM537 318h2v2h-2zM543 318h6v2h-6zM559 318h4v2h-4zM569 318h14v2h-14zM585 318h4v2h-4zM591 318h2v2h-2zM597 318h12v2h-12zM611 318h42v2h-42zM655 318h8v2h-8zM667 318h4v2h-4zM675 318h36v2h-36zM713 318h12v2h-12zM731 318h6v2h-6zM741 318h12v2h-12zM759 318h8v2h-8zM777 318h2v2h-2zM781 318h10v2h-10zM793 318h2v2h-2zM821 318h2v2h-2zM527 320h2v2h-2zM531 320h12v2h-12zM545 320h4v2h-4zM555 320h4v2h-4zM563 320h6v2h-6zM571 320h10v2h-10zM585 320h4v2h-4zM591 320h2v2h-2zM601 320h2v2h-2zM615 320h38v2h-38zM657 320h12v2h-12zM673 320h42v2h-42zM719 320h4v2h-4zM727 320h10v2h-10zM741 320h12v2h-12zM759 320h10v2h-10zM779 320h6v2h-6zM787 320h2v2h-2zM791 320h2v2h-2zM823 320h2v2h-2zM525 322h2v2h-2zM531 322h4v2h-4zM537 322h14v2h-14zM555 322h36v2h-36zM617 322h4v2h-4zM623 322h28v2h-28zM655 322h2v2h-2zM659 322h10v2h-10zM675 322h40v2h-40zM717 322h6v2h-6zM727 322h10v2h-10zM747 322h4v2h-4zM759 322h10v2h-10zM779 322h4v2h-4zM789 322h2v2h-2zM793 322h2v2h-2zM817 322h4v2h-4zM525 324h60v2h-60zM587 324h6v2h-6zM611 324h2v2h-2zM619 324h16v2h-16zM657 324h2v2h-2zM665 324h2v2h-2zM673 324h8v2h-8zM691 324h18v2h-18zM713 324h2v2h-2zM717 324h22v2h-22zM757 324h2v2h-2zM763 324h2v2h-2zM767 324h4v2h-4zM777 324h2v2h-2zM797 324h4v2h-4zM807 324h2v2h-2zM815 324h4v2h-4zM839 324h4v2h-4zM865 324h2v2h-2zM527 326h46v2h-46zM579 326h16v2h-16zM599 326h2v2h-2zM605 326h6v2h-6zM617 326h18v2h-18zM645 326h2v2h-2zM651 326h2v2h-2zM661 326h4v2h-4zM673 326h38v2h-38zM713 326h10v2h-10zM725 326h14v2h-14zM757 326h10v2h-10zM769 326h2v2h-2zM773 326h2v2h-2zM795 326h2v2h-2zM799 326h2v2h-2zM527 328h4v2h-4zM535 328h36v2h-36zM573 328h2v2h-2zM577 328h20v2h-20zM599 328h12v2h-12zM613 328h8v2h-8zM623 328h12v2h-12zM641 328h12v2h-12zM661 328h56v2h-56zM725 328h18v2h-18zM755 328h4v2h-4zM761 328h2v2h-2zM775 328h2v2h-2zM795 328h10v2h-10zM811 328h2v2h-2zM537 330h4v2h-4zM543 330h30v2h-30zM579 330h62v2h-62zM643 330h4v2h-4zM649 330h2v2h-2zM655 330h4v2h-4zM663 330h54v2h-54zM727 330h26v2h-26zM759 330h2v2h-2zM763 330h4v2h-4zM777 330h6v2h-6zM797 330h8v2h-8zM807 330h4v2h-4zM833 330h2v2h-2zM527 332h2v2h-2zM539 332h26v2h-26zM567 332h6v2h-6zM575 332h16v2h-16zM593 332h44v2h-44zM641 332h10v2h-10zM663 332h38v2h-38zM703 332h12v2h-12zM725 332h4v2h-4zM733 332h22v2h-22zM761 332h2v2h-2zM773 332h4v2h-4zM791 332h4v2h-4zM797 332h6v2h-6zM805 332h2v2h-2zM809 332h6v2h-6zM823 332h2v2h-2zM831 332h4v2h-4zM529 334h2v2h-2zM547 334h2v2h-2zM551 334h6v2h-6zM561 334h14v2h-14zM577 334h4v2h-4zM583 334h4v2h-4zM589 334h16v2h-16zM611 334h4v2h-4zM619 334h10v2h-10zM631 334h4v2h-4zM639 334h12v2h-12zM659 334h24v2h-24zM685 334h16v2h-16zM703 334h30v2h-30zM735 334h16v2h-16zM753 334h2v2h-2zM761 334h8v2h-8zM773 334h4v2h-4zM793 334h10v2h-10zM807 334h8v2h-8zM827 334h4v2h-4zM835 334h2v2h-2zM855 334h2v2h-2zM525 336h4v2h-4zM541 336h2v2h-2zM551 336h2v2h-2zM555 336h2v2h-2zM569 336h2v2h-2zM573 336h2v2h-2zM577 336h4v2h-4zM585 336h2v2h-2zM593 336h10v2h-10zM611 336h2v2h-2zM619 336h12v2h-12zM633 336h2v2h-2zM639 336h20v2h-20zM661 336h6v2h-6zM669 336h14v2h-14zM689 336h6v2h-6zM699 336h2v2h-2zM705 336h6v2h-6zM717 336h16v2h-16zM739 336h16v2h-16zM763 336h8v2h-8zM773 336h4v2h-4zM785 336h8v2h-8zM797 336h4v2h-4zM803 336h6v2h-6zM811 336h4v2h-4zM817 336h2v2h-2zM821 336h2v2h-2zM827 336h4v2h-4zM857 336h4v2h-4zM525 338h6v2h-6zM539 338h2v2h-2zM571 338h12v2h-12zM587 338h18v2h-18zM609 338h6v2h-6zM621 338h10v2h-10zM633 338h2v2h-2zM639 338h8v2h-8zM649 338h2v2h-2zM653 338h2v2h-2zM657 338h26v2h-26zM685 338h16v2h-16zM705 338h8v2h-8zM719 338h12v2h-12zM737 338h4v2h-4zM743 338h6v2h-6zM751 338h6v2h-6zM765 338h2v2h-2zM771 338h8v2h-8zM785 338h2v2h-2zM789 338h6v2h-6zM797 338h2v2h-2zM827 338h2v2h-2zM839 338h4v2h-4zM525 340h18v2h-18zM563 340h20v2h-20zM585 340h16v2h-16zM605 340h12v2h-12zM623 340h24v2h-24zM651 340h30v2h-30zM683 340h20v2h-20zM705 340h8v2h-8zM717 340h14v2h-14zM737 340h2v2h-2zM743 340h22v2h-22zM769 340h14v2h-14zM787 340h2v2h-2zM793 340h4v2h-4zM799 340h2v2h-2zM837 340h10v2h-10zM525 342h6v2h-6zM533 342h10v2h-10zM565 342h36v2h-36zM605 342h14v2h-14zM627 342h44v2h-44zM677 342h4v2h-4zM683 342h22v2h-22zM709 342h2v2h-2zM713 342h14v2h-14zM729 342h4v2h-4zM739 342h44v2h-44zM791 342h2v2h-2zM837 342h12v2h-12zM525 344h6v2h-6zM535 344h8v2h-8zM547 344h2v2h-2zM551 344h4v2h-4zM557 344h2v2h-2zM561 344h112v2h-112zM675 344h12v2h-12zM689 344h20v2h-20zM711 344h4v2h-4zM719 344h10v2h-10zM733 344h4v2h-4zM739 344h2v2h-2zM743 344h26v2h-26zM771 344h10v2h-10zM793 344h2v2h-2zM809 344h2v2h-2zM841 344h2v2h-2zM845 344h4v2h-4zM525 346h6v2h-6zM537 346h22v2h-22zM563 346h2v2h-2zM567 346h38v2h-38zM607 346h6v2h-6zM615 346h24v2h-24zM641 346h14v2h-14zM657 346h18v2h-18zM677 346h10v2h-10zM689 346h6v2h-6zM697 346h2v2h-2zM701 346h6v2h-6zM709 346h10v2h-10zM721 346h10v2h-10zM735 346h20v2h-20zM757 346h10v2h-10zM779 346h2v2h-2zM789 346h2v2h-2zM795 346h4v2h-4zM819 346h4v2h-4zM833 346h6v2h-6zM525 348h8v2h-8zM539 348h24v2h-24zM567 348h12v2h-12zM585 348h22v2h-22zM609 348h4v2h-4zM617 348h22v2h-22zM641 348h12v2h-12zM661 348h26v2h-26zM699 348h12v2h-12zM715 348h8v2h-8zM727 348h4v2h-4zM735 348h8v2h-8zM745 348h24v2h-24zM779 348h2v2h-2zM789 348h10v2h-10zM833 348h4v2h-4zM529 350h2v2h-2zM539 350h20v2h-20zM567 350h10v2h-10zM589 350h40v2h-40zM631 350h24v2h-24zM659 350h30v2h-30zM691 350h10v2h-10zM705 350h8v2h-8zM717 350h8v2h-8zM727 350h16v2h-16zM747 350h24v2h-24zM787 350h4v2h-4zM797 350h2v2h-2zM809 350h14v2h-14zM845 350h2v2h-2zM849 350h2v2h-2zM539 352h12v2h-12zM555 352h2v2h-2zM567 352h2v2h-2zM571 352h2v2h-2zM589 352h40v2h-40zM631 352h4v2h-4zM637 352h46v2h-46zM685 352h4v2h-4zM691 352h22v2h-22zM717 352h24v2h-24zM749 352h2v2h-2zM753 352h22v2h-22zM779 352h14v2h-14zM803 352h18v2h-18zM835 352h4v2h-4zM853 352h2v2h-2zM533 354h2v2h-2zM541 354h2v2h-2zM545 354h6v2h-6zM571 354h4v2h-4zM583 354h2v2h-2zM587 354h16v2h-16zM605 354h4v2h-4zM611 354h12v2h-12zM627 354h6v2h-6zM635 354h48v2h-48zM693 354h20v2h-20zM717 354h24v2h-24zM753 354h6v2h-6zM765 354h12v2h-12zM783 354h10v2h-10zM801 354h14v2h-14zM817 354h8v2h-8zM827 354h8v2h-8zM839 354h4v2h-4zM851 354h2v2h-2zM869 354h2v2h-2zM525 356h2v2h-2zM545 356h6v2h-6zM561 356h2v2h-2zM569 356h2v2h-2zM581 356h2v2h-2zM585 356h2v2h-2zM589 356h8v2h-8zM599 356h4v2h-4zM605 356h78v2h-78zM685 356h28v2h-28zM715 356h14v2h-14zM733 356h14v2h-14zM751 356h14v2h-14zM767 356h8v2h-8zM781 356h14v2h-14zM801 356h22v2h-22zM833 356h4v2h-4zM841 356h2v2h-2zM849 356h2v2h-2zM877 356h2v2h-2zM555 358h2v2h-2zM565 358h2v2h-2zM579 358h8v2h-8zM589 358h2v2h-2zM593 358h2v2h-2zM597 358h34v2h-34zM633 358h8v2h-8zM647 358h62v2h-62zM717 358h16v2h-16zM735 358h10v2h-10zM749 358h16v2h-16zM775 358h2v2h-2zM779 358h18v2h-18zM799 358h10v2h-10zM813 358h2v2h-2zM817 358h4v2h-4zM823 358h4v2h-4zM833 358h4v2h-4zM841 358h4v2h-4zM849 358h2v2h-2zM527 360h4v2h-4zM555 360h2v2h-2zM565 360h2v2h-2zM569 360h2v2h-2zM577 360h10v2h-10zM591 360h42v2h-42zM635 360h4v2h-4zM641 360h6v2h-6zM649 360h60v2h-60zM711 360h2v2h-2zM715 360h16v2h-16zM735 360h6v2h-6zM743 360h4v2h-4zM749 360h16v2h-16zM775 360h16v2h-16zM793 360h4v2h-4zM799 360h8v2h-8zM825 360h2v2h-2zM833 360h4v2h-4zM847 360h2v2h-2zM525 362h2v2h-2zM563 362h4v2h-4zM569 362h6v2h-6zM577 362h2v2h-2zM581 362h4v2h-4zM593 362h6v2h-6zM603 362h28v2h-28zM633 362h10v2h-10zM647 362h2v2h-2zM651 362h54v2h-54zM707 362h2v2h-2zM713 362h18v2h-18zM735 362h30v2h-30zM777 362h14v2h-14zM805 362h2v2h-2zM821 362h4v2h-4zM843 362h8v2h-8zM563 364h4v2h-4zM569 364h8v2h-8zM579 364h8v2h-8zM589 364h8v2h-8zM603 364h26v2h-26zM633 364h12v2h-12zM649 364h22v2h-22zM675 364h56v2h-56zM737 364h26v2h-26zM767 364h6v2h-6zM779 364h10v2h-10zM805 364h2v2h-2zM809 364h4v2h-4zM819 364h4v2h-4zM837 364h2v2h-2zM845 364h6v2h-6zM563 366h14v2h-14zM579 366h22v2h-22zM613 366h16v2h-16zM635 366h10v2h-10zM649 366h10v2h-10zM661 366h8v2h-8zM673 366h50v2h-50zM725 366h4v2h-4zM731 366h28v2h-28zM765 366h6v2h-6zM785 366h4v2h-4zM809 366h6v2h-6zM817 366h8v2h-8zM843 366h4v2h-4zM857 366h4v2h-4zM863 366h2v2h-2zM549 368h2v2h-2zM567 368h8v2h-8zM577 368h6v2h-6zM585 368h2v2h-2zM593 368h6v2h-6zM603 368h4v2h-4zM611 368h34v2h-34zM651 368h22v2h-22zM679 368h4v2h-4zM685 368h34v2h-34zM721 368h36v2h-36zM765 368h4v2h-4zM779 368h2v2h-2zM785 368h2v2h-2zM805 368h18v2h-18zM845 368h2v2h-2zM853 368h2v2h-2zM859 368h4v2h-4zM569 370h2v2h-2zM579 370h4v2h-4zM585 370h2v2h-2zM593 370h16v2h-16zM611 370h38v2h-38zM653 370h14v2h-14zM669 370h8v2h-8zM681 370h8v2h-8zM691 370h8v2h-8zM707 370h12v2h-12zM723 370h26v2h-26zM751 370h4v2h-4zM763 370h2v2h-2zM767 370h4v2h-4zM777 370h2v2h-2zM805 370h16v2h-16zM825 370h2v2h-2zM845 370h4v2h-4zM851 370h2v2h-2zM591 372h54v2h-54zM647 372h2v2h-2zM651 372h14v2h-14zM669 372h8v2h-8zM679 372h12v2h-12zM695 372h4v2h-4zM707 372h12v2h-12zM721 372h4v2h-4zM727 372h20v2h-20zM757 372h4v2h-4zM763 372h2v2h-2zM767 372h4v2h-4zM773 372h6v2h-6zM791 372h4v2h-4zM803 372h16v2h-16zM823 372h8v2h-8zM845 372h12v2h-12zM573 374h2v2h-2zM583 374h6v2h-6zM591 374h54v2h-54zM647 374h2v2h-2zM651 374h2v2h-2zM655 374h34v2h-34zM693 374h6v2h-6zM705 374h10v2h-10zM719 374h24v2h-24zM745 374h6v2h-6zM757 374h4v2h-4zM763 374h6v2h-6zM771 374h2v2h-2zM777 374h4v2h-4zM789 374h2v2h-2zM803 374h10v2h-10zM815 374h12v2h-12zM851 374h2v2h-2zM855 374h2v2h-2zM547 376h2v2h-2zM569 376h2v2h-2zM573 376h2v2h-2zM581 376h16v2h-16zM599 376h2v2h-2zM603 376h2v2h-2zM609 376h14v2h-14zM627 376h26v2h-26zM657 376h26v2h-26zM687 376h8v2h-8zM697 376h2v2h-2zM701 376h4v2h-4zM707 376h6v2h-6zM715 376h10v2h-10zM729 376h10v2h-10zM747 376h2v2h-2zM763 376h6v2h-6zM775 376h10v2h-10zM789 376h8v2h-8zM807 376h2v2h-2zM815 376h4v2h-4zM857 376h2v2h-2zM525 378h6v2h-6zM547 378h4v2h-4zM567 378h2v2h-2zM571 378h2v2h-2zM585 378h6v2h-6zM601 378h2v2h-2zM609 378h14v2h-14zM627 378h6v2h-6zM635 378h8v2h-8zM645 378h10v2h-10zM661 378h10v2h-10zM679 378h2v2h-2zM687 378h2v2h-2zM701 378h6v2h-6zM717 378h6v2h-6zM731 378h8v2h-8zM753 378h4v2h-4zM759 378h6v2h-6zM773 378h12v2h-12zM791 378h4v2h-4zM799 378h6v2h-6zM817 378h2v2h-2zM529 380h2v2h-2zM545 380h4v2h-4zM569 380h2v2h-2zM577 380h2v2h-2zM581 380h10v2h-10zM603 380h2v2h-2zM615 380h12v2h-12zM629 380h4v2h-4zM635 380h6v2h-6zM643 380h4v2h-4zM649 380h4v2h-4zM661 380h2v2h-2zM665 380h8v2h-8zM679 380h4v2h-4zM687 380h2v2h-2zM695 380h14v2h-14zM711 380h4v2h-4zM719 380h6v2h-6zM731 380h4v2h-4zM737 380h2v2h-2zM749 380h2v2h-2zM755 380h6v2h-6zM763 380h2v2h-2zM771 380h16v2h-16zM793 380h2v2h-2zM797 380h6v2h-6zM805 380h2v2h-2zM529 382h4v2h-4zM543 382h4v2h-4zM561 382h2v2h-2zM565 382h2v2h-2zM569 382h10v2h-10zM581 382h10v2h-10zM595 382h2v2h-2zM609 382h20v2h-20zM641 382h6v2h-6zM657 382h18v2h-18zM677 382h12v2h-12zM695 382h12v2h-12zM711 382h16v2h-16zM729 382h4v2h-4zM735 382h6v2h-6zM747 382h6v2h-6zM755 382h2v2h-2zM759 382h6v2h-6zM771 382h2v2h-2zM779 382h6v2h-6zM797 382h4v2h-4zM539 384h2v2h-2zM543 384h8v2h-8zM559 384h8v2h-8zM569 384h4v2h-4zM575 384h4v2h-4zM581 384h6v2h-6zM593 384h6v2h-6zM603 384h2v2h-2zM609 384h20v2h-20zM639 384h8v2h-8zM657 384h2v2h-2zM661 384h28v2h-28zM695 384h14v2h-14zM713 384h16v2h-16zM735 384h8v2h-8zM745 384h2v2h-2zM757 384h10v2h-10zM771 384h2v2h-2zM775 384h2v2h-2zM785 384h4v2h-4zM545 386h2v2h-2zM559 386h14v2h-14zM581 386h4v2h-4zM591 386h6v2h-6zM599 386h4v2h-4zM607 386h20v2h-20zM629 386h2v2h-2zM633 386h2v2h-2zM637 386h2v2h-2zM641 386h6v2h-6zM657 386h32v2h-32zM691 386h18v2h-18zM717 386h14v2h-14zM733 386h8v2h-8zM757 386h4v2h-4zM763 386h4v2h-4zM777 386h2v2h-2zM785 386h2v2h-2zM797 386h2v2h-2zM547 388h2v2h-2zM561 388h10v2h-10zM593 388h8v2h-8zM605 388h2v2h-2zM611 388h4v2h-4zM621 388h2v2h-2zM625 388h12v2h-12zM639 388h6v2h-6zM657 388h8v2h-8zM667 388h2v2h-2zM671 388h14v2h-14zM691 388h18v2h-18zM711 388h2v2h-2zM721 388h22v2h-22zM755 388h6v2h-6zM765 388h6v2h-6zM777 388h4v2h-4zM785 388h2v2h-2zM789 388h2v2h-2zM797 388h2v2h-2zM555 390h2v2h-2zM567 390h2v2h-2zM593 390h6v2h-6zM601 390h2v2h-2zM627 390h16v2h-16zM657 390h6v2h-6zM673 390h14v2h-14zM693 390h24v2h-24zM727 390h2v2h-2zM733 390h6v2h-6zM741 390h2v2h-2zM755 390h2v2h-2zM767 390h4v2h-4zM781 390h4v2h-4zM789 390h2v2h-2zM807 390h2v2h-2zM525 392h4v2h-4zM531 392h2v2h-2zM555 392h4v2h-4zM561 392h2v2h-2zM565 392h2v2h-2zM569 392h4v2h-4zM593 392h10v2h-10zM631 392h10v2h-10zM659 392h24v2h-24zM695 392h20v2h-20zM737 392h4v2h-4zM765 392h6v2h-6zM783 392h2v2h-2zM553 394h2v2h-2zM557 394h16v2h-16zM595 394h8v2h-8zM605 394h2v2h-2zM631 394h10v2h-10zM645 394h6v2h-6zM659 394h8v2h-8zM675 394h8v2h-8zM687 394h6v2h-6zM695 394h18v2h-18zM727 394h2v2h-2zM737 394h6v2h-6zM747 394h2v2h-2zM761 394h10v2h-10zM789 394h4v2h-4zM525 396h2v2h-2zM537 396h8v2h-8zM555 396h2v2h-2zM561 396h8v2h-8zM573 396h2v2h-2zM595 396h2v2h-2zM599 396h12v2h-12zM627 396h12v2h-12zM643 396h10v2h-10zM655 396h6v2h-6zM669 396h2v2h-2zM675 396h8v2h-8zM689 396h6v2h-6zM699 396h16v2h-16zM735 396h14v2h-14zM753 396h2v2h-2zM759 396h2v2h-2zM763 396h8v2h-8zM777 396h2v2h-2zM789 396h6v2h-6zM555 398h2v2h-2zM587 398h4v2h-4zM593 398h6v2h-6zM601 398h2v2h-2zM627 398h6v2h-6zM635 398h4v2h-4zM641 398h2v2h-2zM645 398h2v2h-2zM649 398h2v2h-2zM653 398h2v2h-2zM663 398h4v2h-4zM679 398h2v2h-2zM689 398h4v2h-4zM699 398h20v2h-20zM721 398h8v2h-8zM737 398h2v2h-2zM741 398h2v2h-2zM745 398h12v2h-12zM763 398h8v2h-8zM791 398h2v2h-2zM575 400h6v2h-6zM585 400h14v2h-14zM603 400h2v2h-2zM615 400h4v2h-4zM629 400h2v2h-2zM643 400h2v2h-2zM649 400h2v2h-2zM657 400h4v2h-4zM663 400h4v2h-4zM683 400h2v2h-2zM689 400h6v2h-6zM701 400h2v2h-2zM705 400h22v2h-22zM729 400h2v2h-2zM739 400h4v2h-4zM747 400h12v2h-12zM761 400h8v2h-8zM771 400h4v2h-4zM783 400h6v2h-6zM813 400h2v2h-2zM579 402h2v2h-2zM585 402h8v2h-8zM597 402h4v2h-4zM603 402h2v2h-2zM613 402h8v2h-8zM625 402h2v2h-2zM629 402h2v2h-2zM649 402h6v2h-6zM657 402h10v2h-10zM669 402h2v2h-2zM675 402h2v2h-2zM707 402h24v2h-24zM743 402h14v2h-14zM761 402h10v2h-10zM777 402h2v2h-2zM785 402h4v2h-4zM793 402h2v2h-2zM797 402h2v2h-2zM807 402h2v2h-2zM811 402h2v2h-2zM573 404h2v2h-2zM585 404h2v2h-2zM589 404h6v2h-6zM613 404h2v2h-2zM619 404h2v2h-2zM623 404h4v2h-4zM647 404h2v2h-2zM651 404h2v2h-2zM657 404h4v2h-4zM669 404h2v2h-2zM681 404h10v2h-10zM693 404h4v2h-4zM707 404h2v2h-2zM711 404h12v2h-12zM727 404h10v2h-10zM743 404h2v2h-2zM755 404h4v2h-4zM765 404h8v2h-8zM785 404h4v2h-4zM799 404h2v2h-2zM525 406h2v2h-2zM569 406h4v2h-4zM589 406h6v2h-6zM607 406h2v2h-2zM611 406h2v2h-2zM645 406h2v2h-2zM649 406h2v2h-2zM669 406h2v2h-2zM679 406h18v2h-18zM699 406h2v2h-2zM707 406h4v2h-4zM713 406h6v2h-6zM725 406h4v2h-4zM731 406h6v2h-6zM755 406h2v2h-2zM759 406h2v2h-2zM767 406h4v2h-4zM783 406h2v2h-2zM565 408h6v2h-6zM585 408h6v2h-6zM593 408h2v2h-2zM611 408h4v2h-4zM667 408h4v2h-4zM677 408h10v2h-10zM689 408h4v2h-4zM699 408h14v2h-14zM717 408h8v2h-8zM727 408h2v2h-2zM731 408h4v2h-4zM759 408h2v2h-2zM767 408h2v2h-2zM789 408h2v2h-2zM563 410h6v2h-6zM587 410h2v2h-2zM593 410h4v2h-4zM611 410h2v2h-2zM627 410h2v2h-2zM633 410h2v2h-2zM667 410h2v2h-2zM673 410h12v2h-12zM687 410h8v2h-8zM701 410h10v2h-10zM717 410h2v2h-2zM723 410h2v2h-2zM733 410h2v2h-2zM743 410h2v2h-2zM769 410h2v2h-2zM781 410h2v2h-2zM533 412h2v2h-2zM597 412h2v2h-2zM609 412h2v2h-2zM613 412h2v2h-2zM623 412h12v2h-12zM671 412h14v2h-14zM687 412h10v2h-10zM701 412h10v2h-10zM717 412h4v2h-4zM723 412h4v2h-4zM739 412h6v2h-6zM767 412h4v2h-4zM783 412h2v2h-2zM527 414h2v2h-2zM559 414h2v2h-2zM575 414h4v2h-4zM597 414h10v2h-10zM609 414h6v2h-6zM621 414h18v2h-18zM641 414h4v2h-4zM659 414h2v2h-2zM663 414h2v2h-2zM671 414h10v2h-10zM689 414h8v2h-8zM701 414h10v2h-10zM717 414h6v2h-6zM725 414h4v2h-4zM737 414h4v2h-4zM743 414h4v2h-4zM767 414h6v2h-6zM781 414h4v2h-4zM795 414h2v2h-2zM819 414h2v2h-2zM527 416h4v2h-4zM573 416h6v2h-6zM605 416h4v2h-4zM611 416h2v2h-2zM621 416h4v2h-4zM631 416h6v2h-6zM641 416h2v2h-2zM651 416h2v2h-2zM657 416h2v2h-2zM671 416h12v2h-12zM687 416h24v2h-24zM717 416h12v2h-12zM741 416h4v2h-4zM767 416h2v2h-2zM771 416h2v2h-2zM779 416h4v2h-4zM797 416h2v2h-2zM527 418h2v2h-2zM571 418h2v2h-2zM575 418h2v2h-2zM623 418h4v2h-4zM631 418h12v2h-12zM657 418h2v2h-2zM665 418h2v2h-2zM669 418h6v2h-6zM677 418h6v2h-6zM685 418h4v2h-4zM691 418h18v2h-18zM711 418h2v2h-2zM715 418h12v2h-12zM735 418h2v2h-2zM739 418h6v2h-6zM767 418h2v2h-2zM779 418h2v2h-2zM795 418h4v2h-4zM801 418h4v2h-4zM525 420h6v2h-6zM569 420h4v2h-4zM591 420h6v2h-6zM623 420h6v2h-6zM635 420h8v2h-8zM653 420h6v2h-6zM671 420h8v2h-8zM683 420h24v2h-24zM711 420h4v2h-4zM719 420h4v2h-4zM725 420h2v2h-2zM737 420h6v2h-6zM765 420h14v2h-14zM799 420h4v2h-4zM805 420h4v2h-4zM827 420h2v2h-2zM597 422h2v2h-2zM623 422h4v2h-4zM637 422h4v2h-4zM657 422h4v2h-4zM663 422h4v2h-4zM681 422h22v2h-22zM705 422h16v2h-16zM723 422h6v2h-6zM735 422h10v2h-10zM749 422h2v2h-2zM767 422h6v2h-6zM775 422h2v2h-2zM609 424h2v2h-2zM641 424h6v2h-6zM659 424h12v2h-12zM683 424h20v2h-20zM707 424h16v2h-16zM725 424h6v2h-6zM735 424h2v2h-2zM739 424h2v2h-2zM743 424h4v2h-4zM751 424h2v2h-2zM771 424h2v2h-2zM609 426h4v2h-4zM619 426h4v2h-4zM641 426h10v2h-10zM659 426h6v2h-6zM667 426h4v2h-4zM683 426h6v2h-6zM693 426h8v2h-8zM709 426h22v2h-22zM741 426h14v2h-14zM609 428h4v2h-4zM641 428h8v2h-8zM651 428h2v2h-2zM659 428h2v2h-2zM663 428h4v2h-4zM671 428h2v2h-2zM679 428h4v2h-4zM685 428h4v2h-4zM691 428h12v2h-12zM707 428h16v2h-16zM725 428h4v2h-4zM741 428h6v2h-6zM775 428h2v2h-2zM645 430h4v2h-4zM653 430h6v2h-6zM661 430h2v2h-2zM667 430h2v2h-2zM671 430h2v2h-2zM675 430h12v2h-12zM693 430h10v2h-10zM705 430h18v2h-18zM727 430h6v2h-6zM745 430h2v2h-2zM759 430h2v2h-2zM775 430h2v2h-2zM581 432h2v2h-2zM635 432h2v2h-2zM649 432h2v2h-2zM653 432h4v2h-4zM677 432h14v2h-14zM695 432h4v2h-4zM701 432h18v2h-18zM725 432h8v2h-8zM745 432h2v2h-2zM751 432h2v2h-2zM755 432h2v2h-2zM759 432h2v2h-2zM771 432h2v2h-2zM803 432h2v2h-2zM633 434h2v2h-2zM649 434h4v2h-4zM655 434h2v2h-2zM661 434h2v2h-2zM677 434h14v2h-14zM693 434h10v2h-10zM707 434h12v2h-12zM725 434h10v2h-10zM745 434h2v2h-2zM755 434h4v2h-4zM543 436h4v2h-4zM647 436h20v2h-20zM677 436h10v2h-10zM689 436h4v2h-4zM695 436h6v2h-6zM707 436h16v2h-16zM725 436h4v2h-4zM731 436h6v2h-6zM739 436h8v2h-8zM755 436h2v2h-2zM547 438h4v2h-4zM623 438h2v2h-2zM645 438h4v2h-4zM657 438h10v2h-10zM669 438h2v2h-2zM675 438h10v2h-10zM689 438h10v2h-10zM707 438h14v2h-14zM729 438h6v2h-6zM737 438h8v2h-8zM787 438h4v2h-4zM547 440h2v2h-2zM561 440h2v2h-2zM645 440h6v2h-6zM655 440h8v2h-8zM667 440h2v2h-2zM673 440h20v2h-20zM695 440h12v2h-12zM709 440h4v2h-4zM715 440h6v2h-6zM725 440h6v2h-6zM737 440h8v2h-8zM759 440h2v2h-2zM547 442h2v2h-2zM639 442h2v2h-2zM645 442h2v2h-2zM653 442h6v2h-6zM661 442h8v2h-8zM671 442h28v2h-28zM701 442h18v2h-18zM721 442h2v2h-2zM725 442h6v2h-6zM531 444h2v2h-2zM589 444h6v2h-6zM599 444h4v2h-4zM607 444h2v2h-2zM643 444h4v2h-4zM653 444h4v2h-4zM663 444h10v2h-10zM675 444h18v2h-18zM701 444h10v2h-10zM713 444h16v2h-16zM755 444h4v2h-4zM651 446h6v2h-6zM659 446h12v2h-12zM677 446h18v2h-18zM701 446h10v2h-10zM715 446h2v2h-2zM721 446h10v2h-10zM735 446h2v2h-2zM757 446h2v2h-2zM555 448h2v2h-2zM657 448h12v2h-12zM683 448h6v2h-6zM697 448h4v2h-4zM705 448h2v2h-2zM715 448h2v2h-2zM727 448h2v2h-2zM737 448h2v2h-2zM755 448h2v2h-2zM761 448h2v2h-2zM573 450h2v2h-2zM625 450h2v2h-2zM631 450h2v2h-2zM637 450h10v2h-10zM657 450h10v2h-10zM683 450h4v2h-4zM689 450h4v2h-4zM699 450h2v2h-2zM715 450h2v2h-2zM727 450h4v2h-4zM735 450h14v2h-14zM761 450h2v2h-2zM783 450h2v2h-2zM641 452h2v2h-2zM655 452h14v2h-14zM689 452h4v2h-4zM699 452h2v2h-2zM707 452h2v2h-2zM713 452h4v2h-4zM723 452h8v2h-8zM739 452h2v2h-2zM743 452h2v2h-2zM591 454h2v2h-2zM647 454h2v2h-2zM653 454h14v2h-14zM679 454h4v2h-4zM689 454h12v2h-12zM703 454h2v2h-2zM711 454h6v2h-6zM723 454h10v2h-10zM735 454h2v2h-2zM579 456h4v2h-4zM591 456h2v2h-2zM627 456h4v2h-4zM645 456h2v2h-2zM649 456h4v2h-4zM655 456h12v2h-12zM671 456h4v2h-4zM677 456h4v2h-4zM691 456h10v2h-10zM703 456h2v2h-2zM711 456h8v2h-8zM725 456h6v2h-6zM733 456h2v2h-2zM647 458h2v2h-2zM653 458h14v2h-14zM669 458h6v2h-6zM677 458h4v2h-4zM691 458h14v2h-14zM713 458h4v2h-4zM727 458h6v2h-6zM633 460h2v2h-2zM645 460h2v2h-2zM653 460h14v2h-14zM669 460h12v2h-12zM693 460h12v2h-12zM707 460h2v2h-2zM711 460h6v2h-6zM725 460h2v2h-2zM729 460h2v2h-2zM633 462h6v2h-6zM647 462h6v2h-6zM655 462h28v2h-28zM691 462h10v2h-10zM703 462h10v2h-10zM723 462h6v2h-6zM631 464h6v2h-6zM649 464h4v2h-4zM657 464h8v2h-8zM669 464h4v2h-4zM675 464h8v2h-8zM693 464h22v2h-22zM725 464h6v2h-6zM735 464h2v2h-2zM607 466h2v2h-2zM611 466h2v2h-2zM635 466h4v2h-4zM651 466h2v2h-2zM661 466h8v2h-8zM671 466h2v2h-2zM679 466h4v2h-4zM695 466h14v2h-14zM711 466h8v2h-8zM729 466h6v2h-6zM547 468h4v2h-4zM595 468h2v2h-2zM605 468h2v2h-2zM609 468h6v2h-6zM627 468h2v2h-2zM661 468h10v2h-10zM677 468h4v2h-4zM683 468h6v2h-6zM693 468h12v2h-12zM707 468h10v2h-10zM719 468h4v2h-4zM735 468h2v2h-2zM739 468h2v2h-2zM755 468h6v2h-6zM767 468h4v2h-4zM621 470h2v2h-2zM635 470h2v2h-2zM651 470h2v2h-2zM657 470h2v2h-2zM665 470h4v2h-4zM677 470h6v2h-6zM689 470h4v2h-4zM695 470h8v2h-8zM705 470h4v2h-4zM711 470h8v2h-8zM729 470h2v2h-2zM735 470h6v2h-6zM757 470h2v2h-2zM621 472h2v2h-2zM635 472h8v2h-8zM647 472h6v2h-6zM655 472h4v2h-4zM667 472h2v2h-2zM677 472h4v2h-4zM691 472h2v2h-2zM695 472h2v2h-2zM699 472h2v2h-2zM709 472h16v2h-16zM753 472h2v2h-2zM567 474h2v2h-2zM573 474h2v2h-2zM603 474h2v2h-2zM617 474h2v2h-2zM633 474h14v2h-14zM649 474h6v2h-6zM677 474h4v2h-4zM687 474h8v2h-8zM707 474h2v2h-2zM711 474h14v2h-14zM735 474h2v2h-2zM745 474h2v2h-2zM751 474h2v2h-2zM567 476h2v2h-2zM619 476h2v2h-2zM637 476h2v2h-2zM677 476h4v2h-4zM689 476h4v2h-4zM715 476h2v2h-2zM725 476h4v2h-4zM751 476h2v2h-2zM621 478h2v2h-2zM657 478h4v2h-4zM677 478h4v2h-4zM723 478h6v2h-6zM631 480h2v2h-2zM657 480h6v2h-6zM677 480h4v2h-4zM687 480h2v2h-2zM727 480h2v2h-2zM731 480h2v2h-2zM619 482h2v2h-2zM655 482h4v2h-4zM715 482h2v2h-2zM763 482h2v2h-2zM619 484h2v2h-2zM643 484h2v2h-2zM647 484h2v2h-2zM653 484h6v2h-6zM595 486h2v2h-2zM609 486h2v2h-2zM629 486h4v2h-4zM647 486h6v2h-6zM685 486h4v2h-4zM765 486h2v2h-2zM645 488h6v2h-6zM653 488h2v2h-2zM687 488h2v2h-2zM717 488h4v2h-4zM595 490h2v2h-2zM649 490h2v2h-2zM663 490h2v2h-2zM701 490h2v2h-2zM723 490h2v2h-2zM593 492h4v2h-4zM659 492h4v2h-4zM671 492h2v2h-2zM699 492h10v2h-10zM725 492h4v2h-4zM745 492h2v2h-2zM659 494h2v2h-2zM663 494h4v2h-4zM689 494h2v2h-2zM663 496h4v2h-4zM691 496h2v2h-2zM653 498h4v2h-4zM633 500h2v2h-2zM655 500h2v2h-2zM619 502h2v2h-2zM631 502h4v2h-4zM653 502h2v2h-2zM743 502h4v2h-4zM631 504h4v2h-4zM707 504h4v2h-4zM631 506h4v2h-4zM641 506h2v2h-2zM667 508h4v2h-4zM665 510h10v2h-10zM687 512h2v2h-2zM601 514h2v2h-2zM587 516h2v2h-2zM603 516h2v2h-2zM627 516h4v2h-4zM641 516h2v2h-2zM661 516h2v2h-2zM691 516h2v2h-2zM587 518h2v2h-2zM631 518h4v2h-4zM661 518h2v2h-2zM661 520h2v2h-2zM671 522h2v2h-2zM689 522h8v2h-8zM629 524h4v2h-4zM693 524h4v2h-4zM639 528h2v2h-2zM727 528h2v2h-2zM647 530h2v2h-2zM631 534h2v2h-2zM681 534h2v2h-2zM697 534h2v2h-2zM709 534h2v2h-2zM1061 534h2v2h-2zM629 536h2v2h-2zM633 536h4v2h-4zM1039 536h2v2h-2zM631 538h2v2h-2zM1063 538h2v2h-2zM625 540h4v2h-4zM631 540h2v2h-2zM1053 540h2v2h-2zM1081 540h4v2h-4zM625 542h6v2h-6zM1083 542h2v2h-2zM623 544h4v2h-4zM1057 544h2v2h-2zM637 546h4v2h-4zM647 546h2v2h-2zM677 552h2v2h-2zM679 554h6v2h-6zM1075 600h2v2h-2zM1075 602h2v2h-2zM1077 604h2v2h-2zM1093 604h6v2h-6zM1079 606h2v2h-2zM1089 606h12v2h-12zM1029 608h2v2h-2zM1075 608h6v2h-6zM1097 608h2v2h-2zM1071 610h10v2h-10zM1095 610h4v2h-4zM1033 612h2v2h-2zM1065 612h2v2h-2zM1069 612h12v2h-12zM1083 612h2v2h-2zM1095 612h4v2h-4zM1065 614h10v2h-10zM1077 614h10v2h-10zM1093 614h4v2h-4zM1047 616h2v2h-2zM1059 616h14v2h-14zM1083 616h4v2h-4zM1095 616h2v2h-2zM1031 618h2v2h-2zM1041 618h2v2h-2zM1045 618h4v2h-4zM1053 618h6v2h-6zM1061 618h12v2h-12zM1077 618h6v2h-6zM1089 618h6v2h-6zM1019 620h6v2h-6zM1033 620h2v2h-2zM1043 620h4v2h-4zM1053 620h2v2h-2zM1059 620h12v2h-12zM1073 620h2v2h-2zM1077 620h6v2h-6zM1089 620h2v2h-2zM1031 622h6v2h-6zM1039 622h8v2h-8zM1051 622h4v2h-4zM1061 622h12v2h-12zM1085 622h4v2h-4zM1027 624h10v2h-10zM1043 624h12v2h-12zM1065 624h6v2h-6zM1085 624h6v2h-6zM1097 624h6v2h-6zM1029 626h2v2h-2zM1035 626h2v2h-2zM1039 626h14v2h-14zM1065 626h2v2h-2zM1081 626h2v2h-2zM1041 628h8v2h-8zM1051 628h2v2h-2zM1079 628h2v2h-2zM1041 630h6v2h-6zM1055 630h4v2h-4zM1079 630h4v2h-4zM1039 632h4v2h-4zM1045 632h2v2h-2zM1079 632h2v2h-2zM1083 632h6v2h-6zM1091 632h2v2h-2zM1043 634h4v2h-4zM1051 634h2v2h-2zM1069 634h4v2h-4zM1075 634h2v2h-2zM1083 634h4v2h-4zM1093 634h4v2h-4zM1039 636h6v2h-6zM1067 636h12v2h-12zM1089 636h4v2h-4zM1043 638h2v2h-2zM1089 638h2v2h-2zM1099 638h2v2h-2zM1017 642h2v2h-2zM1047 648h2v2h-2zM1073 648h4v2h-4z" fill="#000"/><g fill="#ffff00" stroke="#000" stroke-width="1.1"><path d="M553.0,484.0 L557.5,483.0 L562.0,482.7 L566.6,482.1 L571.0,481.0 L575.0,480.3 L579.0,479.9 L583.0,480.0 L587.0,480.1 L591.0,479.8 L595.0,479.3 L599.0,479.0 L603.3,480.8 L607.5,482.6 L612.0,484.0 L614.0,488.0 L616.0,492.0 L610.0,497.0 L604.0,501.0 L597.0,501.0 L595.0,505.0 L588.0,508.0 L584.8,511.8 L582.0,516.0 L577.5,515.5 L573.0,516.0 L576.2,512.1 L579.0,508.0 L582.0,503.0 L577.5,501.9 L573.0,501.0 L569.6,497.8 L567.0,494.0 L564.0,490.0 L560.0,489.9 L556.0,490.0 L553.0,484.0Z"/><path d="M1054.0,658.0 L1055.8,654.2 L1056.9,650.1 L1058.0,646.0 L1062.5,645.5 L1067.0,645.0 L1070.5,647.1 L1074.1,648.8 L1078.0,650.0 L1081.7,647.7 L1085.0,645.0 L1090.2,647.2 L1095.0,650.0 L1096.4,653.9 L1097.0,658.0 L1092.7,658.3 L1088.4,658.5 L1084.1,658.0 L1079.8,657.8 L1075.5,658.2 L1071.2,658.0 L1066.9,658.5 L1062.6,657.5 L1058.3,658.5 L1054.0,658.0Z"/><path d="M576.0,505.0 L580.0,507.0 L576.6,509.9 L574.0,513.5 L571.1,516.9 L568.0,520.0 L565.0,518.0 L568.1,515.0 L570.2,511.2 L573.5,508.5 L576.0,505.0Z"/><path d="M557.0,491.0 L563.0,494.0 L559.2,497.0 L555.4,499.9 L552.0,503.3 L548.0,506.0 L544.0,509.0 L539.9,511.9 L536.0,515.0 L532.0,512.0 L535.0,509.1 L538.8,507.4 L541.4,504.0 L545.0,502.0 L547.6,498.8 L551.1,496.6 L553.9,493.6 L557.0,491.0Z"/></g><g fill="none" stroke="#000" stroke-width="1.4" stroke-linejoin="round"><path d="M623.0,222.0 C623.6,224.2 626.4,228.6 626.0,233.0 C625.6,237.4 624.0,239.0 621.0,244.0 C618.0,249.0 614.4,251.6 611.0,258.0 C607.6,264.4 605.8,267.6 604.0,276.0 C602.2,284.4 602.0,289.2 602.0,300.0 C602.0,310.8 604.4,319.0 604.0,330.0 C603.6,341.0 602.4,346.6 600.0,355.0 C597.6,363.4 595.0,366.0 592.0,372.0 C589.0,378.0 586.8,379.4 585.0,385.0 C583.2,390.6 583.4,397.0 583.0,400.0"/><path d="M632.0,222.0 C632.4,224.4 634.8,228.8 634.0,234.0 C633.2,239.2 631.2,242.4 628.0,248.0 C624.8,253.6 621.6,255.6 618.0,262.0 C614.4,268.4 611.8,271.4 610.0,280.0 C608.2,288.6 608.8,294.6 609.0,305.0 C609.2,315.4 611.6,321.4 611.0,332.0 C610.4,342.6 608.6,349.4 606.0,358.0 C603.4,366.6 600.8,368.2 598.0,375.0 C595.2,381.8 593.6,385.0 592.0,392.0 C590.4,399.0 590.4,406.4 590.0,410.0"/><path d="M639.0,222.0 C639.4,224.8 641.8,230.4 641.0,236.0 C640.2,241.6 638.0,244.0 635.0,250.0 C632.0,256.0 629.4,259.2 626.0,266.0 C622.6,272.8 619.8,275.6 618.0,284.0 C616.2,292.4 616.6,298.0 617.0,308.0 C617.4,318.0 620.6,323.6 620.0,334.0 C619.4,344.4 616.8,351.2 614.0,360.0 C611.2,368.8 608.8,370.4 606.0,378.0 C603.2,385.6 601.4,391.6 600.0,398.0 C598.6,404.4 599.2,407.6 599.0,410.0"/><path d="M647.0,222.0 C647.4,225.0 649.8,230.8 649.0,237.0 C648.2,243.2 646.0,246.4 643.0,253.0 C640.0,259.6 637.2,263.0 634.0,270.0 C630.8,277.0 628.4,279.6 627.0,288.0 C625.6,296.4 626.4,302.4 627.0,312.0 C627.6,321.6 630.6,326.0 630.0,336.0 C629.4,346.0 626.8,352.8 624.0,362.0 C621.2,371.2 619.2,374.4 616.0,382.0 C612.8,389.6 610.0,393.6 608.0,400.0 C606.0,406.4 606.4,411.2 606.0,414.0"/><path d="M658.0,222.0 C658.2,225.6 660.2,232.8 659.0,240.0 C657.8,247.2 655.2,250.8 652.0,258.0 C648.8,265.2 646.0,268.8 643.0,276.0 C640.0,283.2 638.0,286.0 637.0,294.0 C636.0,302.0 637.0,306.8 638.0,316.0 C639.0,325.2 642.4,330.4 642.0,340.0 C641.6,349.6 638.8,354.8 636.0,364.0 C633.2,373.2 631.6,378.0 628.0,386.0 C624.4,394.0 620.8,398.0 618.0,404.0 C615.2,410.0 614.8,413.6 614.0,416.0"/><path d="M665.0,222.0 C665.4,226.0 667.8,234.0 667.0,242.0 C666.2,250.0 664.0,254.4 661.0,262.0 C658.0,269.6 654.6,272.4 652.0,280.0 C649.4,287.6 648.4,291.6 648.0,300.0 C647.6,308.4 648.6,312.8 650.0,322.0 C651.4,331.2 655.0,336.8 655.0,346.0 C655.0,355.2 652.6,359.2 650.0,368.0 C647.4,376.8 645.6,382.0 642.0,390.0 C638.4,398.0 635.2,402.6 632.0,408.0 C628.8,413.4 627.2,415.2 626.0,417.0"/><path d="M672.0,222.0 C672.6,226.6 675.4,236.2 675.0,245.0 C674.6,253.8 672.6,257.8 670.0,266.0 C667.4,274.2 664.0,278.0 662.0,286.0 C660.0,294.0 659.8,297.6 660.0,306.0 C660.2,314.4 661.4,318.8 663.0,328.0 C664.6,337.2 667.6,342.8 668.0,352.0 C668.4,361.2 666.6,365.6 665.0,374.0 C663.4,382.4 661.8,386.4 660.0,394.0 C658.2,401.6 656.8,408.4 656.0,412.0"/><path d="M678.0,222.0 C678.8,226.8 682.0,236.4 682.0,246.0 C682.0,255.6 680.0,260.8 678.0,270.0 C676.0,279.2 673.2,283.6 672.0,292.0 C670.8,300.4 671.2,303.6 672.0,312.0 C672.8,320.4 674.0,325.2 676.0,334.0 C678.0,342.8 681.2,346.8 682.0,356.0 C682.8,365.2 681.2,371.2 680.0,380.0 C678.8,388.8 677.6,392.4 676.0,400.0 C674.4,407.6 672.8,414.4 672.0,418.0"/><path d="M683.0,222.0 C684.0,227.2 687.4,237.6 688.0,248.0 C688.6,258.4 687.0,264.4 686.0,274.0 C685.0,283.6 683.2,287.2 683.0,296.0 C682.8,304.8 683.6,309.2 685.0,318.0 C686.4,326.8 687.6,331.2 690.0,340.0 C692.4,348.8 695.6,357.6 697.0,362.0"/><path d="M525.0,280.0 C532.4,279.8 546.2,279.8 562.0,279.0 C577.8,278.2 588.4,277.4 604.0,276.0 C619.6,274.6 620.8,273.6 640.0,272.0 C659.2,270.4 688.0,268.8 700.0,268.0"/><path d="M525.0,381.0 C532.0,380.2 545.0,377.2 560.0,377.0 C575.0,376.8 584.0,378.8 600.0,380.0 C616.0,381.2 624.0,381.8 640.0,383.0 C656.0,384.2 664.0,385.8 680.0,386.0 C696.0,386.2 704.0,385.2 720.0,384.0 C736.0,382.8 752.0,380.8 760.0,380.0"/><path d="M525.0,392.0 C531.6,394.6 543.2,402.0 558.0,405.0 C572.8,408.0 582.6,406.0 599.0,407.0 C615.4,408.0 623.8,407.8 640.0,410.0 C656.2,412.2 664.0,414.0 680.0,418.0 C696.0,422.0 712.0,427.6 720.0,430.0"/><path d="M551.0,400.0 C552.6,401.0 548.8,404.0 559.0,405.0 C569.2,406.0 588.2,404.0 602.0,405.0 C615.8,406.0 616.4,408.6 628.0,410.0 C639.6,411.4 653.6,411.6 660.0,412.0"/><path d="M534.0,443.0 C535.0,441.0 534.0,436.4 539.0,433.0 C544.0,429.6 551.4,427.6 559.0,426.0 C566.6,424.4 571.8,424.0 577.0,425.0 C582.2,426.0 583.8,425.6 585.0,431.0 C586.2,436.4 584.4,445.2 583.0,452.0 C581.6,458.8 582.8,461.6 578.0,465.0 C573.2,468.4 565.4,467.6 559.0,469.0 C552.6,470.4 549.8,473.8 546.0,472.0 C542.2,470.2 541.2,462.4 540.0,460.0"/><path d="M590.0,410.0 C588.6,414.2 585.4,421.6 583.0,431.0 C580.6,440.4 579.2,448.4 578.0,457.0 C576.8,465.6 577.2,470.6 577.0,474.0"/><path d="M599.0,410.0 C597.2,413.6 592.0,421.4 590.0,428.0 C588.0,434.6 590.0,436.2 589.0,443.0 C588.0,449.8 587.2,454.8 585.0,462.0 C582.8,469.2 579.4,475.6 578.0,479.0"/><path d="M606.0,414.0 C604.6,415.4 600.0,417.0 599.0,421.0 C598.0,425.0 602.0,427.8 601.0,434.0 C600.0,440.2 596.2,444.4 594.0,452.0 C591.8,459.6 590.8,468.0 590.0,472.0"/><path d="M609.0,416.0 C609.4,419.0 611.6,423.8 611.0,431.0 C610.4,438.2 607.4,446.2 606.0,452.0 C604.6,457.8 606.4,455.6 604.0,460.0 C601.6,464.4 596.0,471.2 594.0,474.0"/><path d="M614.0,416.0 C616.2,419.6 624.2,426.8 625.0,434.0 C625.8,441.2 620.4,447.4 618.0,452.0 C615.6,456.6 613.8,450.8 613.0,457.0 C612.2,463.2 612.4,475.2 614.0,483.0 C615.6,490.8 618.6,490.6 621.0,496.0 C623.4,501.4 624.2,501.2 626.0,510.0 C627.8,518.8 629.6,528.0 630.0,540.0 C630.4,552.0 628.4,564.0 628.0,570.0"/><path d="M626.0,417.0 C626.8,420.4 630.2,427.0 630.0,434.0 C629.8,441.0 626.4,445.0 625.0,452.0 C623.6,459.0 622.4,462.2 623.0,469.0 C623.6,475.8 625.6,480.6 628.0,486.0 C630.4,491.4 632.6,489.2 635.0,496.0 C637.4,502.8 638.6,509.2 640.0,520.0 C641.4,530.8 640.0,538.0 642.0,550.0 C644.0,562.0 646.4,570.0 650.0,580.0 C653.6,590.0 658.0,596.0 660.0,600.0"/><path d="M547.0,471.0 C551.2,470.6 558.6,470.2 568.0,469.0 C577.4,467.8 585.4,467.4 594.0,465.0 C602.6,462.6 607.6,458.6 611.0,457.0"/><path d="M542.0,476.0 C547.6,475.6 558.4,475.2 570.0,474.0 C581.6,472.8 590.0,471.2 600.0,470.0 C610.0,468.8 616.0,468.4 620.0,468.0"/><path d="M525.0,470.0 C528.0,472.0 535.4,475.6 540.0,480.0 C544.6,484.4 547.0,487.0 548.0,492.0 C549.0,497.0 548.6,501.0 545.0,505.0 C541.4,509.0 533.0,510.6 530.0,512.0"/><path d="M528.0,500.0 C532.4,499.0 543.6,495.0 550.0,495.0 C556.4,495.0 555.0,495.0 560.0,500.0 C565.0,505.0 569.0,514.0 575.0,520.0 C581.0,526.0 582.6,526.0 590.0,530.0 C597.4,534.0 604.0,534.0 612.0,540.0 C620.0,546.0 626.4,556.0 630.0,560.0"/><path d="M540.0,510.0 C544.0,510.4 550.0,509.0 560.0,512.0 C570.0,515.0 580.0,518.4 590.0,525.0 C600.0,531.6 604.0,537.0 610.0,545.0 C616.0,553.0 618.0,561.0 620.0,565.0"/><path d="M614.0,489.0 C623.2,491.2 641.8,493.0 660.0,500.0 C678.2,507.0 689.0,516.0 705.0,524.0 C721.0,532.0 723.0,532.8 740.0,540.0 C757.0,547.2 772.0,553.0 790.0,560.0 C808.0,567.0 822.0,572.0 830.0,575.0"/><path d="M606.0,443.0 C613.2,436.4 631.2,419.6 642.0,410.0 C652.8,400.4 656.4,398.0 660.0,395.0"/><path d="M656.0,422.0 C658.0,430.6 662.2,451.6 666.0,465.0 C669.8,478.4 668.8,483.4 675.0,489.0 C681.2,494.6 688.4,494.8 697.0,493.0 C705.6,491.2 711.4,484.6 718.0,480.0 C724.6,475.4 727.6,472.0 730.0,470.0"/><path d="M683.0,440.0 C683.0,448.2 681.2,471.8 683.0,481.0 C684.8,490.2 688.6,488.2 692.0,486.0 C695.4,483.8 697.4,477.2 700.0,470.0 C702.6,462.8 704.0,454.0 705.0,450.0"/><path d="M700.0,452.0 C701.0,457.2 702.6,472.0 705.0,478.0 C707.4,484.0 709.8,484.4 712.0,482.0 C714.2,479.6 715.2,469.2 716.0,466.0"/><path d="M632.0,489.0 C632.6,493.2 632.4,502.6 635.0,510.0 C637.6,517.4 639.4,521.8 645.0,526.0 C650.6,530.2 657.8,532.2 663.0,531.0 C668.2,529.8 671.2,526.2 671.0,520.0 C670.8,513.8 666.2,505.6 662.0,500.0 C657.8,494.4 654.4,494.4 650.0,492.0 C645.6,489.6 642.0,488.8 640.0,488.0"/><path d="M876.0,222.0 C873.4,226.8 867.4,236.8 863.0,246.0 C858.6,255.2 858.8,259.2 854.0,268.0 C849.2,276.8 846.4,282.2 839.0,290.0 C831.6,297.8 824.4,300.6 817.0,307.0 C809.6,313.4 809.4,317.2 802.0,322.0 C794.6,326.8 790.4,326.4 780.0,331.0 C769.6,335.6 762.0,339.2 750.0,345.0 C738.0,350.8 732.0,353.0 720.0,360.0 C708.0,367.0 696.0,376.0 690.0,380.0"/><path d="M925.0,245.0 C918.2,246.4 905.2,247.4 891.0,252.0 C876.8,256.6 869.4,260.4 854.0,268.0 C838.6,275.6 826.8,283.0 814.0,290.0 C801.2,297.0 800.4,298.2 790.0,303.0 C779.6,307.8 775.0,308.0 762.0,314.0 C749.0,320.0 741.4,325.8 725.0,333.0 C708.6,340.2 697.0,342.6 680.0,350.0 C663.0,357.4 648.0,366.0 640.0,370.0"/><path d="M925.0,256.0 C920.0,256.2 911.2,253.0 900.0,257.0 C888.8,261.0 881.8,270.0 869.0,276.0 C856.2,282.0 848.2,283.4 836.0,287.0 C823.8,290.6 819.2,289.6 808.0,294.0 C796.8,298.4 796.6,299.0 780.0,309.0 C763.4,319.0 743.0,333.4 725.0,344.0 C707.0,354.6 697.0,358.4 690.0,362.0"/><path d="M1100.0,268.0 C1090.0,268.4 1070.0,269.2 1050.0,270.0 C1030.0,270.8 1025.0,266.4 1000.0,272.0 C975.0,277.6 967.0,282.8 925.0,298.0 C883.0,313.2 827.0,333.6 790.0,348.0 C753.0,362.4 758.0,361.2 740.0,370.0 C722.0,378.8 708.0,387.6 700.0,392.0"/><path d="M832.0,318.0 C843.8,313.6 872.4,301.2 891.0,296.0 C909.6,290.8 903.2,294.2 925.0,292.0 C946.8,289.8 967.8,287.0 1000.0,285.0 C1032.2,283.0 1068.8,282.6 1086.0,282.0"/><path d="M525.0,250.0 L528.7,249.7 L532.2,247.8 L536.0,249.0 L539.4,247.7 L542.7,246.1 L546.6,247.3 L550.0,246.0 L553.2,245.9 L556.4,246.0 L559.1,244.2 L562.0,243.0 L565.5,245.8 L570.0,246.0 L573.6,246.0 L576.2,249.5 L580.0,249.0 L583.1,250.3 L586.4,247.8 L589.4,250.6 L592.6,248.9 L595.7,250.1 L598.8,250.0 L602.0,250.0 L604.9,248.6 L607.4,246.1 L610.4,245.0 L613.4,243.7 L617.0,244.0 L620.3,244.8 L623.9,244.7 L626.8,246.8 L630.0,248.0 L633.2,249.4 L636.7,248.5 L640.0,249.3 L643.4,248.9 L646.6,250.5 L650.0,250.0"/><path d="M725.0,305.0 L728.2,304.9 L731.2,303.2 L734.5,304.6 L737.5,303.0 L740.7,303.4 L743.9,304.1 L747.0,303.0 L750.1,304.8 L752.0,308.0 L755.0,310.0 L757.0,312.4 L760.1,313.5 L762.0,316.0 L765.0,315.4 L768.0,315.5 L771.0,316.3 L774.0,316.8 L777.0,314.9 L780.0,316.0 L783.0,315.8 L786.2,316.2 L788.9,314.2 L792.0,314.0 L794.9,312.7 L797.9,312.2 L801.1,313.3 L804.0,312.0 L807.5,312.3 L809.8,315.1 L813.4,315.3 L815.5,318.7 L819.0,319.0 L822.4,317.1 L826.2,316.5 L830.0,316.0 L832.2,318.3 L834.7,320.3 L837.5,322.0 L839.0,325.0 L842.1,324.2 L845.1,322.5 L848.7,324.8 L851.5,322.1 L855.0,323.5 L858.0,322.0 L861.2,323.5 L864.4,325.0 L867.0,327.4 L869.6,329.9 L873.0,331.0 L875.7,328.6 L877.7,325.5 L881.3,324.4 L884.0,322.0 L887.0,323.4 L889.0,326.5 L892.6,327.0 L894.5,330.3 L898.0,331.0 L900.8,329.4 L903.9,329.2 L906.9,328.7 L910.3,329.6 L913.0,327.8 L915.8,326.3 L918.7,325.2 L921.9,325.1 L925.0,325.0 L927.9,323.5 L931.2,323.3 L934.5,324.0 L937.4,322.0 L940.8,322.9 L943.7,321.0 L946.7,319.8 L950.0,320.0 L953.1,320.8 L956.0,320.1 L959.0,320.1 L962.1,320.2 L965.1,319.8 L967.9,317.5 L971.1,319.9 L974.1,319.8 L977.0,317.6 L980.0,318.0 L983.5,318.8 L986.7,317.0 L990.0,316.2 L993.5,317.3 L996.8,316.1 L1000.0,315.0 L1003.1,314.9 L1006.1,315.2 L1009.2,315.3 L1011.9,317.6 L1014.8,318.9 L1018.2,316.9 L1021.0,318.7 L1023.8,320.5 L1026.8,320.8 L1030.0,320.0 L1033.2,320.5 L1035.6,323.1 L1038.7,323.9 L1042.3,323.1 L1044.9,325.3 L1047.6,327.1 L1051.4,325.9 L1054.2,327.3 L1056.6,330.1 L1060.0,330.0 L1062.6,331.9 L1065.5,332.5 L1068.8,332.2 L1071.3,334.5 L1074.6,333.8 L1077.4,335.2 L1080.4,335.5 L1082.9,337.8 L1086.0,338.0"/><path d="M795.0,371.0 C799.4,367.8 797.8,358.2 817.0,355.0 C836.2,351.8 869.4,354.0 891.0,355.0 C912.6,356.0 911.2,359.0 925.0,360.0 C938.8,361.0 953.0,360.0 960.0,360.0"/><path d="M773.0,503.0 C778.2,498.6 789.4,491.4 799.0,481.0 C808.6,470.6 812.2,467.2 821.0,451.0 C829.8,434.8 834.2,413.6 843.0,400.0 C851.8,386.4 857.2,387.2 865.0,383.0 C872.8,378.8 878.6,379.8 882.0,379.0"/><path d="M808.0,424.0 L845.0,400.0"/><path d="M822.0,475.0 C822.0,469.2 823.4,464.6 830.0,460.0 C836.6,455.4 846.0,453.0 855.0,452.0 C864.0,451.0 870.4,452.4 875.0,455.0 C879.6,457.6 879.4,460.0 878.0,465.0 C876.6,470.0 873.6,475.4 868.0,480.0 C862.4,484.6 857.6,486.2 850.0,488.0 C842.4,489.8 835.6,491.6 830.0,489.0 C824.4,486.4 822.0,480.8 822.0,475.0Z"/><path d="M919.0,497.0 C923.8,494.2 933.8,489.0 943.0,491.0 C952.2,493.0 961.2,496.6 965.0,507.0 C968.8,517.4 966.4,530.4 962.0,543.0 C957.6,555.6 952.2,561.8 943.0,570.0 C933.8,578.2 924.6,585.2 916.0,584.0 C907.4,582.8 902.2,572.2 900.0,564.0 C897.8,555.8 900.2,551.0 905.0,543.0 C909.8,535.0 921.2,531.6 924.0,524.0 C926.8,516.4 920.0,510.4 919.0,505.0 C918.0,499.6 914.2,499.8 919.0,497.0Z"/><path d="M1104.0,545.0 C1099.2,548.0 1090.8,554.0 1080.0,560.0 C1069.2,566.0 1056.0,572.0 1050.0,575.0"/><path d="M925.0,606.0 C928.6,605.6 937.0,609.2 943.0,604.0 C949.0,598.8 949.4,586.6 955.0,580.0 C960.6,573.4 962.2,571.8 971.0,571.0 C979.8,570.2 989.8,572.8 999.0,576.0 C1008.2,579.2 1012.6,582.6 1017.0,587.0 C1021.4,591.4 1021.0,594.2 1021.0,598.0 C1021.0,601.8 1022.6,601.8 1017.0,606.0 C1011.4,610.2 1001.0,613.8 993.0,619.0 C985.0,624.2 984.0,629.0 977.0,632.0 C970.0,635.0 966.2,631.8 958.0,634.0 C949.8,636.2 940.4,641.2 936.0,643.0"/><path d="M967.0,222.0 C971.6,225.6 981.4,232.4 990.0,240.0 C998.6,247.6 1002.0,253.0 1010.0,260.0 C1018.0,267.0 1020.0,271.0 1030.0,275.0 C1040.0,279.0 1048.8,275.0 1060.0,280.0 C1071.2,285.0 1080.8,296.0 1086.0,300.0"/><path d="M650.0,620.0 C656.0,616.0 666.0,606.0 680.0,600.0 C694.0,594.0 704.0,594.0 720.0,590.0 C736.0,586.0 744.0,584.0 760.0,580.0 C776.0,576.0 792.0,572.0 800.0,570.0"/><path d="M640.0,600.0 C644.0,596.0 648.0,586.0 660.0,580.0 C672.0,574.0 684.0,574.0 700.0,570.0 C716.0,566.0 732.0,562.0 740.0,560.0"/><path d="M728.0,569.0 C734.8,565.4 746.8,559.2 762.0,551.0 C777.2,542.8 795.6,532.6 804.0,528.0"/><path d="M725.0,539.0 L795.0,575.0"/><path d="M760.0,450.0 C762.0,454.0 764.0,464.0 770.0,470.0 C776.0,476.0 780.0,478.0 790.0,480.0 C800.0,482.0 808.0,482.0 820.0,480.0 C832.0,478.0 840.0,476.0 850.0,470.0 C860.0,464.0 864.0,460.0 870.0,450.0 C876.0,440.0 878.0,426.0 880.0,420.0"/><path d="M640.0,410.0 C644.0,412.0 650.0,414.0 660.0,420.0 C670.0,426.0 678.0,434.0 690.0,440.0 C702.0,446.0 710.0,444.0 720.0,450.0 C730.0,456.0 732.0,462.0 740.0,470.0 C748.0,478.0 753.4,483.4 760.0,490.0 C766.6,496.6 770.4,500.4 773.0,503.0"/><path d="M590.0,590.0 C594.0,592.0 602.0,594.0 610.0,600.0 C618.0,606.0 622.0,612.0 630.0,620.0 C638.0,628.0 646.0,636.0 650.0,640.0"/><path d="M1061.6,424.4 C1064.2,428.8 1071.5,435.7 1074.8,446.7 C1078.1,457.7 1080.7,467.0 1078.0,479.5 C1075.4,491.9 1068.7,500.0 1061.4,509.0 C1054.1,518.0 1044.7,521.2 1041.7,524.5 C1038.6,527.9 1044.8,520.2 1046.0,525.7 C1047.2,531.3 1046.6,541.6 1047.8,552.2 C1049.0,562.9 1048.8,570.8 1051.9,579.0 C1055.1,587.3 1058.4,587.3 1063.5,593.4 C1068.7,599.6 1071.8,601.9 1077.8,609.8 C1083.9,617.7 1090.6,628.4 1093.8,633.1"/><path d="M1054.8,428.5 C1057.3,432.8 1064.3,439.9 1067.4,449.7 C1070.5,459.5 1072.7,466.7 1070.3,477.5 C1067.9,488.3 1062.5,495.1 1055.4,503.6 C1048.3,512.2 1038.3,515.9 1034.8,520.4 C1031.3,524.9 1037.0,519.5 1038.0,526.1 C1039.0,532.6 1038.5,542.1 1039.8,553.2 C1041.1,564.4 1041.0,572.9 1044.5,582.0 C1048.0,591.0 1051.9,591.8 1057.3,598.4 C1062.7,604.9 1065.5,606.8 1071.5,614.7 C1077.5,622.5 1084.0,633.0 1087.2,637.6"/><path d="M1048.8,432.2 C1051.2,436.2 1058.0,443.6 1060.9,452.4 C1063.8,461.1 1065.7,466.4 1063.5,475.7 C1061.4,485.1 1057.1,490.8 1050.2,499.0 C1043.3,507.2 1032.7,511.3 1028.8,516.8 C1025.0,522.2 1030.2,518.9 1031.0,526.4 C1031.8,533.8 1031.5,542.5 1032.9,554.1 C1034.3,565.7 1034.2,574.8 1038.0,584.5 C1041.7,594.2 1046.2,595.8 1051.8,602.7 C1057.4,609.6 1060.0,611.1 1065.9,618.9 C1071.8,626.7 1078.3,637.0 1081.4,641.5"/><path d="M1042.8,435.8 C1045.1,439.7 1051.6,447.4 1054.4,455.0 C1057.2,462.6 1058.6,466.1 1056.7,474.0 C1054.9,481.9 1051.8,486.5 1045.0,494.3 C1038.2,502.2 1027.0,506.7 1022.8,513.1 C1018.6,519.6 1023.4,518.3 1024.0,526.7 C1024.6,535.0 1024.4,542.9 1025.9,555.0 C1027.4,567.1 1027.4,576.7 1031.4,587.1 C1035.5,597.5 1040.5,599.8 1046.3,607.0 C1052.1,614.3 1054.5,615.5 1060.4,623.1 C1066.2,630.8 1072.6,641.0 1075.6,645.5"/><path d="M1038.6,438.4 C1040.8,442.1 1047.1,450.0 1049.8,456.9 C1052.4,463.7 1053.6,465.9 1051.9,472.7 C1050.2,479.6 1047.9,483.4 1041.2,491.0 C1034.6,498.6 1023.0,503.4 1018.6,510.6 C1014.1,517.7 1018.5,517.9 1019.0,526.9 C1019.5,535.9 1019.4,543.2 1021.0,555.6 C1022.5,568.0 1022.5,578.0 1026.8,588.9 C1031.1,599.8 1036.4,602.7 1042.4,610.1 C1048.3,617.6 1050.6,618.5 1056.4,626.2 C1062.2,633.8 1068.5,643.9 1071.5,648.3"/><path d="M1035.1,440.5 C1037.3,444.1 1043.5,452.1 1046.1,458.4 C1048.7,464.6 1049.6,465.8 1048.0,471.8 C1046.5,477.7 1044.8,481.0 1038.3,488.3 C1031.7,495.7 1019.8,500.7 1015.1,508.5 C1010.5,516.2 1014.6,517.5 1015.0,527.0 C1015.4,536.6 1015.4,543.5 1017.0,556.1 C1018.6,568.8 1018.6,579.1 1023.1,590.4 C1027.5,601.7 1033.2,605.0 1039.2,612.6 C1045.2,620.3 1047.4,621.0 1053.2,628.6 C1059.0,636.2 1065.2,646.2 1068.2,650.6"/><path d="M1031.7,442.6 C1033.9,446.1 1039.9,454.3 1042.4,459.9 C1044.9,465.5 1045.6,465.6 1044.2,470.8 C1042.7,475.9 1041.8,478.5 1035.3,485.7 C1028.8,492.8 1016.6,498.1 1011.7,506.4 C1006.9,514.7 1010.7,517.2 1011.0,527.2 C1011.3,537.3 1011.4,543.7 1013.0,556.6 C1014.7,569.6 1014.7,580.1 1019.3,591.8 C1024.0,603.5 1029.9,607.3 1036.1,615.1 C1042.2,622.9 1044.3,623.5 1050.0,631.0 C1055.8,638.6 1061.9,648.5 1064.9,652.8"/><path d="M1027.5,445.2 C1029.5,448.5 1035.4,456.9 1037.7,461.8 C1040.1,466.6 1040.6,465.4 1039.3,469.5 C1038.1,473.6 1037.9,475.5 1031.5,482.3 C1025.2,489.2 1012.6,494.8 1007.4,503.8 C1002.3,512.8 1005.9,516.7 1006.0,527.4 C1006.1,538.1 1006.3,544.0 1008.1,557.3 C1009.8,570.5 1009.9,581.5 1014.7,593.7 C1019.5,605.8 1025.9,610.1 1032.2,618.2 C1038.4,626.3 1040.3,626.6 1046.1,634.1 C1051.8,641.6 1057.8,651.3 1060.7,655.6"/><path d="M1022.3,448.3 C1024.3,451.5 1029.9,460.1 1032.2,464.0 C1034.4,468.0 1034.5,465.1 1033.5,468.0 C1032.5,470.9 1033.3,471.8 1027.1,478.4 C1020.8,484.9 1007.7,490.8 1002.3,500.7 C996.9,510.6 1000.1,516.2 1000.0,527.7 C1000.0,539.1 1000.3,544.4 1002.1,558.0 C1003.9,571.6 1004.0,583.1 1009.1,595.9 C1014.2,608.6 1021.0,613.5 1027.4,621.9 C1033.9,630.3 1035.6,630.3 1041.3,637.7 C1046.9,645.1 1052.9,654.8 1055.8,659.0"/><path d="M1042.0,437.0 C1044.4,441.8 1051.8,453.0 1054.0,461.0 C1056.2,469.0 1057.8,467.2 1053.0,477.0 C1048.2,486.8 1033.6,497.4 1030.0,510.0 C1026.4,522.6 1032.0,526.0 1035.0,540.0 C1038.0,554.0 1040.0,566.8 1045.0,580.0 C1050.0,593.2 1056.0,594.2 1060.0,606.0 C1064.0,617.8 1064.0,632.4 1065.0,639.0"/><path d="M1048.0,439.0 C1051.0,444.8 1061.4,458.4 1063.0,468.0 C1064.6,477.6 1060.4,478.4 1056.0,487.0 C1051.6,495.6 1043.8,502.4 1041.0,511.0 C1038.2,519.6 1039.4,519.2 1042.0,530.0 C1044.6,540.8 1050.2,554.2 1054.0,565.0 C1057.8,575.8 1059.2,574.4 1061.0,584.0 C1062.8,593.6 1060.2,601.8 1063.0,613.0 C1065.8,624.2 1072.6,634.6 1075.0,640.0"/><path d="M547.3,481.6 C550.3,479.9 559.5,479.1 568.6,478.1 C577.6,477.1 593.5,475.1 601.6,475.7 C609.7,476.3 613.6,479.1 617.0,481.6 C620.3,484.2 622.1,488.5 621.7,491.1 C621.3,493.6 617.0,495.2 614.6,497.0 C612.2,498.7 610.1,500.9 607.5,501.7 C605.0,502.5 601.0,500.9 599.2,501.7 C597.5,502.5 598.7,505.0 596.9,506.4 C595.1,507.8 591.2,507.8 588.6,509.9 C586.1,512.1 584.5,517.8 581.5,519.4 C578.6,521.0 571.5,521.0 570.9,519.4 C570.3,517.8 576.2,512.5 578.0,509.9 C579.8,507.4 582.7,505.4 581.5,504.0 C580.4,502.7 573.9,503.4 570.9,501.7 C568.0,499.9 565.6,495.6 563.9,493.4 C562.1,491.3 562.5,489.5 560.3,488.7 C558.1,487.9 553.0,489.9 550.9,488.7 C548.7,487.5 544.4,483.4 547.3,481.6Z"/><path d="M540.4,478.7 C543.9,476.6 554.9,475.7 565.6,474.5 C576.3,473.3 595.2,471.0 604.8,471.7 C614.4,472.4 619.0,475.7 623.0,478.7 C627.0,481.7 629.1,486.9 628.6,489.9 C628.1,492.9 623.0,494.8 620.2,496.9 C617.4,499.0 614.8,501.6 611.8,502.5 C608.8,503.4 604.1,501.6 602.0,502.5 C599.9,503.4 601.3,506.5 599.2,508.1 C597.1,509.7 592.4,509.7 589.4,512.3 C586.4,514.9 584.5,521.6 581.0,523.5 C577.5,525.4 569.1,525.4 568.4,523.5 C567.7,521.6 574.7,515.3 576.8,512.3 C578.9,509.3 582.4,506.9 581.0,505.3 C579.6,503.7 571.9,504.6 568.4,502.5 C564.9,500.4 562.1,495.3 560.0,492.7 C557.9,490.1 558.4,488.0 555.8,487.1 C553.2,486.2 547.2,488.5 544.6,487.1 C542.0,485.7 536.9,480.8 540.4,478.7Z"/><path d="M600.0,500.0 L600.8,503.3 L601.4,506.7 L602.4,510.0 L603.0,513.4 L605.1,516.4 L605.0,520.0 L606.7,523.1 L607.3,526.6 L608.2,529.9 L609.1,533.3 L610.1,536.6 L611.0,540.0 L611.7,543.2 L610.9,546.5 L611.6,549.7 L613.3,552.7 L613.0,556.0"/><path d="M594.0,506.0 L594.1,509.4 L594.6,512.8 L595.7,516.1 L596.1,519.5 L596.4,522.9 L598.0,526.0 L599.3,529.3 L599.1,532.9 L601.2,535.9 L601.2,539.6 L602.1,542.9 L604.0,546.0 L604.9,549.7 L605.5,553.5 L607.0,557.0"/><path d="M588.0,510.0 L588.3,513.4 L589.0,516.7 L588.7,520.1 L589.9,523.4 L590.3,526.7 L591.0,530.0 L592.5,533.0 L592.5,536.5 L593.1,539.8 L594.1,543.0 L596.5,545.7 L597.0,549.0 L598.4,552.3 L599.7,555.6 L601.0,559.0"/><path d="M580.0,517.0 L580.4,520.1 L582.2,522.8 L581.5,526.1 L581.7,529.2 L583.2,532.0 L584.0,535.0 L585.3,537.7 L586.4,540.5 L586.2,543.8 L588.0,546.3 L589.0,549.2 L590.0,552.0 L591.1,555.7 L593.0,559.0"/><path d="M1062.8,222.0 C1067.9,227.9 1082.0,242.2 1088.2,251.3 C1094.5,260.4 1092.9,259.9 1094.0,267.6 C1095.2,275.3 1094.6,281.4 1094.0,289.7 C1093.4,298.0 1092.6,302.1 1091.1,309.2 C1089.6,316.2 1089.1,320.0 1086.5,325.1 C1083.8,330.2 1082.8,331.4 1077.8,334.7 C1072.7,337.9 1068.2,338.1 1061.3,341.4 C1054.4,344.6 1050.2,345.5 1043.5,350.9 C1036.8,356.3 1033.1,361.7 1027.8,368.6 C1022.5,375.5 1022.1,379.1 1016.9,385.5 C1011.7,391.9 1005.7,394.7 1001.8,400.6 C997.8,406.6 995.8,410.1 997.2,415.1 C998.5,420.2 1003.3,421.7 1008.4,426.1 C1013.5,430.5 1018.0,433.8 1022.6,437.2 C1027.3,440.7 1029.9,442.1 1031.8,443.3"/><path d="M1057.6,222.0 C1063.0,228.1 1078.0,243.4 1084.5,252.7 C1091.0,261.9 1089.0,260.8 1090.1,268.2 C1091.2,275.5 1090.6,281.4 1090.0,289.4 C1089.4,297.5 1088.6,301.6 1087.2,308.3 C1085.8,315.1 1085.3,318.6 1082.9,323.2 C1080.6,327.8 1080.2,328.4 1075.6,331.3 C1070.9,334.3 1066.5,334.5 1059.6,337.8 C1052.7,341.1 1047.9,342.1 1041.0,347.8 C1034.0,353.5 1030.1,359.1 1024.6,366.1 C1019.2,373.2 1019.0,376.5 1013.8,383.0 C1008.6,389.4 1002.6,391.6 998.5,398.3 C994.5,404.9 991.9,410.1 993.3,416.3 C994.8,422.5 1000.5,424.3 1005.9,429.1 C1011.3,434.0 1015.5,436.9 1020.2,440.4 C1025.0,443.9 1027.7,445.4 1029.6,446.7"/><path d="M1051.1,222.0 C1056.8,228.5 1072.9,244.9 1079.7,254.3 C1086.5,263.7 1084.1,262.0 1085.1,268.9 C1086.2,275.9 1085.6,281.4 1085.0,289.1 C1084.5,296.8 1083.6,300.9 1082.3,307.3 C1081.0,313.6 1080.4,316.9 1078.5,320.9 C1076.6,324.8 1077.0,324.7 1072.8,327.2 C1068.6,329.7 1064.5,329.9 1057.5,333.2 C1050.5,336.6 1045.2,337.9 1037.8,343.9 C1030.4,349.9 1026.3,355.9 1020.7,363.1 C1015.1,370.3 1015.1,373.4 1009.9,379.8 C1004.7,386.2 998.8,387.7 994.5,395.3 C990.2,402.9 986.9,410.2 988.5,417.7 C990.2,425.3 996.9,427.6 1002.7,433.0 C1008.4,438.3 1012.5,440.9 1017.3,444.5 C1022.1,448.0 1024.9,449.5 1026.8,450.8"/><path d="M1043.3,222.0 C1049.5,228.9 1066.9,246.8 1074.1,256.3 C1081.3,265.9 1078.2,263.3 1079.2,269.8 C1080.2,276.3 1079.6,281.4 1079.0,288.7 C1078.5,295.9 1077.6,300.1 1076.4,306.0 C1075.3,311.9 1074.6,314.8 1073.3,318.0 C1071.9,321.3 1073.1,320.2 1069.5,322.2 C1065.8,324.1 1062.0,324.4 1054.9,327.8 C1047.8,331.2 1041.8,332.9 1034.0,339.3 C1026.2,345.6 1021.7,352.1 1015.9,359.5 C1010.2,366.8 1010.5,369.6 1005.3,376.0 C1000.0,382.5 994.2,383.1 989.7,391.8 C985.2,400.5 981.0,410.3 982.8,419.5 C984.6,428.6 992.7,431.6 998.8,437.6 C1005.0,443.6 1008.8,445.6 1013.7,449.3 C1018.6,452.9 1021.5,454.5 1023.5,455.8"/><path d="M1040.0,224.0 C1043.6,229.2 1052.8,236.8 1058.0,250.0 C1063.2,263.2 1064.0,274.0 1066.0,290.0 C1068.0,306.0 1066.2,320.4 1068.0,330.0 C1069.8,339.6 1073.6,336.4 1075.0,338.0"/><path d="M1020.0,224.0 C1024.0,229.2 1034.0,234.8 1040.0,250.0 C1046.0,265.2 1047.0,283.0 1050.0,300.0 C1053.0,317.0 1052.6,326.6 1055.0,335.0 C1057.4,343.4 1060.6,340.6 1062.0,342.0"/></g></g><path d="M525.0,222.0 L941.0,222.0 L939.3,225.2 L937.2,228.3 L934.5,230.9 L933.7,234.7 L931.8,237.8 L930.0,241.0 L931.3,244.6 L933.0,248.0 L936.8,247.9 L940.3,249.4 L944.0,250.0 L946.8,252.9 L949.5,255.9 L953.0,258.0 L957.5,259.1 L961.2,261.5 L965.0,264.0 L968.5,265.7 L970.0,269.6 L972.9,271.9 L976.0,274.0 L980.0,272.8 L984.0,275.3 L988.0,274.0 L991.3,271.4 L993.0,267.6 L995.2,264.2 L996.6,260.2 L998.6,256.6 L1002.0,254.0 L1005.0,252.1 L1007.4,249.0 L1010.6,247.3 L1013.6,245.4 L1017.0,244.0 L1020.1,240.9 L1024.3,239.9 L1028.0,238.0 L1029.4,234.7 L1031.8,231.9 L1032.5,228.3 L1034.0,225.0 L1038.1,224.4 L1042.0,223.0 L1046.0,222.0 L1050.0,222.8 L1054.0,222.7 L1058.1,222.6 L1061.9,224.9 L1066.0,224.0 L1068.9,227.1 L1072.6,228.8 L1076.2,230.5 L1080.0,232.0 L1082.4,234.7 L1084.6,237.6 L1086.5,240.7 L1088.9,243.4 L1089.4,247.4 L1092.0,250.0 L1093.4,253.3 L1093.6,257.1 L1095.9,260.1 L1095.7,264.0 L1098.0,267.0 L1097.1,270.8 L1099.3,274.7 L1098.8,278.5 L1096.9,282.3 L1098.1,286.2 L1098.0,290.0 L1096.2,293.8 L1097.1,298.0 L1097.3,302.2 L1095.3,306.0 L1095.0,310.0 L1093.7,313.9 L1094.4,318.1 L1094.3,322.2 L1093.0,326.1 L1092.0,330.0 L1089.0,332.3 L1087.4,335.6 L1086.0,339.0 L1082.4,341.0 L1078.5,341.6 L1074.8,343.0 L1071.0,344.1 L1066.6,343.3 L1063.0,345.0 L1060.0,347.5 L1056.1,348.5 L1052.9,350.5 L1049.8,352.9 L1046.0,354.0 L1043.0,356.4 L1041.7,360.3 L1038.2,362.3 L1036.7,366.0 L1033.7,368.3 L1031.0,371.0 L1029.4,374.8 L1027.1,378.1 L1023.4,380.5 L1021.5,384.2 L1020.0,388.0 L1017.9,390.9 L1014.3,392.3 L1013.0,396.0 L1010.2,398.2 L1006.8,399.8 L1005.0,403.0 L1003.3,406.5 L1003.3,410.7 L1001.0,414.0 L1003.5,417.9 L1008.2,419.4 L1011.0,423.0 L1014.2,424.7 L1016.2,428.0 L1019.7,429.3 L1022.5,431.4 L1025.0,434.0 L1028.6,435.1 L1031.6,437.1 L1034.0,440.0 L1104.0,440.0 L1104.0,657.0 L951.0,657.0 L950.2,653.4 L948.4,650.2 L948.3,646.4 L947.0,643.0 L943.1,644.0 L939.0,644.5 L935.0,645.0 L931.2,644.1 L927.5,645.5 L923.7,645.6 L920.0,646.0 L917.9,643.0 L914.0,642.1 L911.2,639.9 L909.0,637.0 L905.0,633.6 L900.0,632.0 L899.1,628.0 L896.1,624.9 L895.0,621.0 L892.3,617.6 L891.5,613.2 L890.0,609.2 L887.0,606.0 L883.0,606.8 L879.0,604.8 L875.0,605.0 L871.0,606.0 L869.9,602.2 L868.1,598.7 L867.0,595.0 L862.8,592.8 L860.0,589.0 L855.9,590.7 L851.4,588.8 L847.3,591.2 L843.0,591.0 L841.7,586.8 L838.9,583.3 L838.5,578.7 L836.0,575.0 L832.2,575.3 L828.6,576.5 L824.9,577.3 L821.0,577.0 L816.8,574.0 L812.0,572.0 L807.9,574.1 L803.5,574.7 L799.0,575.0 L795.7,577.1 L792.0,578.7 L789.1,581.5 L786.0,584.0 L782.0,584.4 L778.1,582.5 L774.0,584.2 L769.9,584.5 L766.0,583.0 L762.7,586.2 L758.7,588.4 L755.0,591.0 L753.4,594.4 L750.8,596.8 L748.1,599.0 L745.3,601.3 L743.0,604.0 L740.7,607.7 L737.3,610.3 L734.0,613.0 L729.9,610.1 L725.0,609.0 L720.2,606.8 L715.0,607.0 L710.9,607.6 L706.9,608.5 L703.0,610.0 L699.9,611.8 L697.5,614.8 L694.7,617.0 L691.7,619.0 L688.0,620.0 L685.1,623.0 L684.0,627.0 L684.2,631.1 L684.1,635.2 L686.0,639.0 L682.7,642.6 L678.0,644.0 L675.7,647.3 L674.0,651.0 L670.0,649.7 L666.2,647.8 L662.0,647.0 L659.1,643.2 L657.0,639.0 L654.4,635.9 L649.9,635.9 L647.3,632.9 L644.0,631.0 L642.0,627.8 L639.8,624.8 L637.0,622.3 L634.0,620.0 L632.7,616.5 L631.2,613.1 L629.7,609.7 L627.0,607.0 L626.6,602.8 L627.5,598.5 L628.0,594.2 L627.0,590.0 L628.3,586.1 L627.5,582.0 L628.0,578.0 L628.2,574.4 L627.0,571.0 L623.3,568.8 L619.1,568.2 L615.0,567.0 L610.0,563.0 L608.0,557.0 L604.2,557.2 L600.5,558.3 L596.7,558.3 L593.0,559.0 L588.8,558.2 L584.4,559.1 L580.3,557.1 L576.0,557.0 L572.3,556.2 L569.0,558.0 L566.0,553.0 L571.0,551.0 L570.6,546.7 L568.9,542.8 L567.0,539.0 L564.3,536.7 L562.0,534.0 L557.9,531.8 L553.4,530.5 L549.0,529.0 L547.9,525.5 L547.0,522.0 L547.9,518.5 L547.0,515.0 L543.3,516.1 L539.7,514.3 L536.0,516.2 L532.3,514.7 L528.7,515.0 L525.0,515.0Z" fill="none" stroke="#000" stroke-width="1.2"/><rect x="525" y="222.5" width="579" height="434.5" fill="none" stroke="#3a84dc" stroke-width="2"/></svg>
<div class="lbtn" style="left:-4px;top:102px;width:11px;height:55px"></div>
<div class="lbtn" style="left:-4px;top:211px;width:6px;height:47px"></div>
<div id="panel">
  <div class="title">地下空间适宜性评价</div>
  <svg class="menu" width="30" height="24" viewBox="0 0 30 24">
    <polygon points="0,6 8,11 0,16" fill="#3a78c2"/>
    <rect x="9" y="0" width="20" height="3" rx="1" fill="#3a78c2"/>
    <rect x="11" y="9.5" width="18" height="3" rx="1" fill="#3a78c2"/>
    <rect x="9" y="19" width="20" height="3" rx="1" fill="#3a78c2"/>
  </svg>
  <svg class="dia" width="18" height="14" viewBox="0 0 18 14">
    <polygon points="10,0.5 16.5,7 10,13.5 3.5,7" fill="#c5d3e5"/>
    <polygon points="6,2 11,7 6,12 1,7" fill="#2b5a93"/>
  </svg>
  <div class="sub">地下空间适宜性评价结果</div>
  <div class="hr"></div>
  <div class="area"><span class="lab">选区总面积：</span><span class="val">990.065 km²</span></div>
  <div class="sw" style="top:148px;background:#92d050"></div>
  <div class="lt" style="top:156px;">较适宜</div><div class="lv" style="top:156px;">837.294km²</div><div class="lp" style="top:156px;">84.5%</div>
  <div class="sw" style="top:203px;background:#00b050"></div>
  <div class="lt" style="top:211px;">适宜</div><div class="lv" style="top:211px;">143.77km²</div><div class="lp" style="top:211px;">14.5%</div>
  <div class="sw" style="top:258px;background:#ffff00"></div>
  <div class="lt" style="top:266px;">基本适宜</div><div class="lv" style="top:266px;">9km²</div><div class="lp" style="top:266px;">1%</div>
  <div class="radio"><div class="dot"></div></div>
  <div class="rt">评价因子得分：</div>
  <table class="tb">
    <tr class="hd"><td class="diag"><svg width="120" height="48" style="position:absolute;left:0;top:0"><line x1="4" y1="5" x2="117" y2="46" stroke="#333" stroke-width="1"/></svg><span class="d1">评价等级</span><span class="d2">因子</span></td><td>较适宜</td><td>适宜</td><td>基本适宜</td></tr>
    <tr><td>地表水体</td><td>0.4</td><td>0.5</td><td>0.1</td></tr>
    <tr><td>地形地貌</td><td>0.1</td><td>0.1</td><td>0.1</td></tr>
    <tr><td>地面沉降</td><td>0.5</td><td>0.5</td><td>0.5</td></tr>
    <tr><td>地壳稳定性</td><td>0.2</td><td>0.1</td><td>0.3</td></tr>
    <tr><td>砂土液化</td><td>0.3</td><td>0.3</td><td>0.3</td></tr>
    <tr><td>地下水腐蚀性</td><td>0.1</td><td>0.1</td><td>0.1</td></tr>
    <tr><td>岩性组合</td><td>0.4</td><td>0.8</td><td>0.2</td></tr>
    <tr><td>地下水水位</td><td>0</td><td>0</td><td>0</td></tr>
    <tr><td>地下水富水性</td><td>0.1</td><td>0.2</td><td>0</td></tr>
    <tr><td>地面地物类型</td><td>0.1</td><td>0.1</td><td>0</td></tr>
    <tr><td>已开发地下空间</td><td>0.3</td><td>0.3</td><td>0.2</td></tr>
  </table>
  <div class="btn" style="left:93px;width:96px;">生成报告</div>
  <div class="btn" style="left:196px;width:96px;">导出结果</div>
  <div class="btn" style="left:299px;width:68px;">返回</div>
</div>

</body></html>
